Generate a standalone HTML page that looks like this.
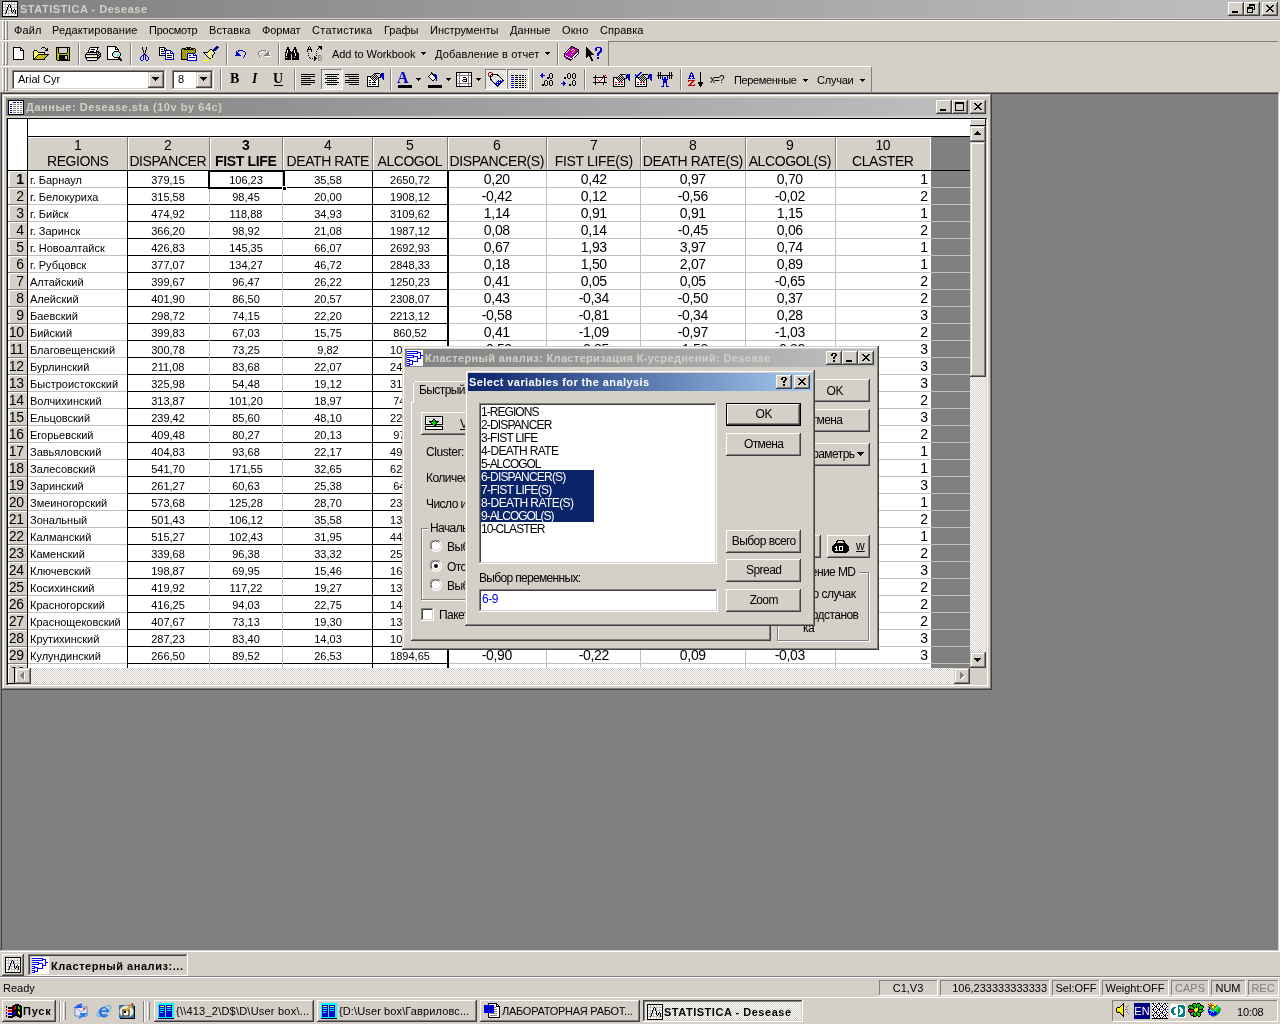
<!DOCTYPE html>
<html><head><meta charset="utf-8"><title>STATISTICA - Desease</title>
<style>
html,body{margin:0;padding:0;}
body{width:1280px;height:1024px;overflow:hidden;position:relative;background:#D4D0C8;font-family:"Liberation Sans",sans-serif;font-size:11px;}
.a{position:absolute;box-sizing:border-box;}
.t{position:absolute;white-space:pre;}
svg{display:block;}
</style></head><body><div id="root" style="position:absolute;left:0;top:0;width:1280px;height:1024px;will-change:transform;">
<div class="a " style="left:0px;top:0px;width:1280px;height:18px;background:linear-gradient(to right,#808080,#C0C0C0);"></div>
<span class="t" style="top:4px;font-size:11px;line-height:11px;color:#D4D0C8;font-weight:bold;letter-spacing:0.52px;left:20px;">STATISTICA - Desease</span>
<div class="a " style="left:1228px;top:2px;width:16px;height:14px;background:#D4D0C8;box-shadow:inset -1px -1px 0 #404040,inset 1px 1px 0 #FFFFFF,inset -2px -2px 0 #808080,inset 2px 2px 0 #D4D0C8;"></div>
<div class="a " style="left:1244px;top:2px;width:16px;height:14px;background:#D4D0C8;box-shadow:inset -1px -1px 0 #404040,inset 1px 1px 0 #FFFFFF,inset -2px -2px 0 #808080,inset 2px 2px 0 #D4D0C8;"></div>
<div class="a " style="left:1262px;top:2px;width:16px;height:14px;background:#D4D0C8;box-shadow:inset -1px -1px 0 #404040,inset 1px 1px 0 #FFFFFF,inset -2px -2px 0 #808080,inset 2px 2px 0 #D4D0C8;"></div>
<div class="a " style="left:0px;top:19px;width:1280px;height:1px;background:#808080;"></div>
<div class="a " style="left:0px;top:20px;width:1280px;height:1px;background:#FFFFFF;"></div>
<span class="t" style="top:25px;font-size:11px;line-height:11px;color:#000;letter-spacing:0.11px;left:14px;">Файл</span>
<span class="t" style="top:25px;font-size:11px;line-height:11px;color:#000;letter-spacing:0.12px;left:52px;">Редактирование</span>
<span class="t" style="top:25px;font-size:11px;line-height:11px;color:#000;letter-spacing:-0.22px;left:149px;">Просмотр</span>
<span class="t" style="top:25px;font-size:11px;line-height:11px;color:#000;letter-spacing:0.09px;left:209px;">Вставка</span>
<span class="t" style="top:25px;font-size:11px;line-height:11px;color:#000;letter-spacing:-0.1px;left:262px;">Формат</span>
<span class="t" style="top:25px;font-size:11px;line-height:11px;color:#000;letter-spacing:0.27px;left:312px;">Статистика</span>
<span class="t" style="top:25px;font-size:11px;line-height:11px;color:#000;letter-spacing:-0.01px;left:384px;">Графы</span>
<span class="t" style="top:25px;font-size:11px;line-height:11px;color:#000;letter-spacing:-0.01px;left:430px;">Инструменты</span>
<span class="t" style="top:25px;font-size:11px;line-height:11px;color:#000;letter-spacing:0.12px;left:510px;">Данные</span>
<span class="t" style="top:25px;font-size:11px;line-height:11px;color:#000;letter-spacing:0.23px;left:562px;">Окно</span>
<span class="t" style="top:25px;font-size:11px;line-height:11px;color:#000;letter-spacing:0.05px;left:600px;">Справка</span>
<div class="a " style="left:2px;top:21px;width:1px;height:19px;background:#FFFFFF;"></div>
<div class="a " style="left:4px;top:21px;width:1px;height:19px;background:#808080;"></div>
<div class="a " style="left:3px;top:39px;width:2px;height:1px;background:#808080;"></div>
<div class="a " style="left:5px;top:21px;width:1px;height:19px;background:#FFFFFF;"></div>
<div class="a " style="left:7px;top:21px;width:1px;height:19px;background:#808080;"></div>
<div class="a " style="left:6px;top:39px;width:2px;height:1px;background:#808080;"></div>
<div class="a " style="left:0px;top:40px;width:608px;height:1px;background:#FFFFFF;"></div>
<div class="a " style="left:608px;top:41px;width:670px;height:1px;background:#808080;"></div>
<div class="a " style="left:608px;top:41px;width:1px;height:25px;background:#808080;"></div>
<div class="a " style="left:2px;top:42px;width:1px;height:23px;background:#FFFFFF;"></div>
<div class="a " style="left:4px;top:42px;width:1px;height:23px;background:#808080;"></div>
<div class="a " style="left:3px;top:64px;width:2px;height:1px;background:#808080;"></div>
<div class="a " style="left:5px;top:42px;width:1px;height:23px;background:#FFFFFF;"></div>
<div class="a " style="left:7px;top:42px;width:1px;height:23px;background:#808080;"></div>
<div class="a " style="left:6px;top:64px;width:2px;height:1px;background:#808080;"></div>
<div class="a " style="left:0px;top:66px;width:871px;height:1px;background:#FFFFFF;"></div>
<div class="a " style="left:871px;top:67px;width:1px;height:25px;background:#808080;"></div>
<div class="a " style="left:2px;top:68px;width:1px;height:23px;background:#FFFFFF;"></div>
<div class="a " style="left:4px;top:68px;width:1px;height:23px;background:#808080;"></div>
<div class="a " style="left:3px;top:90px;width:2px;height:1px;background:#808080;"></div>
<div class="a " style="left:5px;top:68px;width:1px;height:23px;background:#FFFFFF;"></div>
<div class="a " style="left:7px;top:68px;width:1px;height:23px;background:#808080;"></div>
<div class="a " style="left:6px;top:90px;width:2px;height:1px;background:#808080;"></div>
<div class="a " style="left:0px;top:92px;width:1280px;height:1px;background:#808080;"></div>
<div class="a " style="left:1px;top:93px;width:1279px;height:1px;background:#404040;"></div>
<div class="a " style="left:0px;top:92px;width:1px;height:860px;background:#808080;"></div>
<div class="a " style="left:1px;top:93px;width:1px;height:858px;background:#404040;"></div>
<div class="a " style="left:2px;top:94px;width:1276px;height:856px;background:#808080;"></div>
<div class="a " style="left:1278px;top:93px;width:1px;height:858px;background:#D4D0C8;"></div>
<div class="a " style="left:1279px;top:92px;width:1px;height:860px;background:#FFFFFF;"></div>
<div class="a " style="left:1px;top:950px;width:1278px;height:1px;background:#D4D0C8;"></div>
<div class="a " style="left:0px;top:951px;width:1280px;height:1px;background:#FFFFFF;"></div>
<div class="a " style="left:2px;top:94px;width:990px;height:596px;background:#D4D0C8;box-shadow:inset -1px -1px 0 #404040,inset 1px 1px 0 #D4D0C8,inset -2px -2px 0 #808080,inset 2px 2px 0 #FFFFFF;"></div>
<div class="a " style="left:6px;top:98px;width:982px;height:18px;background:linear-gradient(to right,#808080,#C0C0C0);"></div>
<span class="t" style="top:102px;font-size:11px;line-height:11px;color:#D4D0C8;font-weight:bold;letter-spacing:0.54px;left:26px;">Данные: Desease.sta (10v by 64c)</span>
<div class="a " style="left:936px;top:100px;width:16px;height:14px;background:#D4D0C8;box-shadow:inset -1px -1px 0 #404040,inset 1px 1px 0 #FFFFFF,inset -2px -2px 0 #808080,inset 2px 2px 0 #D4D0C8;"></div>
<div class="a " style="left:952px;top:100px;width:16px;height:14px;background:#D4D0C8;box-shadow:inset -1px -1px 0 #404040,inset 1px 1px 0 #FFFFFF,inset -2px -2px 0 #808080,inset 2px 2px 0 #D4D0C8;"></div>
<div class="a " style="left:970px;top:100px;width:16px;height:14px;background:#D4D0C8;box-shadow:inset -1px -1px 0 #404040,inset 1px 1px 0 #FFFFFF,inset -2px -2px 0 #808080,inset 2px 2px 0 #D4D0C8;"></div>
<div class="a " style="left:6px;top:117px;width:982px;height:569px;background:#FFFFFF;box-shadow:inset -1px -1px 0 #FFFFFF,inset 1px 1px 0 #808080,inset -2px -2px 0 #D4D0C8,inset 2px 2px 0 #404040;"></div>
<div class="a " style="left:6px;top:117px;width:982px;height:1px;background:#D4D0C8;"></div>
<div class="a " style="left:7px;top:118px;width:980px;height:1px;background:#000000;"></div>
<div class="a " style="left:7px;top:118px;width:1px;height:567px;background:#000000;"></div>
<div class="a " style="left:27px;top:119px;width:1px;height:549px;background:#000000;"></div>
<div class="a " style="left:28px;top:136px;width:942px;height:1px;background:#000000;"></div>
<div class="a " style="left:28px;top:137px;width:903px;height:33px;background:#D4D0C8;"></div>
<div class="a " style="left:28px;top:137px;width:903px;height:1px;background:#FFFFFF;"></div>
<div class="a " style="left:127px;top:137px;width:1px;height:33px;background:#808080;"></div>
<div class="a " style="left:128px;top:137px;width:1px;height:33px;background:#FFFFFF;"></div>
<span class="t" style="top:138px;font-size:14px;line-height:14px;color:#000;letter-spacing:-0.38px;left:-422px;width:1000px;text-align:center;text-indent:-0.38px;">1</span>
<span class="t" style="top:154px;font-size:14px;line-height:14px;color:#000;letter-spacing:-0.44px;left:-422px;width:1000px;text-align:center;text-indent:-0.44px;">REGIONS</span>
<div class="a " style="left:209px;top:137px;width:1px;height:33px;background:#808080;"></div>
<div class="a " style="left:210px;top:137px;width:1px;height:33px;background:#FFFFFF;"></div>
<span class="t" style="top:138px;font-size:14px;line-height:14px;color:#000;letter-spacing:-0.38px;left:-332px;width:1000px;text-align:center;text-indent:-0.38px;">2</span>
<span class="t" style="top:154px;font-size:14px;line-height:14px;color:#000;letter-spacing:-0.43px;left:-332px;width:1000px;text-align:center;text-indent:-0.43px;">DISPANCER</span>
<div class="a " style="left:282px;top:137px;width:1px;height:33px;background:#808080;"></div>
<div class="a " style="left:283px;top:137px;width:1px;height:33px;background:#FFFFFF;"></div>
<span class="t" style="top:138px;font-size:14px;line-height:14px;color:#000;font-weight:bold;letter-spacing:-0.38px;left:-254px;width:1000px;text-align:center;text-indent:-0.38px;">3</span>
<span class="t" style="top:154px;font-size:14px;line-height:14px;color:#000;font-weight:bold;letter-spacing:-0.34px;left:-254px;width:1000px;text-align:center;text-indent:-0.34px;">FIST LIFE</span>
<div class="a " style="left:372px;top:137px;width:1px;height:33px;background:#808080;"></div>
<div class="a " style="left:373px;top:137px;width:1px;height:33px;background:#FFFFFF;"></div>
<span class="t" style="top:138px;font-size:14px;line-height:14px;color:#000;letter-spacing:-0.38px;left:-172px;width:1000px;text-align:center;text-indent:-0.38px;">4</span>
<span class="t" style="top:154px;font-size:14px;line-height:14px;color:#000;letter-spacing:-0.42px;left:-172px;width:1000px;text-align:center;text-indent:-0.42px;">DEATH RATE</span>
<div class="a " style="left:447px;top:137px;width:1px;height:33px;background:#808080;"></div>
<div class="a " style="left:448px;top:137px;width:1px;height:33px;background:#FFFFFF;"></div>
<span class="t" style="top:138px;font-size:14px;line-height:14px;color:#000;letter-spacing:-0.38px;left:-90px;width:1000px;text-align:center;text-indent:-0.38px;">5</span>
<span class="t" style="top:154px;font-size:14px;line-height:14px;color:#000;letter-spacing:-0.46px;left:-90px;width:1000px;text-align:center;text-indent:-0.46px;">ALCOGOL</span>
<div class="a " style="left:546px;top:137px;width:1px;height:33px;background:#808080;"></div>
<div class="a " style="left:547px;top:137px;width:1px;height:33px;background:#FFFFFF;"></div>
<span class="t" style="top:138px;font-size:14px;line-height:14px;color:#000;letter-spacing:-0.38px;left:-3px;width:1000px;text-align:center;text-indent:-0.38px;">6</span>
<span class="t" style="top:154px;font-size:14px;line-height:14px;color:#000;letter-spacing:-0.4px;left:-3px;width:1000px;text-align:center;text-indent:-0.4px;">DISPANCER(S)</span>
<div class="a " style="left:640px;top:137px;width:1px;height:33px;background:#808080;"></div>
<div class="a " style="left:641px;top:137px;width:1px;height:33px;background:#FFFFFF;"></div>
<span class="t" style="top:138px;font-size:14px;line-height:14px;color:#000;letter-spacing:-0.38px;left:94px;width:1000px;text-align:center;text-indent:-0.38px;">7</span>
<span class="t" style="top:154px;font-size:14px;line-height:14px;color:#000;letter-spacing:-0.33px;left:94px;width:1000px;text-align:center;text-indent:-0.33px;">FIST LIFE(S)</span>
<div class="a " style="left:745px;top:137px;width:1px;height:33px;background:#808080;"></div>
<div class="a " style="left:746px;top:137px;width:1px;height:33px;background:#FFFFFF;"></div>
<span class="t" style="top:138px;font-size:14px;line-height:14px;color:#000;letter-spacing:-0.38px;left:193px;width:1000px;text-align:center;text-indent:-0.38px;">8</span>
<span class="t" style="top:154px;font-size:14px;line-height:14px;color:#000;letter-spacing:-0.39px;left:193px;width:1000px;text-align:center;text-indent:-0.39px;">DEATH RATE(S)</span>
<div class="a " style="left:835px;top:137px;width:1px;height:33px;background:#808080;"></div>
<div class="a " style="left:836px;top:137px;width:1px;height:33px;background:#FFFFFF;"></div>
<span class="t" style="top:138px;font-size:14px;line-height:14px;color:#000;letter-spacing:-0.38px;left:290px;width:1000px;text-align:center;text-indent:-0.38px;">9</span>
<span class="t" style="top:154px;font-size:14px;line-height:14px;color:#000;letter-spacing:-0.41px;left:290px;width:1000px;text-align:center;text-indent:-0.41px;">ALCOGOL(S)</span>
<span class="t" style="top:138px;font-size:14px;line-height:14px;color:#000;letter-spacing:-0.38px;left:383px;width:1000px;text-align:center;text-indent:-0.38px;">10</span>
<span class="t" style="top:154px;font-size:14px;line-height:14px;color:#000;letter-spacing:-0.44px;left:383px;width:1000px;text-align:center;text-indent:-0.44px;">CLASTER</span>
<div class="a " style="left:930px;top:137px;width:1px;height:33px;background:#FFFFFF;"></div>
<div class="a " style="left:931px;top:137px;width:39px;height:531px;background:#808080;"></div>
<div class="a " style="left:8px;top:170px;width:962px;height:1px;background:#000000;"></div>
<div class="a " style="left:8px;top:171px;width:19px;height:16px;background:#D4D0C8;"></div>
<div class="a " style="left:8px;top:171px;width:19px;height:1px;background:#FFFFFF;"></div>
<div class="a " style="left:8px;top:171px;width:1px;height:16px;background:#FFFFFF;"></div>
<div class="a " style="left:9px;top:171px;width:1px;height:16px;background:#FFFFFF;"></div>
<div class="a " style="left:8px;top:187px;width:19px;height:1px;background:#808080;"></div>
<div class="a " style="left:28px;top:187px;width:99px;height:1px;background:#C0C0C0;"></div>
<div class="a " style="left:128px;top:187px;width:319px;height:1px;background:#000000;"></div>
<div class="a " style="left:449px;top:187px;width:482px;height:1px;background:#C0C0C0;"></div>
<div class="a " style="left:931px;top:187px;width:39px;height:1px;background:#C0C0C0;"></div>
<span class="t" style="top:172px;font-size:14px;line-height:14px;color:#000;font-weight:bold;letter-spacing:-0.38px;right:1256.38px;">1</span>
<span class="t" style="top:175px;font-size:11px;line-height:11px;color:#000;left:30px;">г. Барнаул</span>
<span class="t" style="top:175px;font-size:11px;line-height:11px;color:#000;left:-332px;width:1000px;text-align:center;">379,15</span>
<span class="t" style="top:175px;font-size:11px;line-height:11px;color:#000;left:-254px;width:1000px;text-align:center;">106,23</span>
<span class="t" style="top:175px;font-size:11px;line-height:11px;color:#000;left:-172px;width:1000px;text-align:center;">35,58</span>
<span class="t" style="top:175px;font-size:11px;line-height:11px;color:#000;left:-90px;width:1000px;text-align:center;">2650,72</span>
<span class="t" style="top:172px;font-size:14px;line-height:14px;color:#000;letter-spacing:-0.32px;left:-3px;width:1000px;text-align:center;text-indent:-0.32px;">0,20</span>
<span class="t" style="top:172px;font-size:14px;line-height:14px;color:#000;letter-spacing:-0.32px;left:94px;width:1000px;text-align:center;text-indent:-0.32px;">0,42</span>
<span class="t" style="top:172px;font-size:14px;line-height:14px;color:#000;letter-spacing:-0.32px;left:193px;width:1000px;text-align:center;text-indent:-0.32px;">0,97</span>
<span class="t" style="top:172px;font-size:14px;line-height:14px;color:#000;letter-spacing:-0.32px;left:290px;width:1000px;text-align:center;text-indent:-0.32px;">0,70</span>
<span class="t" style="top:172px;font-size:14px;line-height:14px;color:#000;letter-spacing:-0.38px;right:352.38px;">1</span>
<div class="a " style="left:8px;top:188px;width:19px;height:16px;background:#D4D0C8;"></div>
<div class="a " style="left:8px;top:188px;width:19px;height:1px;background:#FFFFFF;"></div>
<div class="a " style="left:8px;top:188px;width:1px;height:16px;background:#FFFFFF;"></div>
<div class="a " style="left:9px;top:188px;width:1px;height:16px;background:#FFFFFF;"></div>
<div class="a " style="left:8px;top:204px;width:19px;height:1px;background:#808080;"></div>
<div class="a " style="left:28px;top:204px;width:99px;height:1px;background:#C0C0C0;"></div>
<div class="a " style="left:128px;top:204px;width:319px;height:1px;background:#000000;"></div>
<div class="a " style="left:449px;top:204px;width:482px;height:1px;background:#C0C0C0;"></div>
<div class="a " style="left:931px;top:204px;width:39px;height:1px;background:#C0C0C0;"></div>
<span class="t" style="top:189px;font-size:14px;line-height:14px;color:#000;letter-spacing:-0.38px;right:1256.38px;">2</span>
<span class="t" style="top:192px;font-size:11px;line-height:11px;color:#000;left:30px;">г. Белокуриха</span>
<span class="t" style="top:192px;font-size:11px;line-height:11px;color:#000;left:-332px;width:1000px;text-align:center;">315,58</span>
<span class="t" style="top:192px;font-size:11px;line-height:11px;color:#000;left:-254px;width:1000px;text-align:center;">98,45</span>
<span class="t" style="top:192px;font-size:11px;line-height:11px;color:#000;left:-172px;width:1000px;text-align:center;">20,00</span>
<span class="t" style="top:192px;font-size:11px;line-height:11px;color:#000;left:-90px;width:1000px;text-align:center;">1908,12</span>
<span class="t" style="top:189px;font-size:14px;line-height:14px;color:#000;letter-spacing:-0.31px;left:-3px;width:1000px;text-align:center;text-indent:-0.31px;">-0,42</span>
<span class="t" style="top:189px;font-size:14px;line-height:14px;color:#000;letter-spacing:-0.32px;left:94px;width:1000px;text-align:center;text-indent:-0.32px;">0,12</span>
<span class="t" style="top:189px;font-size:14px;line-height:14px;color:#000;letter-spacing:-0.31px;left:193px;width:1000px;text-align:center;text-indent:-0.31px;">-0,56</span>
<span class="t" style="top:189px;font-size:14px;line-height:14px;color:#000;letter-spacing:-0.31px;left:290px;width:1000px;text-align:center;text-indent:-0.31px;">-0,02</span>
<span class="t" style="top:189px;font-size:14px;line-height:14px;color:#000;letter-spacing:-0.38px;right:352.38px;">2</span>
<div class="a " style="left:8px;top:205px;width:19px;height:16px;background:#D4D0C8;"></div>
<div class="a " style="left:8px;top:205px;width:19px;height:1px;background:#FFFFFF;"></div>
<div class="a " style="left:8px;top:205px;width:1px;height:16px;background:#FFFFFF;"></div>
<div class="a " style="left:9px;top:205px;width:1px;height:16px;background:#FFFFFF;"></div>
<div class="a " style="left:8px;top:221px;width:19px;height:1px;background:#808080;"></div>
<div class="a " style="left:28px;top:221px;width:99px;height:1px;background:#C0C0C0;"></div>
<div class="a " style="left:128px;top:221px;width:319px;height:1px;background:#000000;"></div>
<div class="a " style="left:449px;top:221px;width:482px;height:1px;background:#C0C0C0;"></div>
<div class="a " style="left:931px;top:221px;width:39px;height:1px;background:#C0C0C0;"></div>
<span class="t" style="top:206px;font-size:14px;line-height:14px;color:#000;letter-spacing:-0.38px;right:1256.38px;">3</span>
<span class="t" style="top:209px;font-size:11px;line-height:11px;color:#000;left:30px;">г. Бийск</span>
<span class="t" style="top:209px;font-size:11px;line-height:11px;color:#000;left:-332px;width:1000px;text-align:center;">474,92</span>
<span class="t" style="top:209px;font-size:11px;line-height:11px;color:#000;left:-254px;width:1000px;text-align:center;">118,88</span>
<span class="t" style="top:209px;font-size:11px;line-height:11px;color:#000;left:-172px;width:1000px;text-align:center;">34,93</span>
<span class="t" style="top:209px;font-size:11px;line-height:11px;color:#000;left:-90px;width:1000px;text-align:center;">3109,62</span>
<span class="t" style="top:206px;font-size:14px;line-height:14px;color:#000;letter-spacing:-0.32px;left:-3px;width:1000px;text-align:center;text-indent:-0.32px;">1,14</span>
<span class="t" style="top:206px;font-size:14px;line-height:14px;color:#000;letter-spacing:-0.32px;left:94px;width:1000px;text-align:center;text-indent:-0.32px;">0,91</span>
<span class="t" style="top:206px;font-size:14px;line-height:14px;color:#000;letter-spacing:-0.32px;left:193px;width:1000px;text-align:center;text-indent:-0.32px;">0,91</span>
<span class="t" style="top:206px;font-size:14px;line-height:14px;color:#000;letter-spacing:-0.32px;left:290px;width:1000px;text-align:center;text-indent:-0.32px;">1,15</span>
<span class="t" style="top:206px;font-size:14px;line-height:14px;color:#000;letter-spacing:-0.38px;right:352.38px;">1</span>
<div class="a " style="left:8px;top:222px;width:19px;height:16px;background:#D4D0C8;"></div>
<div class="a " style="left:8px;top:222px;width:19px;height:1px;background:#FFFFFF;"></div>
<div class="a " style="left:8px;top:222px;width:1px;height:16px;background:#FFFFFF;"></div>
<div class="a " style="left:9px;top:222px;width:1px;height:16px;background:#FFFFFF;"></div>
<div class="a " style="left:8px;top:238px;width:19px;height:1px;background:#808080;"></div>
<div class="a " style="left:28px;top:238px;width:99px;height:1px;background:#C0C0C0;"></div>
<div class="a " style="left:128px;top:238px;width:319px;height:1px;background:#000000;"></div>
<div class="a " style="left:449px;top:238px;width:482px;height:1px;background:#C0C0C0;"></div>
<div class="a " style="left:931px;top:238px;width:39px;height:1px;background:#C0C0C0;"></div>
<span class="t" style="top:223px;font-size:14px;line-height:14px;color:#000;letter-spacing:-0.38px;right:1256.38px;">4</span>
<span class="t" style="top:226px;font-size:11px;line-height:11px;color:#000;left:30px;">г. Заринск</span>
<span class="t" style="top:226px;font-size:11px;line-height:11px;color:#000;left:-332px;width:1000px;text-align:center;">366,20</span>
<span class="t" style="top:226px;font-size:11px;line-height:11px;color:#000;left:-254px;width:1000px;text-align:center;">98,92</span>
<span class="t" style="top:226px;font-size:11px;line-height:11px;color:#000;left:-172px;width:1000px;text-align:center;">21,08</span>
<span class="t" style="top:226px;font-size:11px;line-height:11px;color:#000;left:-90px;width:1000px;text-align:center;">1987,12</span>
<span class="t" style="top:223px;font-size:14px;line-height:14px;color:#000;letter-spacing:-0.32px;left:-3px;width:1000px;text-align:center;text-indent:-0.32px;">0,08</span>
<span class="t" style="top:223px;font-size:14px;line-height:14px;color:#000;letter-spacing:-0.32px;left:94px;width:1000px;text-align:center;text-indent:-0.32px;">0,14</span>
<span class="t" style="top:223px;font-size:14px;line-height:14px;color:#000;letter-spacing:-0.31px;left:193px;width:1000px;text-align:center;text-indent:-0.31px;">-0,45</span>
<span class="t" style="top:223px;font-size:14px;line-height:14px;color:#000;letter-spacing:-0.32px;left:290px;width:1000px;text-align:center;text-indent:-0.32px;">0,06</span>
<span class="t" style="top:223px;font-size:14px;line-height:14px;color:#000;letter-spacing:-0.38px;right:352.38px;">2</span>
<div class="a " style="left:8px;top:239px;width:19px;height:16px;background:#D4D0C8;"></div>
<div class="a " style="left:8px;top:239px;width:19px;height:1px;background:#FFFFFF;"></div>
<div class="a " style="left:8px;top:239px;width:1px;height:16px;background:#FFFFFF;"></div>
<div class="a " style="left:9px;top:239px;width:1px;height:16px;background:#FFFFFF;"></div>
<div class="a " style="left:8px;top:255px;width:19px;height:1px;background:#808080;"></div>
<div class="a " style="left:28px;top:255px;width:99px;height:1px;background:#C0C0C0;"></div>
<div class="a " style="left:128px;top:255px;width:319px;height:1px;background:#000000;"></div>
<div class="a " style="left:449px;top:255px;width:482px;height:1px;background:#C0C0C0;"></div>
<div class="a " style="left:931px;top:255px;width:39px;height:1px;background:#C0C0C0;"></div>
<span class="t" style="top:240px;font-size:14px;line-height:14px;color:#000;letter-spacing:-0.38px;right:1256.38px;">5</span>
<span class="t" style="top:243px;font-size:11px;line-height:11px;color:#000;left:30px;">г. Новоалтайск</span>
<span class="t" style="top:243px;font-size:11px;line-height:11px;color:#000;left:-332px;width:1000px;text-align:center;">426,83</span>
<span class="t" style="top:243px;font-size:11px;line-height:11px;color:#000;left:-254px;width:1000px;text-align:center;">145,35</span>
<span class="t" style="top:243px;font-size:11px;line-height:11px;color:#000;left:-172px;width:1000px;text-align:center;">66,07</span>
<span class="t" style="top:243px;font-size:11px;line-height:11px;color:#000;left:-90px;width:1000px;text-align:center;">2692,93</span>
<span class="t" style="top:240px;font-size:14px;line-height:14px;color:#000;letter-spacing:-0.32px;left:-3px;width:1000px;text-align:center;text-indent:-0.32px;">0,67</span>
<span class="t" style="top:240px;font-size:14px;line-height:14px;color:#000;letter-spacing:-0.32px;left:94px;width:1000px;text-align:center;text-indent:-0.32px;">1,93</span>
<span class="t" style="top:240px;font-size:14px;line-height:14px;color:#000;letter-spacing:-0.32px;left:193px;width:1000px;text-align:center;text-indent:-0.32px;">3,97</span>
<span class="t" style="top:240px;font-size:14px;line-height:14px;color:#000;letter-spacing:-0.32px;left:290px;width:1000px;text-align:center;text-indent:-0.32px;">0,74</span>
<span class="t" style="top:240px;font-size:14px;line-height:14px;color:#000;letter-spacing:-0.38px;right:352.38px;">1</span>
<div class="a " style="left:8px;top:256px;width:19px;height:16px;background:#D4D0C8;"></div>
<div class="a " style="left:8px;top:256px;width:19px;height:1px;background:#FFFFFF;"></div>
<div class="a " style="left:8px;top:256px;width:1px;height:16px;background:#FFFFFF;"></div>
<div class="a " style="left:9px;top:256px;width:1px;height:16px;background:#FFFFFF;"></div>
<div class="a " style="left:8px;top:272px;width:19px;height:1px;background:#808080;"></div>
<div class="a " style="left:28px;top:272px;width:99px;height:1px;background:#C0C0C0;"></div>
<div class="a " style="left:128px;top:272px;width:319px;height:1px;background:#000000;"></div>
<div class="a " style="left:449px;top:272px;width:482px;height:1px;background:#C0C0C0;"></div>
<div class="a " style="left:931px;top:272px;width:39px;height:1px;background:#C0C0C0;"></div>
<span class="t" style="top:257px;font-size:14px;line-height:14px;color:#000;letter-spacing:-0.38px;right:1256.38px;">6</span>
<span class="t" style="top:260px;font-size:11px;line-height:11px;color:#000;left:30px;">г. Рубцовск</span>
<span class="t" style="top:260px;font-size:11px;line-height:11px;color:#000;left:-332px;width:1000px;text-align:center;">377,07</span>
<span class="t" style="top:260px;font-size:11px;line-height:11px;color:#000;left:-254px;width:1000px;text-align:center;">134,27</span>
<span class="t" style="top:260px;font-size:11px;line-height:11px;color:#000;left:-172px;width:1000px;text-align:center;">46,72</span>
<span class="t" style="top:260px;font-size:11px;line-height:11px;color:#000;left:-90px;width:1000px;text-align:center;">2848,33</span>
<span class="t" style="top:257px;font-size:14px;line-height:14px;color:#000;letter-spacing:-0.32px;left:-3px;width:1000px;text-align:center;text-indent:-0.32px;">0,18</span>
<span class="t" style="top:257px;font-size:14px;line-height:14px;color:#000;letter-spacing:-0.32px;left:94px;width:1000px;text-align:center;text-indent:-0.32px;">1,50</span>
<span class="t" style="top:257px;font-size:14px;line-height:14px;color:#000;letter-spacing:-0.32px;left:193px;width:1000px;text-align:center;text-indent:-0.32px;">2,07</span>
<span class="t" style="top:257px;font-size:14px;line-height:14px;color:#000;letter-spacing:-0.32px;left:290px;width:1000px;text-align:center;text-indent:-0.32px;">0,89</span>
<span class="t" style="top:257px;font-size:14px;line-height:14px;color:#000;letter-spacing:-0.38px;right:352.38px;">1</span>
<div class="a " style="left:8px;top:273px;width:19px;height:16px;background:#D4D0C8;"></div>
<div class="a " style="left:8px;top:273px;width:19px;height:1px;background:#FFFFFF;"></div>
<div class="a " style="left:8px;top:273px;width:1px;height:16px;background:#FFFFFF;"></div>
<div class="a " style="left:9px;top:273px;width:1px;height:16px;background:#FFFFFF;"></div>
<div class="a " style="left:8px;top:289px;width:19px;height:1px;background:#808080;"></div>
<div class="a " style="left:28px;top:289px;width:99px;height:1px;background:#C0C0C0;"></div>
<div class="a " style="left:128px;top:289px;width:319px;height:1px;background:#000000;"></div>
<div class="a " style="left:449px;top:289px;width:482px;height:1px;background:#C0C0C0;"></div>
<div class="a " style="left:931px;top:289px;width:39px;height:1px;background:#C0C0C0;"></div>
<span class="t" style="top:274px;font-size:14px;line-height:14px;color:#000;letter-spacing:-0.38px;right:1256.38px;">7</span>
<span class="t" style="top:277px;font-size:11px;line-height:11px;color:#000;left:30px;">Алтайский</span>
<span class="t" style="top:277px;font-size:11px;line-height:11px;color:#000;left:-332px;width:1000px;text-align:center;">399,67</span>
<span class="t" style="top:277px;font-size:11px;line-height:11px;color:#000;left:-254px;width:1000px;text-align:center;">96,47</span>
<span class="t" style="top:277px;font-size:11px;line-height:11px;color:#000;left:-172px;width:1000px;text-align:center;">26,22</span>
<span class="t" style="top:277px;font-size:11px;line-height:11px;color:#000;left:-90px;width:1000px;text-align:center;">1250,23</span>
<span class="t" style="top:274px;font-size:14px;line-height:14px;color:#000;letter-spacing:-0.32px;left:-3px;width:1000px;text-align:center;text-indent:-0.32px;">0,41</span>
<span class="t" style="top:274px;font-size:14px;line-height:14px;color:#000;letter-spacing:-0.32px;left:94px;width:1000px;text-align:center;text-indent:-0.32px;">0,05</span>
<span class="t" style="top:274px;font-size:14px;line-height:14px;color:#000;letter-spacing:-0.32px;left:193px;width:1000px;text-align:center;text-indent:-0.32px;">0,05</span>
<span class="t" style="top:274px;font-size:14px;line-height:14px;color:#000;letter-spacing:-0.31px;left:290px;width:1000px;text-align:center;text-indent:-0.31px;">-0,65</span>
<span class="t" style="top:274px;font-size:14px;line-height:14px;color:#000;letter-spacing:-0.38px;right:352.38px;">2</span>
<div class="a " style="left:8px;top:290px;width:19px;height:16px;background:#D4D0C8;"></div>
<div class="a " style="left:8px;top:290px;width:19px;height:1px;background:#FFFFFF;"></div>
<div class="a " style="left:8px;top:290px;width:1px;height:16px;background:#FFFFFF;"></div>
<div class="a " style="left:9px;top:290px;width:1px;height:16px;background:#FFFFFF;"></div>
<div class="a " style="left:8px;top:306px;width:19px;height:1px;background:#808080;"></div>
<div class="a " style="left:28px;top:306px;width:99px;height:1px;background:#C0C0C0;"></div>
<div class="a " style="left:128px;top:306px;width:319px;height:1px;background:#000000;"></div>
<div class="a " style="left:449px;top:306px;width:482px;height:1px;background:#C0C0C0;"></div>
<div class="a " style="left:931px;top:306px;width:39px;height:1px;background:#C0C0C0;"></div>
<span class="t" style="top:291px;font-size:14px;line-height:14px;color:#000;letter-spacing:-0.38px;right:1256.38px;">8</span>
<span class="t" style="top:294px;font-size:11px;line-height:11px;color:#000;left:30px;">Алейский</span>
<span class="t" style="top:294px;font-size:11px;line-height:11px;color:#000;left:-332px;width:1000px;text-align:center;">401,90</span>
<span class="t" style="top:294px;font-size:11px;line-height:11px;color:#000;left:-254px;width:1000px;text-align:center;">86,50</span>
<span class="t" style="top:294px;font-size:11px;line-height:11px;color:#000;left:-172px;width:1000px;text-align:center;">20,57</span>
<span class="t" style="top:294px;font-size:11px;line-height:11px;color:#000;left:-90px;width:1000px;text-align:center;">2308,07</span>
<span class="t" style="top:291px;font-size:14px;line-height:14px;color:#000;letter-spacing:-0.32px;left:-3px;width:1000px;text-align:center;text-indent:-0.32px;">0,43</span>
<span class="t" style="top:291px;font-size:14px;line-height:14px;color:#000;letter-spacing:-0.31px;left:94px;width:1000px;text-align:center;text-indent:-0.31px;">-0,34</span>
<span class="t" style="top:291px;font-size:14px;line-height:14px;color:#000;letter-spacing:-0.31px;left:193px;width:1000px;text-align:center;text-indent:-0.31px;">-0,50</span>
<span class="t" style="top:291px;font-size:14px;line-height:14px;color:#000;letter-spacing:-0.32px;left:290px;width:1000px;text-align:center;text-indent:-0.32px;">0,37</span>
<span class="t" style="top:291px;font-size:14px;line-height:14px;color:#000;letter-spacing:-0.38px;right:352.38px;">2</span>
<div class="a " style="left:8px;top:307px;width:19px;height:16px;background:#D4D0C8;"></div>
<div class="a " style="left:8px;top:307px;width:19px;height:1px;background:#FFFFFF;"></div>
<div class="a " style="left:8px;top:307px;width:1px;height:16px;background:#FFFFFF;"></div>
<div class="a " style="left:9px;top:307px;width:1px;height:16px;background:#FFFFFF;"></div>
<div class="a " style="left:8px;top:323px;width:19px;height:1px;background:#808080;"></div>
<div class="a " style="left:28px;top:323px;width:99px;height:1px;background:#C0C0C0;"></div>
<div class="a " style="left:128px;top:323px;width:319px;height:1px;background:#000000;"></div>
<div class="a " style="left:449px;top:323px;width:482px;height:1px;background:#C0C0C0;"></div>
<div class="a " style="left:931px;top:323px;width:39px;height:1px;background:#C0C0C0;"></div>
<span class="t" style="top:308px;font-size:14px;line-height:14px;color:#000;letter-spacing:-0.38px;right:1256.38px;">9</span>
<span class="t" style="top:311px;font-size:11px;line-height:11px;color:#000;left:30px;">Баевский</span>
<span class="t" style="top:311px;font-size:11px;line-height:11px;color:#000;left:-332px;width:1000px;text-align:center;">298,72</span>
<span class="t" style="top:311px;font-size:11px;line-height:11px;color:#000;left:-254px;width:1000px;text-align:center;">74,15</span>
<span class="t" style="top:311px;font-size:11px;line-height:11px;color:#000;left:-172px;width:1000px;text-align:center;">22,20</span>
<span class="t" style="top:311px;font-size:11px;line-height:11px;color:#000;left:-90px;width:1000px;text-align:center;">2213,12</span>
<span class="t" style="top:308px;font-size:14px;line-height:14px;color:#000;letter-spacing:-0.31px;left:-3px;width:1000px;text-align:center;text-indent:-0.31px;">-0,58</span>
<span class="t" style="top:308px;font-size:14px;line-height:14px;color:#000;letter-spacing:-0.31px;left:94px;width:1000px;text-align:center;text-indent:-0.31px;">-0,81</span>
<span class="t" style="top:308px;font-size:14px;line-height:14px;color:#000;letter-spacing:-0.31px;left:193px;width:1000px;text-align:center;text-indent:-0.31px;">-0,34</span>
<span class="t" style="top:308px;font-size:14px;line-height:14px;color:#000;letter-spacing:-0.32px;left:290px;width:1000px;text-align:center;text-indent:-0.32px;">0,28</span>
<span class="t" style="top:308px;font-size:14px;line-height:14px;color:#000;letter-spacing:-0.38px;right:352.38px;">3</span>
<div class="a " style="left:8px;top:324px;width:19px;height:16px;background:#D4D0C8;"></div>
<div class="a " style="left:8px;top:324px;width:19px;height:1px;background:#FFFFFF;"></div>
<div class="a " style="left:8px;top:324px;width:1px;height:16px;background:#FFFFFF;"></div>
<div class="a " style="left:9px;top:324px;width:1px;height:16px;background:#FFFFFF;"></div>
<div class="a " style="left:8px;top:340px;width:19px;height:1px;background:#808080;"></div>
<div class="a " style="left:28px;top:340px;width:99px;height:1px;background:#C0C0C0;"></div>
<div class="a " style="left:128px;top:340px;width:319px;height:1px;background:#000000;"></div>
<div class="a " style="left:449px;top:340px;width:482px;height:1px;background:#C0C0C0;"></div>
<div class="a " style="left:931px;top:340px;width:39px;height:1px;background:#C0C0C0;"></div>
<span class="t" style="top:325px;font-size:14px;line-height:14px;color:#000;letter-spacing:-0.38px;right:1256.38px;">10</span>
<span class="t" style="top:328px;font-size:11px;line-height:11px;color:#000;left:30px;">Бийский</span>
<span class="t" style="top:328px;font-size:11px;line-height:11px;color:#000;left:-332px;width:1000px;text-align:center;">399,83</span>
<span class="t" style="top:328px;font-size:11px;line-height:11px;color:#000;left:-254px;width:1000px;text-align:center;">67,03</span>
<span class="t" style="top:328px;font-size:11px;line-height:11px;color:#000;left:-172px;width:1000px;text-align:center;">15,75</span>
<span class="t" style="top:328px;font-size:11px;line-height:11px;color:#000;left:-90px;width:1000px;text-align:center;">860,52</span>
<span class="t" style="top:325px;font-size:14px;line-height:14px;color:#000;letter-spacing:-0.32px;left:-3px;width:1000px;text-align:center;text-indent:-0.32px;">0,41</span>
<span class="t" style="top:325px;font-size:14px;line-height:14px;color:#000;letter-spacing:-0.31px;left:94px;width:1000px;text-align:center;text-indent:-0.31px;">-1,09</span>
<span class="t" style="top:325px;font-size:14px;line-height:14px;color:#000;letter-spacing:-0.31px;left:193px;width:1000px;text-align:center;text-indent:-0.31px;">-0,97</span>
<span class="t" style="top:325px;font-size:14px;line-height:14px;color:#000;letter-spacing:-0.31px;left:290px;width:1000px;text-align:center;text-indent:-0.31px;">-1,03</span>
<span class="t" style="top:325px;font-size:14px;line-height:14px;color:#000;letter-spacing:-0.38px;right:352.38px;">2</span>
<div class="a " style="left:8px;top:341px;width:19px;height:16px;background:#D4D0C8;"></div>
<div class="a " style="left:8px;top:341px;width:19px;height:1px;background:#FFFFFF;"></div>
<div class="a " style="left:8px;top:341px;width:1px;height:16px;background:#FFFFFF;"></div>
<div class="a " style="left:9px;top:341px;width:1px;height:16px;background:#FFFFFF;"></div>
<div class="a " style="left:8px;top:357px;width:19px;height:1px;background:#808080;"></div>
<div class="a " style="left:28px;top:357px;width:99px;height:1px;background:#C0C0C0;"></div>
<div class="a " style="left:128px;top:357px;width:319px;height:1px;background:#000000;"></div>
<div class="a " style="left:449px;top:357px;width:482px;height:1px;background:#C0C0C0;"></div>
<div class="a " style="left:931px;top:357px;width:39px;height:1px;background:#C0C0C0;"></div>
<span class="t" style="top:342px;font-size:14px;line-height:14px;color:#000;letter-spacing:-0.35px;right:1256.35px;">11</span>
<span class="t" style="top:345px;font-size:11px;line-height:11px;color:#000;left:30px;">Благовещенский</span>
<span class="t" style="top:345px;font-size:11px;line-height:11px;color:#000;left:-332px;width:1000px;text-align:center;">300,78</span>
<span class="t" style="top:345px;font-size:11px;line-height:11px;color:#000;left:-254px;width:1000px;text-align:center;">73,25</span>
<span class="t" style="top:345px;font-size:11px;line-height:11px;color:#000;left:-172px;width:1000px;text-align:center;">9,82</span>
<span class="t" style="top:345px;font-size:11px;line-height:11px;color:#000;left:-90px;width:1000px;text-align:center;">1025,43</span>
<span class="t" style="top:342px;font-size:14px;line-height:14px;color:#000;letter-spacing:-0.31px;left:-3px;width:1000px;text-align:center;text-indent:-0.31px;">-0,59</span>
<span class="t" style="top:342px;font-size:14px;line-height:14px;color:#000;letter-spacing:-0.31px;left:94px;width:1000px;text-align:center;text-indent:-0.31px;">-0,85</span>
<span class="t" style="top:342px;font-size:14px;line-height:14px;color:#000;letter-spacing:-0.31px;left:193px;width:1000px;text-align:center;text-indent:-0.31px;">-1,58</span>
<span class="t" style="top:342px;font-size:14px;line-height:14px;color:#000;letter-spacing:-0.31px;left:290px;width:1000px;text-align:center;text-indent:-0.31px;">-0,82</span>
<span class="t" style="top:342px;font-size:14px;line-height:14px;color:#000;letter-spacing:-0.38px;right:352.38px;">3</span>
<div class="a " style="left:8px;top:358px;width:19px;height:16px;background:#D4D0C8;"></div>
<div class="a " style="left:8px;top:358px;width:19px;height:1px;background:#FFFFFF;"></div>
<div class="a " style="left:8px;top:358px;width:1px;height:16px;background:#FFFFFF;"></div>
<div class="a " style="left:9px;top:358px;width:1px;height:16px;background:#FFFFFF;"></div>
<div class="a " style="left:8px;top:374px;width:19px;height:1px;background:#808080;"></div>
<div class="a " style="left:28px;top:374px;width:99px;height:1px;background:#C0C0C0;"></div>
<div class="a " style="left:128px;top:374px;width:319px;height:1px;background:#000000;"></div>
<div class="a " style="left:449px;top:374px;width:482px;height:1px;background:#C0C0C0;"></div>
<div class="a " style="left:931px;top:374px;width:39px;height:1px;background:#C0C0C0;"></div>
<span class="t" style="top:359px;font-size:14px;line-height:14px;color:#000;letter-spacing:-0.38px;right:1256.38px;">12</span>
<span class="t" style="top:362px;font-size:11px;line-height:11px;color:#000;left:30px;">Бурлинский</span>
<span class="t" style="top:362px;font-size:11px;line-height:11px;color:#000;left:-332px;width:1000px;text-align:center;">211,08</span>
<span class="t" style="top:362px;font-size:11px;line-height:11px;color:#000;left:-254px;width:1000px;text-align:center;">83,68</span>
<span class="t" style="top:362px;font-size:11px;line-height:11px;color:#000;left:-172px;width:1000px;text-align:center;">22,07</span>
<span class="t" style="top:362px;font-size:11px;line-height:11px;color:#000;left:-90px;width:1000px;text-align:center;">2413,27</span>
<span class="t" style="top:359px;font-size:14px;line-height:14px;color:#000;letter-spacing:-0.31px;left:-3px;width:1000px;text-align:center;text-indent:-0.31px;">-1,51</span>
<span class="t" style="top:359px;font-size:14px;line-height:14px;color:#000;letter-spacing:-0.31px;left:94px;width:1000px;text-align:center;text-indent:-0.31px;">-0,46</span>
<span class="t" style="top:359px;font-size:14px;line-height:14px;color:#000;letter-spacing:-0.31px;left:193px;width:1000px;text-align:center;text-indent:-0.31px;">-0,34</span>
<span class="t" style="top:359px;font-size:14px;line-height:14px;color:#000;letter-spacing:-0.32px;left:290px;width:1000px;text-align:center;text-indent:-0.32px;">0,46</span>
<span class="t" style="top:359px;font-size:14px;line-height:14px;color:#000;letter-spacing:-0.38px;right:352.38px;">3</span>
<div class="a " style="left:8px;top:375px;width:19px;height:16px;background:#D4D0C8;"></div>
<div class="a " style="left:8px;top:375px;width:19px;height:1px;background:#FFFFFF;"></div>
<div class="a " style="left:8px;top:375px;width:1px;height:16px;background:#FFFFFF;"></div>
<div class="a " style="left:9px;top:375px;width:1px;height:16px;background:#FFFFFF;"></div>
<div class="a " style="left:8px;top:391px;width:19px;height:1px;background:#808080;"></div>
<div class="a " style="left:28px;top:391px;width:99px;height:1px;background:#C0C0C0;"></div>
<div class="a " style="left:128px;top:391px;width:319px;height:1px;background:#000000;"></div>
<div class="a " style="left:449px;top:391px;width:482px;height:1px;background:#C0C0C0;"></div>
<div class="a " style="left:931px;top:391px;width:39px;height:1px;background:#C0C0C0;"></div>
<span class="t" style="top:376px;font-size:14px;line-height:14px;color:#000;letter-spacing:-0.38px;right:1256.38px;">13</span>
<span class="t" style="top:379px;font-size:11px;line-height:11px;color:#000;left:30px;">Быстроистокский</span>
<span class="t" style="top:379px;font-size:11px;line-height:11px;color:#000;left:-332px;width:1000px;text-align:center;">325,98</span>
<span class="t" style="top:379px;font-size:11px;line-height:11px;color:#000;left:-254px;width:1000px;text-align:center;">54,48</span>
<span class="t" style="top:379px;font-size:11px;line-height:11px;color:#000;left:-172px;width:1000px;text-align:center;">19,12</span>
<span class="t" style="top:379px;font-size:11px;line-height:11px;color:#000;left:-90px;width:1000px;text-align:center;">3120,10</span>
<span class="t" style="top:376px;font-size:14px;line-height:14px;color:#000;letter-spacing:-0.31px;left:-3px;width:1000px;text-align:center;text-indent:-0.31px;">-0,32</span>
<span class="t" style="top:376px;font-size:14px;line-height:14px;color:#000;letter-spacing:-0.31px;left:94px;width:1000px;text-align:center;text-indent:-0.31px;">-1,56</span>
<span class="t" style="top:376px;font-size:14px;line-height:14px;color:#000;letter-spacing:-0.31px;left:193px;width:1000px;text-align:center;text-indent:-0.31px;">-0,64</span>
<span class="t" style="top:376px;font-size:14px;line-height:14px;color:#000;letter-spacing:-0.32px;left:290px;width:1000px;text-align:center;text-indent:-0.32px;">1,16</span>
<span class="t" style="top:376px;font-size:14px;line-height:14px;color:#000;letter-spacing:-0.38px;right:352.38px;">3</span>
<div class="a " style="left:8px;top:392px;width:19px;height:16px;background:#D4D0C8;"></div>
<div class="a " style="left:8px;top:392px;width:19px;height:1px;background:#FFFFFF;"></div>
<div class="a " style="left:8px;top:392px;width:1px;height:16px;background:#FFFFFF;"></div>
<div class="a " style="left:9px;top:392px;width:1px;height:16px;background:#FFFFFF;"></div>
<div class="a " style="left:8px;top:408px;width:19px;height:1px;background:#808080;"></div>
<div class="a " style="left:28px;top:408px;width:99px;height:1px;background:#C0C0C0;"></div>
<div class="a " style="left:128px;top:408px;width:319px;height:1px;background:#000000;"></div>
<div class="a " style="left:449px;top:408px;width:482px;height:1px;background:#C0C0C0;"></div>
<div class="a " style="left:931px;top:408px;width:39px;height:1px;background:#C0C0C0;"></div>
<span class="t" style="top:393px;font-size:14px;line-height:14px;color:#000;letter-spacing:-0.38px;right:1256.38px;">14</span>
<span class="t" style="top:396px;font-size:11px;line-height:11px;color:#000;left:30px;">Волчихинский</span>
<span class="t" style="top:396px;font-size:11px;line-height:11px;color:#000;left:-332px;width:1000px;text-align:center;">313,87</span>
<span class="t" style="top:396px;font-size:11px;line-height:11px;color:#000;left:-254px;width:1000px;text-align:center;">101,20</span>
<span class="t" style="top:396px;font-size:11px;line-height:11px;color:#000;left:-172px;width:1000px;text-align:center;">18,97</span>
<span class="t" style="top:396px;font-size:11px;line-height:11px;color:#000;left:-90px;width:1000px;text-align:center;">743,35</span>
<span class="t" style="top:393px;font-size:14px;line-height:14px;color:#000;letter-spacing:-0.31px;left:-3px;width:1000px;text-align:center;text-indent:-0.31px;">-0,44</span>
<span class="t" style="top:393px;font-size:14px;line-height:14px;color:#000;letter-spacing:-0.32px;left:94px;width:1000px;text-align:center;text-indent:-0.32px;">0,22</span>
<span class="t" style="top:393px;font-size:14px;line-height:14px;color:#000;letter-spacing:-0.31px;left:193px;width:1000px;text-align:center;text-indent:-0.31px;">-0,65</span>
<span class="t" style="top:393px;font-size:14px;line-height:14px;color:#000;letter-spacing:-0.31px;left:290px;width:1000px;text-align:center;text-indent:-0.31px;">-1,14</span>
<span class="t" style="top:393px;font-size:14px;line-height:14px;color:#000;letter-spacing:-0.38px;right:352.38px;">2</span>
<div class="a " style="left:8px;top:409px;width:19px;height:16px;background:#D4D0C8;"></div>
<div class="a " style="left:8px;top:409px;width:19px;height:1px;background:#FFFFFF;"></div>
<div class="a " style="left:8px;top:409px;width:1px;height:16px;background:#FFFFFF;"></div>
<div class="a " style="left:9px;top:409px;width:1px;height:16px;background:#FFFFFF;"></div>
<div class="a " style="left:8px;top:425px;width:19px;height:1px;background:#808080;"></div>
<div class="a " style="left:28px;top:425px;width:99px;height:1px;background:#C0C0C0;"></div>
<div class="a " style="left:128px;top:425px;width:319px;height:1px;background:#000000;"></div>
<div class="a " style="left:449px;top:425px;width:482px;height:1px;background:#C0C0C0;"></div>
<div class="a " style="left:931px;top:425px;width:39px;height:1px;background:#C0C0C0;"></div>
<span class="t" style="top:410px;font-size:14px;line-height:14px;color:#000;letter-spacing:-0.38px;right:1256.38px;">15</span>
<span class="t" style="top:413px;font-size:11px;line-height:11px;color:#000;left:30px;">Ельцовский</span>
<span class="t" style="top:413px;font-size:11px;line-height:11px;color:#000;left:-332px;width:1000px;text-align:center;">239,42</span>
<span class="t" style="top:413px;font-size:11px;line-height:11px;color:#000;left:-254px;width:1000px;text-align:center;">85,60</span>
<span class="t" style="top:413px;font-size:11px;line-height:11px;color:#000;left:-172px;width:1000px;text-align:center;">48,10</span>
<span class="t" style="top:413px;font-size:11px;line-height:11px;color:#000;left:-90px;width:1000px;text-align:center;">2230,18</span>
<span class="t" style="top:410px;font-size:14px;line-height:14px;color:#000;letter-spacing:-0.31px;left:-3px;width:1000px;text-align:center;text-indent:-0.31px;">-1,21</span>
<span class="t" style="top:410px;font-size:14px;line-height:14px;color:#000;letter-spacing:-0.31px;left:94px;width:1000px;text-align:center;text-indent:-0.31px;">-0,39</span>
<span class="t" style="top:410px;font-size:14px;line-height:14px;color:#000;letter-spacing:-0.32px;left:193px;width:1000px;text-align:center;text-indent:-0.32px;">2,22</span>
<span class="t" style="top:410px;font-size:14px;line-height:14px;color:#000;letter-spacing:-0.32px;left:290px;width:1000px;text-align:center;text-indent:-0.32px;">0,30</span>
<span class="t" style="top:410px;font-size:14px;line-height:14px;color:#000;letter-spacing:-0.38px;right:352.38px;">3</span>
<div class="a " style="left:8px;top:426px;width:19px;height:16px;background:#D4D0C8;"></div>
<div class="a " style="left:8px;top:426px;width:19px;height:1px;background:#FFFFFF;"></div>
<div class="a " style="left:8px;top:426px;width:1px;height:16px;background:#FFFFFF;"></div>
<div class="a " style="left:9px;top:426px;width:1px;height:16px;background:#FFFFFF;"></div>
<div class="a " style="left:8px;top:442px;width:19px;height:1px;background:#808080;"></div>
<div class="a " style="left:28px;top:442px;width:99px;height:1px;background:#C0C0C0;"></div>
<div class="a " style="left:128px;top:442px;width:319px;height:1px;background:#000000;"></div>
<div class="a " style="left:449px;top:442px;width:482px;height:1px;background:#C0C0C0;"></div>
<div class="a " style="left:931px;top:442px;width:39px;height:1px;background:#C0C0C0;"></div>
<span class="t" style="top:427px;font-size:14px;line-height:14px;color:#000;letter-spacing:-0.38px;right:1256.38px;">16</span>
<span class="t" style="top:430px;font-size:11px;line-height:11px;color:#000;left:30px;">Егорьевский</span>
<span class="t" style="top:430px;font-size:11px;line-height:11px;color:#000;left:-332px;width:1000px;text-align:center;">409,48</span>
<span class="t" style="top:430px;font-size:11px;line-height:11px;color:#000;left:-254px;width:1000px;text-align:center;">80,27</span>
<span class="t" style="top:430px;font-size:11px;line-height:11px;color:#000;left:-172px;width:1000px;text-align:center;">20,13</span>
<span class="t" style="top:430px;font-size:11px;line-height:11px;color:#000;left:-90px;width:1000px;text-align:center;">973,48</span>
<span class="t" style="top:427px;font-size:14px;line-height:14px;color:#000;letter-spacing:-0.32px;left:-3px;width:1000px;text-align:center;text-indent:-0.32px;">0,51</span>
<span class="t" style="top:427px;font-size:14px;line-height:14px;color:#000;letter-spacing:-0.31px;left:94px;width:1000px;text-align:center;text-indent:-0.31px;">-0,59</span>
<span class="t" style="top:427px;font-size:14px;line-height:14px;color:#000;letter-spacing:-0.31px;left:193px;width:1000px;text-align:center;text-indent:-0.31px;">-0,54</span>
<span class="t" style="top:427px;font-size:14px;line-height:14px;color:#000;letter-spacing:-0.31px;left:290px;width:1000px;text-align:center;text-indent:-0.31px;">-0,92</span>
<span class="t" style="top:427px;font-size:14px;line-height:14px;color:#000;letter-spacing:-0.38px;right:352.38px;">2</span>
<div class="a " style="left:8px;top:443px;width:19px;height:16px;background:#D4D0C8;"></div>
<div class="a " style="left:8px;top:443px;width:19px;height:1px;background:#FFFFFF;"></div>
<div class="a " style="left:8px;top:443px;width:1px;height:16px;background:#FFFFFF;"></div>
<div class="a " style="left:9px;top:443px;width:1px;height:16px;background:#FFFFFF;"></div>
<div class="a " style="left:8px;top:459px;width:19px;height:1px;background:#808080;"></div>
<div class="a " style="left:28px;top:459px;width:99px;height:1px;background:#C0C0C0;"></div>
<div class="a " style="left:128px;top:459px;width:319px;height:1px;background:#000000;"></div>
<div class="a " style="left:449px;top:459px;width:482px;height:1px;background:#C0C0C0;"></div>
<div class="a " style="left:931px;top:459px;width:39px;height:1px;background:#C0C0C0;"></div>
<span class="t" style="top:444px;font-size:14px;line-height:14px;color:#000;letter-spacing:-0.38px;right:1256.38px;">17</span>
<span class="t" style="top:447px;font-size:11px;line-height:11px;color:#000;left:30px;">Завьяловский</span>
<span class="t" style="top:447px;font-size:11px;line-height:11px;color:#000;left:-332px;width:1000px;text-align:center;">404,83</span>
<span class="t" style="top:447px;font-size:11px;line-height:11px;color:#000;left:-254px;width:1000px;text-align:center;">93,68</span>
<span class="t" style="top:447px;font-size:11px;line-height:11px;color:#000;left:-172px;width:1000px;text-align:center;">22,17</span>
<span class="t" style="top:447px;font-size:11px;line-height:11px;color:#000;left:-90px;width:1000px;text-align:center;">4932,02</span>
<span class="t" style="top:444px;font-size:14px;line-height:14px;color:#000;letter-spacing:-0.32px;left:-3px;width:1000px;text-align:center;text-indent:-0.32px;">0,46</span>
<span class="t" style="top:444px;font-size:14px;line-height:14px;color:#000;letter-spacing:-0.31px;left:94px;width:1000px;text-align:center;text-indent:-0.31px;">-0,08</span>
<span class="t" style="top:444px;font-size:14px;line-height:14px;color:#000;letter-spacing:-0.31px;left:193px;width:1000px;text-align:center;text-indent:-0.31px;">-0,33</span>
<span class="t" style="top:444px;font-size:14px;line-height:14px;color:#000;letter-spacing:-0.32px;left:290px;width:1000px;text-align:center;text-indent:-0.32px;">2,90</span>
<span class="t" style="top:444px;font-size:14px;line-height:14px;color:#000;letter-spacing:-0.38px;right:352.38px;">1</span>
<div class="a " style="left:8px;top:460px;width:19px;height:16px;background:#D4D0C8;"></div>
<div class="a " style="left:8px;top:460px;width:19px;height:1px;background:#FFFFFF;"></div>
<div class="a " style="left:8px;top:460px;width:1px;height:16px;background:#FFFFFF;"></div>
<div class="a " style="left:9px;top:460px;width:1px;height:16px;background:#FFFFFF;"></div>
<div class="a " style="left:8px;top:476px;width:19px;height:1px;background:#808080;"></div>
<div class="a " style="left:28px;top:476px;width:99px;height:1px;background:#C0C0C0;"></div>
<div class="a " style="left:128px;top:476px;width:319px;height:1px;background:#000000;"></div>
<div class="a " style="left:449px;top:476px;width:482px;height:1px;background:#C0C0C0;"></div>
<div class="a " style="left:931px;top:476px;width:39px;height:1px;background:#C0C0C0;"></div>
<span class="t" style="top:461px;font-size:14px;line-height:14px;color:#000;letter-spacing:-0.38px;right:1256.38px;">18</span>
<span class="t" style="top:464px;font-size:11px;line-height:11px;color:#000;left:30px;">Залесовский</span>
<span class="t" style="top:464px;font-size:11px;line-height:11px;color:#000;left:-332px;width:1000px;text-align:center;">541,70</span>
<span class="t" style="top:464px;font-size:11px;line-height:11px;color:#000;left:-254px;width:1000px;text-align:center;">171,55</span>
<span class="t" style="top:464px;font-size:11px;line-height:11px;color:#000;left:-172px;width:1000px;text-align:center;">32,65</span>
<span class="t" style="top:464px;font-size:11px;line-height:11px;color:#000;left:-90px;width:1000px;text-align:center;">6210,33</span>
<span class="t" style="top:461px;font-size:14px;line-height:14px;color:#000;letter-spacing:-0.32px;left:-3px;width:1000px;text-align:center;text-indent:-0.32px;">1,82</span>
<span class="t" style="top:461px;font-size:14px;line-height:14px;color:#000;letter-spacing:-0.32px;left:94px;width:1000px;text-align:center;text-indent:-0.32px;">2,91</span>
<span class="t" style="top:461px;font-size:14px;line-height:14px;color:#000;letter-spacing:-0.32px;left:193px;width:1000px;text-align:center;text-indent:-0.32px;">0,72</span>
<span class="t" style="top:461px;font-size:14px;line-height:14px;color:#000;letter-spacing:-0.32px;left:290px;width:1000px;text-align:center;text-indent:-0.32px;">4,15</span>
<span class="t" style="top:461px;font-size:14px;line-height:14px;color:#000;letter-spacing:-0.38px;right:352.38px;">1</span>
<div class="a " style="left:8px;top:477px;width:19px;height:16px;background:#D4D0C8;"></div>
<div class="a " style="left:8px;top:477px;width:19px;height:1px;background:#FFFFFF;"></div>
<div class="a " style="left:8px;top:477px;width:1px;height:16px;background:#FFFFFF;"></div>
<div class="a " style="left:9px;top:477px;width:1px;height:16px;background:#FFFFFF;"></div>
<div class="a " style="left:8px;top:493px;width:19px;height:1px;background:#808080;"></div>
<div class="a " style="left:28px;top:493px;width:99px;height:1px;background:#C0C0C0;"></div>
<div class="a " style="left:128px;top:493px;width:319px;height:1px;background:#000000;"></div>
<div class="a " style="left:449px;top:493px;width:482px;height:1px;background:#C0C0C0;"></div>
<div class="a " style="left:931px;top:493px;width:39px;height:1px;background:#C0C0C0;"></div>
<span class="t" style="top:478px;font-size:14px;line-height:14px;color:#000;letter-spacing:-0.38px;right:1256.38px;">19</span>
<span class="t" style="top:481px;font-size:11px;line-height:11px;color:#000;left:30px;">Заринский</span>
<span class="t" style="top:481px;font-size:11px;line-height:11px;color:#000;left:-332px;width:1000px;text-align:center;">261,27</span>
<span class="t" style="top:481px;font-size:11px;line-height:11px;color:#000;left:-254px;width:1000px;text-align:center;">60,63</span>
<span class="t" style="top:481px;font-size:11px;line-height:11px;color:#000;left:-172px;width:1000px;text-align:center;">25,38</span>
<span class="t" style="top:481px;font-size:11px;line-height:11px;color:#000;left:-90px;width:1000px;text-align:center;">645,12</span>
<span class="t" style="top:478px;font-size:14px;line-height:14px;color:#000;letter-spacing:-0.31px;left:-3px;width:1000px;text-align:center;text-indent:-0.31px;">-0,99</span>
<span class="t" style="top:478px;font-size:14px;line-height:14px;color:#000;letter-spacing:-0.31px;left:94px;width:1000px;text-align:center;text-indent:-0.31px;">-1,33</span>
<span class="t" style="top:478px;font-size:14px;line-height:14px;color:#000;letter-spacing:-0.31px;left:193px;width:1000px;text-align:center;text-indent:-0.31px;">-0,01</span>
<span class="t" style="top:478px;font-size:14px;line-height:14px;color:#000;letter-spacing:-0.31px;left:290px;width:1000px;text-align:center;text-indent:-0.31px;">-1,24</span>
<span class="t" style="top:478px;font-size:14px;line-height:14px;color:#000;letter-spacing:-0.38px;right:352.38px;">3</span>
<div class="a " style="left:8px;top:494px;width:19px;height:16px;background:#D4D0C8;"></div>
<div class="a " style="left:8px;top:494px;width:19px;height:1px;background:#FFFFFF;"></div>
<div class="a " style="left:8px;top:494px;width:1px;height:16px;background:#FFFFFF;"></div>
<div class="a " style="left:9px;top:494px;width:1px;height:16px;background:#FFFFFF;"></div>
<div class="a " style="left:8px;top:510px;width:19px;height:1px;background:#808080;"></div>
<div class="a " style="left:28px;top:510px;width:99px;height:1px;background:#C0C0C0;"></div>
<div class="a " style="left:128px;top:510px;width:319px;height:1px;background:#000000;"></div>
<div class="a " style="left:449px;top:510px;width:482px;height:1px;background:#C0C0C0;"></div>
<div class="a " style="left:931px;top:510px;width:39px;height:1px;background:#C0C0C0;"></div>
<span class="t" style="top:495px;font-size:14px;line-height:14px;color:#000;letter-spacing:-0.38px;right:1256.38px;">20</span>
<span class="t" style="top:498px;font-size:11px;line-height:11px;color:#000;left:30px;">Змеиногорский</span>
<span class="t" style="top:498px;font-size:11px;line-height:11px;color:#000;left:-332px;width:1000px;text-align:center;">573,68</span>
<span class="t" style="top:498px;font-size:11px;line-height:11px;color:#000;left:-254px;width:1000px;text-align:center;">125,28</span>
<span class="t" style="top:498px;font-size:11px;line-height:11px;color:#000;left:-172px;width:1000px;text-align:center;">28,70</span>
<span class="t" style="top:498px;font-size:11px;line-height:11px;color:#000;left:-90px;width:1000px;text-align:center;">2340,22</span>
<span class="t" style="top:495px;font-size:14px;line-height:14px;color:#000;letter-spacing:-0.32px;left:-3px;width:1000px;text-align:center;text-indent:-0.32px;">2,14</span>
<span class="t" style="top:495px;font-size:14px;line-height:14px;color:#000;letter-spacing:-0.32px;left:94px;width:1000px;text-align:center;text-indent:-0.32px;">1,15</span>
<span class="t" style="top:495px;font-size:14px;line-height:14px;color:#000;letter-spacing:-0.32px;left:193px;width:1000px;text-align:center;text-indent:-0.32px;">0,32</span>
<span class="t" style="top:495px;font-size:14px;line-height:14px;color:#000;letter-spacing:-0.32px;left:290px;width:1000px;text-align:center;text-indent:-0.32px;">0,40</span>
<span class="t" style="top:495px;font-size:14px;line-height:14px;color:#000;letter-spacing:-0.38px;right:352.38px;">1</span>
<div class="a " style="left:8px;top:511px;width:19px;height:16px;background:#D4D0C8;"></div>
<div class="a " style="left:8px;top:511px;width:19px;height:1px;background:#FFFFFF;"></div>
<div class="a " style="left:8px;top:511px;width:1px;height:16px;background:#FFFFFF;"></div>
<div class="a " style="left:9px;top:511px;width:1px;height:16px;background:#FFFFFF;"></div>
<div class="a " style="left:8px;top:527px;width:19px;height:1px;background:#808080;"></div>
<div class="a " style="left:28px;top:527px;width:99px;height:1px;background:#C0C0C0;"></div>
<div class="a " style="left:128px;top:527px;width:319px;height:1px;background:#000000;"></div>
<div class="a " style="left:449px;top:527px;width:482px;height:1px;background:#C0C0C0;"></div>
<div class="a " style="left:931px;top:527px;width:39px;height:1px;background:#C0C0C0;"></div>
<span class="t" style="top:512px;font-size:14px;line-height:14px;color:#000;letter-spacing:-0.38px;right:1256.38px;">21</span>
<span class="t" style="top:515px;font-size:11px;line-height:11px;color:#000;left:30px;">Зональный</span>
<span class="t" style="top:515px;font-size:11px;line-height:11px;color:#000;left:-332px;width:1000px;text-align:center;">501,43</span>
<span class="t" style="top:515px;font-size:11px;line-height:11px;color:#000;left:-254px;width:1000px;text-align:center;">106,12</span>
<span class="t" style="top:515px;font-size:11px;line-height:11px;color:#000;left:-172px;width:1000px;text-align:center;">35,58</span>
<span class="t" style="top:515px;font-size:11px;line-height:11px;color:#000;left:-90px;width:1000px;text-align:center;">1350,17</span>
<span class="t" style="top:512px;font-size:14px;line-height:14px;color:#000;letter-spacing:-0.32px;left:-3px;width:1000px;text-align:center;text-indent:-0.32px;">1,43</span>
<span class="t" style="top:512px;font-size:14px;line-height:14px;color:#000;letter-spacing:-0.32px;left:94px;width:1000px;text-align:center;text-indent:-0.32px;">0,41</span>
<span class="t" style="top:512px;font-size:14px;line-height:14px;color:#000;letter-spacing:-0.32px;left:193px;width:1000px;text-align:center;text-indent:-0.32px;">1,02</span>
<span class="t" style="top:512px;font-size:14px;line-height:14px;color:#000;letter-spacing:-0.31px;left:290px;width:1000px;text-align:center;text-indent:-0.31px;">-0,55</span>
<span class="t" style="top:512px;font-size:14px;line-height:14px;color:#000;letter-spacing:-0.38px;right:352.38px;">2</span>
<div class="a " style="left:8px;top:528px;width:19px;height:16px;background:#D4D0C8;"></div>
<div class="a " style="left:8px;top:528px;width:19px;height:1px;background:#FFFFFF;"></div>
<div class="a " style="left:8px;top:528px;width:1px;height:16px;background:#FFFFFF;"></div>
<div class="a " style="left:9px;top:528px;width:1px;height:16px;background:#FFFFFF;"></div>
<div class="a " style="left:8px;top:544px;width:19px;height:1px;background:#808080;"></div>
<div class="a " style="left:28px;top:544px;width:99px;height:1px;background:#C0C0C0;"></div>
<div class="a " style="left:128px;top:544px;width:319px;height:1px;background:#000000;"></div>
<div class="a " style="left:449px;top:544px;width:482px;height:1px;background:#C0C0C0;"></div>
<div class="a " style="left:931px;top:544px;width:39px;height:1px;background:#C0C0C0;"></div>
<span class="t" style="top:529px;font-size:14px;line-height:14px;color:#000;letter-spacing:-0.38px;right:1256.38px;">22</span>
<span class="t" style="top:532px;font-size:11px;line-height:11px;color:#000;left:30px;">Калманский</span>
<span class="t" style="top:532px;font-size:11px;line-height:11px;color:#000;left:-332px;width:1000px;text-align:center;">515,27</span>
<span class="t" style="top:532px;font-size:11px;line-height:11px;color:#000;left:-254px;width:1000px;text-align:center;">102,43</span>
<span class="t" style="top:532px;font-size:11px;line-height:11px;color:#000;left:-172px;width:1000px;text-align:center;">31,95</span>
<span class="t" style="top:532px;font-size:11px;line-height:11px;color:#000;left:-90px;width:1000px;text-align:center;">4412,30</span>
<span class="t" style="top:529px;font-size:14px;line-height:14px;color:#000;letter-spacing:-0.32px;left:-3px;width:1000px;text-align:center;text-indent:-0.32px;">1,56</span>
<span class="t" style="top:529px;font-size:14px;line-height:14px;color:#000;letter-spacing:-0.32px;left:94px;width:1000px;text-align:center;text-indent:-0.32px;">0,27</span>
<span class="t" style="top:529px;font-size:14px;line-height:14px;color:#000;letter-spacing:-0.32px;left:193px;width:1000px;text-align:center;text-indent:-0.32px;">0,65</span>
<span class="t" style="top:529px;font-size:14px;line-height:14px;color:#000;letter-spacing:-0.32px;left:290px;width:1000px;text-align:center;text-indent:-0.32px;">2,40</span>
<span class="t" style="top:529px;font-size:14px;line-height:14px;color:#000;letter-spacing:-0.38px;right:352.38px;">1</span>
<div class="a " style="left:8px;top:545px;width:19px;height:16px;background:#D4D0C8;"></div>
<div class="a " style="left:8px;top:545px;width:19px;height:1px;background:#FFFFFF;"></div>
<div class="a " style="left:8px;top:545px;width:1px;height:16px;background:#FFFFFF;"></div>
<div class="a " style="left:9px;top:545px;width:1px;height:16px;background:#FFFFFF;"></div>
<div class="a " style="left:8px;top:561px;width:19px;height:1px;background:#808080;"></div>
<div class="a " style="left:28px;top:561px;width:99px;height:1px;background:#C0C0C0;"></div>
<div class="a " style="left:128px;top:561px;width:319px;height:1px;background:#000000;"></div>
<div class="a " style="left:449px;top:561px;width:482px;height:1px;background:#C0C0C0;"></div>
<div class="a " style="left:931px;top:561px;width:39px;height:1px;background:#C0C0C0;"></div>
<span class="t" style="top:546px;font-size:14px;line-height:14px;color:#000;letter-spacing:-0.38px;right:1256.38px;">23</span>
<span class="t" style="top:549px;font-size:11px;line-height:11px;color:#000;left:30px;">Каменский</span>
<span class="t" style="top:549px;font-size:11px;line-height:11px;color:#000;left:-332px;width:1000px;text-align:center;">339,68</span>
<span class="t" style="top:549px;font-size:11px;line-height:11px;color:#000;left:-254px;width:1000px;text-align:center;">96,38</span>
<span class="t" style="top:549px;font-size:11px;line-height:11px;color:#000;left:-172px;width:1000px;text-align:center;">33,32</span>
<span class="t" style="top:549px;font-size:11px;line-height:11px;color:#000;left:-90px;width:1000px;text-align:center;">2540,55</span>
<span class="t" style="top:546px;font-size:14px;line-height:14px;color:#000;letter-spacing:-0.31px;left:-3px;width:1000px;text-align:center;text-indent:-0.31px;">-0,19</span>
<span class="t" style="top:546px;font-size:14px;line-height:14px;color:#000;letter-spacing:-0.32px;left:94px;width:1000px;text-align:center;text-indent:-0.32px;">0,03</span>
<span class="t" style="top:546px;font-size:14px;line-height:14px;color:#000;letter-spacing:-0.32px;left:193px;width:1000px;text-align:center;text-indent:-0.32px;">0,79</span>
<span class="t" style="top:546px;font-size:14px;line-height:14px;color:#000;letter-spacing:-0.32px;left:290px;width:1000px;text-align:center;text-indent:-0.32px;">0,59</span>
<span class="t" style="top:546px;font-size:14px;line-height:14px;color:#000;letter-spacing:-0.38px;right:352.38px;">2</span>
<div class="a " style="left:8px;top:562px;width:19px;height:16px;background:#D4D0C8;"></div>
<div class="a " style="left:8px;top:562px;width:19px;height:1px;background:#FFFFFF;"></div>
<div class="a " style="left:8px;top:562px;width:1px;height:16px;background:#FFFFFF;"></div>
<div class="a " style="left:9px;top:562px;width:1px;height:16px;background:#FFFFFF;"></div>
<div class="a " style="left:8px;top:578px;width:19px;height:1px;background:#808080;"></div>
<div class="a " style="left:28px;top:578px;width:99px;height:1px;background:#C0C0C0;"></div>
<div class="a " style="left:128px;top:578px;width:319px;height:1px;background:#000000;"></div>
<div class="a " style="left:449px;top:578px;width:482px;height:1px;background:#C0C0C0;"></div>
<div class="a " style="left:931px;top:578px;width:39px;height:1px;background:#C0C0C0;"></div>
<span class="t" style="top:563px;font-size:14px;line-height:14px;color:#000;letter-spacing:-0.38px;right:1256.38px;">24</span>
<span class="t" style="top:566px;font-size:11px;line-height:11px;color:#000;left:30px;">Ключевский</span>
<span class="t" style="top:566px;font-size:11px;line-height:11px;color:#000;left:-332px;width:1000px;text-align:center;">198,87</span>
<span class="t" style="top:566px;font-size:11px;line-height:11px;color:#000;left:-254px;width:1000px;text-align:center;">69,95</span>
<span class="t" style="top:566px;font-size:11px;line-height:11px;color:#000;left:-172px;width:1000px;text-align:center;">15,46</span>
<span class="t" style="top:566px;font-size:11px;line-height:11px;color:#000;left:-90px;width:1000px;text-align:center;">1650,28</span>
<span class="t" style="top:563px;font-size:14px;line-height:14px;color:#000;letter-spacing:-0.31px;left:-3px;width:1000px;text-align:center;text-indent:-0.31px;">-1,59</span>
<span class="t" style="top:563px;font-size:14px;line-height:14px;color:#000;letter-spacing:-0.31px;left:94px;width:1000px;text-align:center;text-indent:-0.31px;">-0,98</span>
<span class="t" style="top:563px;font-size:14px;line-height:14px;color:#000;letter-spacing:-0.31px;left:193px;width:1000px;text-align:center;text-indent:-0.31px;">-1,00</span>
<span class="t" style="top:563px;font-size:14px;line-height:14px;color:#000;letter-spacing:-0.31px;left:290px;width:1000px;text-align:center;text-indent:-0.31px;">-0,26</span>
<span class="t" style="top:563px;font-size:14px;line-height:14px;color:#000;letter-spacing:-0.38px;right:352.38px;">3</span>
<div class="a " style="left:8px;top:579px;width:19px;height:16px;background:#D4D0C8;"></div>
<div class="a " style="left:8px;top:579px;width:19px;height:1px;background:#FFFFFF;"></div>
<div class="a " style="left:8px;top:579px;width:1px;height:16px;background:#FFFFFF;"></div>
<div class="a " style="left:9px;top:579px;width:1px;height:16px;background:#FFFFFF;"></div>
<div class="a " style="left:8px;top:595px;width:19px;height:1px;background:#808080;"></div>
<div class="a " style="left:28px;top:595px;width:99px;height:1px;background:#C0C0C0;"></div>
<div class="a " style="left:128px;top:595px;width:319px;height:1px;background:#000000;"></div>
<div class="a " style="left:449px;top:595px;width:482px;height:1px;background:#C0C0C0;"></div>
<div class="a " style="left:931px;top:595px;width:39px;height:1px;background:#C0C0C0;"></div>
<span class="t" style="top:580px;font-size:14px;line-height:14px;color:#000;letter-spacing:-0.38px;right:1256.38px;">25</span>
<span class="t" style="top:583px;font-size:11px;line-height:11px;color:#000;left:30px;">Косихинский</span>
<span class="t" style="top:583px;font-size:11px;line-height:11px;color:#000;left:-332px;width:1000px;text-align:center;">419,92</span>
<span class="t" style="top:583px;font-size:11px;line-height:11px;color:#000;left:-254px;width:1000px;text-align:center;">117,22</span>
<span class="t" style="top:583px;font-size:11px;line-height:11px;color:#000;left:-172px;width:1000px;text-align:center;">19,27</span>
<span class="t" style="top:583px;font-size:11px;line-height:11px;color:#000;left:-90px;width:1000px;text-align:center;">1380,40</span>
<span class="t" style="top:580px;font-size:14px;line-height:14px;color:#000;letter-spacing:-0.32px;left:-3px;width:1000px;text-align:center;text-indent:-0.32px;">0,61</span>
<span class="t" style="top:580px;font-size:14px;line-height:14px;color:#000;letter-spacing:-0.32px;left:94px;width:1000px;text-align:center;text-indent:-0.32px;">0,83</span>
<span class="t" style="top:580px;font-size:14px;line-height:14px;color:#000;letter-spacing:-0.31px;left:193px;width:1000px;text-align:center;text-indent:-0.31px;">-0,62</span>
<span class="t" style="top:580px;font-size:14px;line-height:14px;color:#000;letter-spacing:-0.31px;left:290px;width:1000px;text-align:center;text-indent:-0.31px;">-0,52</span>
<span class="t" style="top:580px;font-size:14px;line-height:14px;color:#000;letter-spacing:-0.38px;right:352.38px;">2</span>
<div class="a " style="left:8px;top:596px;width:19px;height:16px;background:#D4D0C8;"></div>
<div class="a " style="left:8px;top:596px;width:19px;height:1px;background:#FFFFFF;"></div>
<div class="a " style="left:8px;top:596px;width:1px;height:16px;background:#FFFFFF;"></div>
<div class="a " style="left:9px;top:596px;width:1px;height:16px;background:#FFFFFF;"></div>
<div class="a " style="left:8px;top:612px;width:19px;height:1px;background:#808080;"></div>
<div class="a " style="left:28px;top:612px;width:99px;height:1px;background:#C0C0C0;"></div>
<div class="a " style="left:128px;top:612px;width:319px;height:1px;background:#000000;"></div>
<div class="a " style="left:449px;top:612px;width:482px;height:1px;background:#C0C0C0;"></div>
<div class="a " style="left:931px;top:612px;width:39px;height:1px;background:#C0C0C0;"></div>
<span class="t" style="top:597px;font-size:14px;line-height:14px;color:#000;letter-spacing:-0.38px;right:1256.38px;">26</span>
<span class="t" style="top:600px;font-size:11px;line-height:11px;color:#000;left:30px;">Красногорский</span>
<span class="t" style="top:600px;font-size:11px;line-height:11px;color:#000;left:-332px;width:1000px;text-align:center;">416,25</span>
<span class="t" style="top:600px;font-size:11px;line-height:11px;color:#000;left:-254px;width:1000px;text-align:center;">94,03</span>
<span class="t" style="top:600px;font-size:11px;line-height:11px;color:#000;left:-172px;width:1000px;text-align:center;">22,75</span>
<span class="t" style="top:600px;font-size:11px;line-height:11px;color:#000;left:-90px;width:1000px;text-align:center;">1420,87</span>
<span class="t" style="top:597px;font-size:14px;line-height:14px;color:#000;letter-spacing:-0.32px;left:-3px;width:1000px;text-align:center;text-indent:-0.32px;">0,58</span>
<span class="t" style="top:597px;font-size:14px;line-height:14px;color:#000;letter-spacing:-0.31px;left:94px;width:1000px;text-align:center;text-indent:-0.31px;">-0,06</span>
<span class="t" style="top:597px;font-size:14px;line-height:14px;color:#000;letter-spacing:-0.31px;left:193px;width:1000px;text-align:center;text-indent:-0.31px;">-0,27</span>
<span class="t" style="top:597px;font-size:14px;line-height:14px;color:#000;letter-spacing:-0.31px;left:290px;width:1000px;text-align:center;text-indent:-0.31px;">-0,48</span>
<span class="t" style="top:597px;font-size:14px;line-height:14px;color:#000;letter-spacing:-0.38px;right:352.38px;">2</span>
<div class="a " style="left:8px;top:613px;width:19px;height:16px;background:#D4D0C8;"></div>
<div class="a " style="left:8px;top:613px;width:19px;height:1px;background:#FFFFFF;"></div>
<div class="a " style="left:8px;top:613px;width:1px;height:16px;background:#FFFFFF;"></div>
<div class="a " style="left:9px;top:613px;width:1px;height:16px;background:#FFFFFF;"></div>
<div class="a " style="left:8px;top:629px;width:19px;height:1px;background:#808080;"></div>
<div class="a " style="left:28px;top:629px;width:99px;height:1px;background:#C0C0C0;"></div>
<div class="a " style="left:128px;top:629px;width:319px;height:1px;background:#000000;"></div>
<div class="a " style="left:449px;top:629px;width:482px;height:1px;background:#C0C0C0;"></div>
<div class="a " style="left:931px;top:629px;width:39px;height:1px;background:#C0C0C0;"></div>
<span class="t" style="top:614px;font-size:14px;line-height:14px;color:#000;letter-spacing:-0.38px;right:1256.38px;">27</span>
<span class="t" style="top:617px;font-size:11px;line-height:11px;color:#000;left:30px;">Краснощековский</span>
<span class="t" style="top:617px;font-size:11px;line-height:11px;color:#000;left:-332px;width:1000px;text-align:center;">407,67</span>
<span class="t" style="top:617px;font-size:11px;line-height:11px;color:#000;left:-254px;width:1000px;text-align:center;">73,13</span>
<span class="t" style="top:617px;font-size:11px;line-height:11px;color:#000;left:-172px;width:1000px;text-align:center;">19,30</span>
<span class="t" style="top:617px;font-size:11px;line-height:11px;color:#000;left:-90px;width:1000px;text-align:center;">1310,65</span>
<span class="t" style="top:614px;font-size:14px;line-height:14px;color:#000;letter-spacing:-0.32px;left:-3px;width:1000px;text-align:center;text-indent:-0.32px;">0,49</span>
<span class="t" style="top:614px;font-size:14px;line-height:14px;color:#000;letter-spacing:-0.31px;left:94px;width:1000px;text-align:center;text-indent:-0.31px;">-0,86</span>
<span class="t" style="top:614px;font-size:14px;line-height:14px;color:#000;letter-spacing:-0.31px;left:193px;width:1000px;text-align:center;text-indent:-0.31px;">-0,62</span>
<span class="t" style="top:614px;font-size:14px;line-height:14px;color:#000;letter-spacing:-0.31px;left:290px;width:1000px;text-align:center;text-indent:-0.31px;">-0,59</span>
<span class="t" style="top:614px;font-size:14px;line-height:14px;color:#000;letter-spacing:-0.38px;right:352.38px;">2</span>
<div class="a " style="left:8px;top:630px;width:19px;height:16px;background:#D4D0C8;"></div>
<div class="a " style="left:8px;top:630px;width:19px;height:1px;background:#FFFFFF;"></div>
<div class="a " style="left:8px;top:630px;width:1px;height:16px;background:#FFFFFF;"></div>
<div class="a " style="left:9px;top:630px;width:1px;height:16px;background:#FFFFFF;"></div>
<div class="a " style="left:8px;top:646px;width:19px;height:1px;background:#808080;"></div>
<div class="a " style="left:28px;top:646px;width:99px;height:1px;background:#C0C0C0;"></div>
<div class="a " style="left:128px;top:646px;width:319px;height:1px;background:#000000;"></div>
<div class="a " style="left:449px;top:646px;width:482px;height:1px;background:#C0C0C0;"></div>
<div class="a " style="left:931px;top:646px;width:39px;height:1px;background:#C0C0C0;"></div>
<span class="t" style="top:631px;font-size:14px;line-height:14px;color:#000;letter-spacing:-0.38px;right:1256.38px;">28</span>
<span class="t" style="top:634px;font-size:11px;line-height:11px;color:#000;left:30px;">Крутихинский</span>
<span class="t" style="top:634px;font-size:11px;line-height:11px;color:#000;left:-332px;width:1000px;text-align:center;">287,23</span>
<span class="t" style="top:634px;font-size:11px;line-height:11px;color:#000;left:-254px;width:1000px;text-align:center;">83,40</span>
<span class="t" style="top:634px;font-size:11px;line-height:11px;color:#000;left:-172px;width:1000px;text-align:center;">14,03</span>
<span class="t" style="top:634px;font-size:11px;line-height:11px;color:#000;left:-90px;width:1000px;text-align:center;">1075,92</span>
<span class="t" style="top:631px;font-size:14px;line-height:14px;color:#000;letter-spacing:-0.31px;left:-3px;width:1000px;text-align:center;text-indent:-0.31px;">-0,71</span>
<span class="t" style="top:631px;font-size:14px;line-height:14px;color:#000;letter-spacing:-0.31px;left:94px;width:1000px;text-align:center;text-indent:-0.31px;">-0,47</span>
<span class="t" style="top:631px;font-size:14px;line-height:14px;color:#000;letter-spacing:-0.31px;left:193px;width:1000px;text-align:center;text-indent:-0.31px;">-1,15</span>
<span class="t" style="top:631px;font-size:14px;line-height:14px;color:#000;letter-spacing:-0.31px;left:290px;width:1000px;text-align:center;text-indent:-0.31px;">-0,82</span>
<span class="t" style="top:631px;font-size:14px;line-height:14px;color:#000;letter-spacing:-0.38px;right:352.38px;">3</span>
<div class="a " style="left:8px;top:647px;width:19px;height:16px;background:#D4D0C8;"></div>
<div class="a " style="left:8px;top:647px;width:19px;height:1px;background:#FFFFFF;"></div>
<div class="a " style="left:8px;top:647px;width:1px;height:16px;background:#FFFFFF;"></div>
<div class="a " style="left:9px;top:647px;width:1px;height:16px;background:#FFFFFF;"></div>
<div class="a " style="left:8px;top:663px;width:19px;height:1px;background:#808080;"></div>
<div class="a " style="left:28px;top:663px;width:99px;height:1px;background:#C0C0C0;"></div>
<div class="a " style="left:128px;top:663px;width:319px;height:1px;background:#000000;"></div>
<div class="a " style="left:449px;top:663px;width:482px;height:1px;background:#C0C0C0;"></div>
<div class="a " style="left:931px;top:663px;width:39px;height:1px;background:#C0C0C0;"></div>
<span class="t" style="top:648px;font-size:14px;line-height:14px;color:#000;letter-spacing:-0.38px;right:1256.38px;">29</span>
<span class="t" style="top:651px;font-size:11px;line-height:11px;color:#000;left:30px;">Кулундинский</span>
<span class="t" style="top:651px;font-size:11px;line-height:11px;color:#000;left:-332px;width:1000px;text-align:center;">266,50</span>
<span class="t" style="top:651px;font-size:11px;line-height:11px;color:#000;left:-254px;width:1000px;text-align:center;">89,52</span>
<span class="t" style="top:651px;font-size:11px;line-height:11px;color:#000;left:-172px;width:1000px;text-align:center;">26,53</span>
<span class="t" style="top:651px;font-size:11px;line-height:11px;color:#000;left:-90px;width:1000px;text-align:center;">1894,65</span>
<span class="t" style="top:648px;font-size:14px;line-height:14px;color:#000;letter-spacing:-0.31px;left:-3px;width:1000px;text-align:center;text-indent:-0.31px;">-0,90</span>
<span class="t" style="top:648px;font-size:14px;line-height:14px;color:#000;letter-spacing:-0.31px;left:94px;width:1000px;text-align:center;text-indent:-0.31px;">-0,22</span>
<span class="t" style="top:648px;font-size:14px;line-height:14px;color:#000;letter-spacing:-0.32px;left:193px;width:1000px;text-align:center;text-indent:-0.32px;">0,09</span>
<span class="t" style="top:648px;font-size:14px;line-height:14px;color:#000;letter-spacing:-0.31px;left:290px;width:1000px;text-align:center;text-indent:-0.31px;">-0,03</span>
<span class="t" style="top:648px;font-size:14px;line-height:14px;color:#000;letter-spacing:-0.38px;right:352.38px;">3</span>
<div class="a " style="left:8px;top:664px;width:19px;height:4px;background:#D4D0C8;"></div>
<div class="a " style="left:8px;top:664px;width:19px;height:1px;background:#FFFFFF;"></div>
<div class="a " style="left:8px;top:664px;width:1px;height:4px;background:#FFFFFF;"></div>
<div class="a " style="left:9px;top:664px;width:1px;height:4px;background:#FFFFFF;"></div>
<span class="t" style="top:665px;font-size:14px;line-height:14px;color:#000;letter-spacing:-0.38px;right:1255.38px;clip-path:inset(-5px 0 11px 0);">30</span>
<span class="t" style="top:668px;font-size:11px;line-height:11px;color:#000;left:30px;clip-path:inset(-5px 0 11px 0);">Курьинский</span>
<div class="a " style="left:127px;top:171px;width:1px;height:497px;background:#000000;"></div>
<div class="a " style="left:209px;top:171px;width:1px;height:497px;background:#C0C0C0;"></div>
<div class="a " style="left:282px;top:171px;width:1px;height:497px;background:#C0C0C0;"></div>
<div class="a " style="left:372px;top:171px;width:1px;height:497px;background:#000000;"></div>
<div class="a " style="left:447px;top:171px;width:2px;height:497px;background:#000000;"></div>
<div class="a " style="left:546px;top:171px;width:1px;height:497px;background:#C0C0C0;"></div>
<div class="a " style="left:640px;top:171px;width:1px;height:497px;background:#C0C0C0;"></div>
<div class="a " style="left:745px;top:171px;width:1px;height:497px;background:#C0C0C0;"></div>
<div class="a " style="left:835px;top:171px;width:1px;height:497px;background:#C0C0C0;"></div>
<div class="a " style="left:208px;top:170px;width:77px;height:19px;border:2px solid #000;"></div>
<div class="a " style="left:282px;top:186px;width:5px;height:5px;background:#FFFFFF;"></div>
<div class="a " style="left:283px;top:187px;width:3px;height:3px;background:#000000;"></div>
<div class="a " style="left:970px;top:119px;width:16px;height:549px;background:repeating-conic-gradient(#fff 0% 25%, #D4D0C8 0% 50%) 0 0/2px 2px;"></div>
<div class="a " style="left:970px;top:119px;width:16px;height:7px;background:#D4D0C8;"></div>
<div class="a " style="left:970px;top:119px;width:15px;height:1px;background:#FFFFFF;"></div>
<div class="a " style="left:970px;top:119px;width:1px;height:6px;background:#FFFFFF;"></div>
<div class="a " style="left:970px;top:125px;width:16px;height:1px;background:#000000;"></div>
<div class="a " style="left:985px;top:119px;width:1px;height:7px;background:#000000;"></div>
<div class="a " style="left:970px;top:126px;width:16px;height:16px;background:#D4D0C8;box-shadow:inset -1px -1px 0 #404040,inset 1px 1px 0 #D4D0C8,inset -2px -2px 0 #808080,inset 2px 2px 0 #FFFFFF;"></div>
<div class="a " style="left:970px;top:142px;width:16px;height:235px;background:#D4D0C8;box-shadow:inset -1px -1px 0 #404040,inset 1px 1px 0 #D4D0C8,inset -2px -2px 0 #808080,inset 2px 2px 0 #FFFFFF;"></div>
<div class="a " style="left:970px;top:652px;width:16px;height:16px;background:#D4D0C8;box-shadow:inset -1px -1px 0 #404040,inset 1px 1px 0 #D4D0C8,inset -2px -2px 0 #808080,inset 2px 2px 0 #FFFFFF;"></div>
<div class="a " style="left:8px;top:668px;width:962px;height:16px;background:repeating-conic-gradient(#fff 0% 25%, #D4D0C8 0% 50%) 0 0/2px 2px;"></div>
<div class="a " style="left:8px;top:668px;width:6px;height:15px;background:#D4D0C8;"></div>
<div class="a " style="left:8px;top:668px;width:1px;height:15px;background:#FFFFFF;"></div>
<div class="a " style="left:14px;top:668px;width:1px;height:16px;background:#000000;"></div>
<div class="a " style="left:7px;top:683px;width:8px;height:1px;background:#000000;"></div>
<div class="a " style="left:15px;top:668px;width:16px;height:16px;background:#D4D0C8;box-shadow:inset -1px -1px 0 #404040,inset 1px 1px 0 #D4D0C8,inset -2px -2px 0 #808080,inset 2px 2px 0 #FFFFFF;"></div>
<div class="a " style="left:954px;top:668px;width:16px;height:16px;background:#D4D0C8;box-shadow:inset -1px -1px 0 #404040,inset 1px 1px 0 #D4D0C8,inset -2px -2px 0 #808080,inset 2px 2px 0 #FFFFFF;"></div>
<div class="a " style="left:970px;top:668px;width:17px;height:17px;background:#D4D0C8;"></div>
<div class="a " style="left:402px;top:346px;width:477px;height:304px;background:#D4D0C8;box-shadow:inset -1px -1px 0 #404040,inset 1px 1px 0 #D4D0C8,inset -2px -2px 0 #808080,inset 2px 2px 0 #FFFFFF;"></div>
<div class="a " style="left:405px;top:349px;width:471px;height:18px;background:linear-gradient(to right,#808080,#C0C0C0);"></div>
<div class="a " style="left:407px;top:350px;width:16px;height:16px;background:#FFFFFF;"></div>
<span class="t" style="top:353px;font-size:11px;line-height:11px;color:#D4D0C8;font-weight:bold;letter-spacing:0.35px;left:425px;">Кластерный анализ: Кластеризация К-усреднений: Desease</span>
<div class="a " style="left:826px;top:351px;width:16px;height:14px;background:#D4D0C8;box-shadow:inset -1px -1px 0 #404040,inset 1px 1px 0 #FFFFFF,inset -2px -2px 0 #808080,inset 2px 2px 0 #D4D0C8;"></div>
<div class="a " style="left:842px;top:351px;width:16px;height:14px;background:#D4D0C8;box-shadow:inset -1px -1px 0 #404040,inset 1px 1px 0 #FFFFFF,inset -2px -2px 0 #808080,inset 2px 2px 0 #D4D0C8;"></div>
<div class="a " style="left:858px;top:351px;width:16px;height:14px;background:#D4D0C8;box-shadow:inset -1px -1px 0 #404040,inset 1px 1px 0 #FFFFFF,inset -2px -2px 0 #808080,inset 2px 2px 0 #D4D0C8;"></div>
<div class="a " style="left:411px;top:402px;width:360px;height:239px;background:#D4D0C8;box-shadow:inset -1px -1px 0 #404040,inset 1px 1px 0 #FFFFFF,inset -2px -2px 0 #808080,inset 2px 2px 0 #D4D0C8;"></div>
<div class="a " style="left:413px;top:381px;width:58px;height:23px;background:#D4D0C8;"></div>
<div class="a " style="left:413px;top:383px;width:1px;height:20px;background:#FFFFFF;"></div>
<div class="a " style="left:415px;top:381px;width:56px;height:1px;background:#FFFFFF;"></div>
<div class="a " style="left:414px;top:382px;width:1px;height:1px;background:#FFFFFF;"></div>
<span class="t" style="top:384px;font-size:12px;line-height:12px;color:#000;letter-spacing:-0.59px;left:419px;">Быстрый</span>
<div class="a " style="left:421px;top:412px;width:50px;height:23px;background:#D4D0C8;box-shadow:inset -1px -1px 0 #404040,inset 1px 1px 0 #FFFFFF,inset -2px -2px 0 #808080,inset 2px 2px 0 #D4D0C8;"></div>
<span class="t" style="top:418px;font-size:12px;line-height:12px;color:#000;text-decoration:underline;left:460px;">V</span>
<span class="t" style="top:446px;font-size:12px;line-height:12px;color:#000;letter-spacing:-0.43px;left:426px;">Cluster:</span>
<span class="t" style="top:472px;font-size:12px;line-height:12px;color:#000;letter-spacing:-0.54px;left:426px;">Количество</span>
<span class="t" style="top:498px;font-size:12px;line-height:12px;color:#000;letter-spacing:-0.54px;left:426px;">Число итераций</span>
<div class="a " style="left:422px;top:529px;width:279px;height:72px;border:1px solid #fff;"></div>
<div class="a " style="left:421px;top:528px;width:279px;height:72px;border:1px solid #808080;"></div>
<div class="a " style="left:428px;top:528px;width:43px;height:2px;background:#D4D0C8;"></div>
<span class="t" style="top:522px;font-size:12px;line-height:12px;color:#000;letter-spacing:-0.59px;left:430px;">Начальные</span>
<svg class="a" style="left:430px;top:540px" width="12" height="12" viewBox="0 0 12 12"><circle cx="6" cy="6" r="5.5" fill="#fff"/><path d="M1.2 9.2 A5.5 5.5 0 0 1 9.8 1.5" fill="none" stroke="#808080" stroke-width="1"/><path d="M2.2 8.6 A4.5 4.5 0 0 1 9 2.4" fill="none" stroke="#404040" stroke-width="1"/><path d="M1.8 9.8 A5.5 5.5 0 0 0 10.2 2.2" fill="none" stroke="#fff" stroke-width="1"/><path d="M2.6 9 A4.5 4.5 0 0 0 9.4 3" fill="none" stroke="#D4D0C8" stroke-width="1"/></svg>
<svg class="a" style="left:430px;top:560px" width="12" height="12" viewBox="0 0 12 12"><circle cx="6" cy="6" r="5.5" fill="#fff"/><path d="M1.2 9.2 A5.5 5.5 0 0 1 9.8 1.5" fill="none" stroke="#808080" stroke-width="1"/><path d="M2.2 8.6 A4.5 4.5 0 0 1 9 2.4" fill="none" stroke="#404040" stroke-width="1"/><path d="M1.8 9.8 A5.5 5.5 0 0 0 10.2 2.2" fill="none" stroke="#fff" stroke-width="1"/><path d="M2.6 9 A4.5 4.5 0 0 0 9.4 3" fill="none" stroke="#D4D0C8" stroke-width="1"/><circle cx="6" cy="6" r="2" fill="#000"/></svg>
<svg class="a" style="left:430px;top:579px" width="12" height="12" viewBox="0 0 12 12"><circle cx="6" cy="6" r="5.5" fill="#fff"/><path d="M1.2 9.2 A5.5 5.5 0 0 1 9.8 1.5" fill="none" stroke="#808080" stroke-width="1"/><path d="M2.2 8.6 A4.5 4.5 0 0 1 9 2.4" fill="none" stroke="#404040" stroke-width="1"/><path d="M1.8 9.8 A5.5 5.5 0 0 0 10.2 2.2" fill="none" stroke="#fff" stroke-width="1"/><path d="M2.6 9 A4.5 4.5 0 0 0 9.4 3" fill="none" stroke="#D4D0C8" stroke-width="1"/></svg>
<span class="t" style="top:541px;font-size:12px;line-height:12px;color:#000;letter-spacing:-0.62px;left:447px;">Выбор</span>
<span class="t" style="top:561px;font-size:12px;line-height:12px;color:#000;letter-spacing:-0.54px;left:447px;">Отсортировать</span>
<span class="t" style="top:580px;font-size:12px;line-height:12px;color:#000;letter-spacing:-0.58px;left:447px;">Выбрать</span>
<div class="a " style="left:421px;top:608px;width:13px;height:13px;background:#FFFFFF;box-shadow:inset -1px -1px 0 #FFFFFF,inset 1px 1px 0 #808080,inset -2px -2px 0 #D4D0C8,inset 2px 2px 0 #404040;"></div>
<span class="t" style="top:609px;font-size:12px;line-height:12px;color:#000;letter-spacing:-0.54px;left:439px;">Пакетная</span>
<div class="a " style="left:795px;top:379px;width:75px;height:23px;background:#D4D0C8;box-shadow:inset -1px -1px 0 #404040,inset 1px 1px 0 #FFFFFF,inset -2px -2px 0 #808080,inset 2px 2px 0 #D4D0C8;"></div>
<span class="t" style="top:385px;font-size:12px;line-height:12px;color:#000;letter-spacing:-0.42px;left:335px;width:1000px;text-align:center;text-indent:-0.42px;">OK</span>
<div class="a " style="left:795px;top:409px;width:75px;height:23px;background:#D4D0C8;box-shadow:inset -1px -1px 0 #404040,inset 1px 1px 0 #FFFFFF,inset -2px -2px 0 #808080,inset 2px 2px 0 #D4D0C8;"></div>
<span class="t" style="top:414px;font-size:12px;line-height:12px;color:#000;letter-spacing:-0.6px;right:437.60px;">Отмена</span>
<div class="a " style="left:795px;top:443px;width:75px;height:23px;background:#D4D0C8;box-shadow:inset -1px -1px 0 #404040,inset 1px 1px 0 #FFFFFF,inset -2px -2px 0 #808080,inset 2px 2px 0 #D4D0C8;"></div>
<span class="t" style="top:448px;font-size:12px;line-height:12px;color:#000;letter-spacing:-0.57px;right:425.57px;">Параметрь</span>
<svg class="a" style="left:857px;top:452px" width="7" height="4" viewBox="0 0 7 4" shape-rendering="crispEdges"><path d="M0 0h7v1h-7zM1 1h5v1h-5zM2 2h3v1h-3zM3 3h1v1h-1z" fill="#000"/></svg>
<div class="a " style="left:780px;top:535px;width:41px;height:23px;background:#D4D0C8;box-shadow:inset -1px -1px 0 #404040,inset 1px 1px 0 #FFFFFF,inset -2px -2px 0 #808080,inset 2px 2px 0 #D4D0C8;"></div>
<div class="a " style="left:827px;top:535px;width:43px;height:23px;background:#D4D0C8;box-shadow:inset -1px -1px 0 #404040,inset 1px 1px 0 #FFFFFF,inset -2px -2px 0 #808080,inset 2px 2px 0 #D4D0C8;"></div>
<span class="t" style="top:540px;font-size:12px;line-height:12px;color:#000;text-decoration:underline;left:856px;">w</span>
<div class="a " style="left:778px;top:573px;width:92px;height:69px;border:1px solid #fff;"></div>
<div class="a " style="left:777px;top:572px;width:92px;height:69px;border:1px solid #808080;"></div>
<div class="a " style="left:784px;top:572px;width:75px;height:2px;background:#D4D0C8;"></div>
<span class="t" style="top:566px;font-size:12px;line-height:12px;color:#000;letter-spacing:-0.58px;right:424.58px;">Удаление MD</span>
<span class="t" style="top:588px;font-size:12px;line-height:12px;color:#000;letter-spacing:-0.52px;right:424.52px;">По случак</span>
<span class="t" style="top:609px;font-size:12px;line-height:12px;color:#000;letter-spacing:-0.55px;right:421.55px;">Подстанов</span>
<span class="t" style="top:622px;font-size:12px;line-height:12px;color:#000;letter-spacing:-0.51px;left:803px;">ка</span>
<div class="a " style="left:465px;top:370px;width:350px;height:256px;background:#D4D0C8;box-shadow:inset -1px -1px 0 #404040,inset 1px 1px 0 #D4D0C8,inset -2px -2px 0 #808080,inset 2px 2px 0 #FFFFFF;"></div>
<div class="a " style="left:468px;top:373px;width:344px;height:18px;background:linear-gradient(to right,#0A246A,#A6CAF0);"></div>
<span class="t" style="top:377px;font-size:11px;line-height:11px;color:#FFFFFF;font-weight:bold;letter-spacing:0.41px;left:469px;">Select variables for the analysis</span>
<div class="a " style="left:776px;top:375px;width:16px;height:14px;background:#D4D0C8;box-shadow:inset -1px -1px 0 #404040,inset 1px 1px 0 #FFFFFF,inset -2px -2px 0 #808080,inset 2px 2px 0 #D4D0C8;"></div>
<div class="a " style="left:794px;top:375px;width:16px;height:14px;background:#D4D0C8;box-shadow:inset -1px -1px 0 #404040,inset 1px 1px 0 #FFFFFF,inset -2px -2px 0 #808080,inset 2px 2px 0 #D4D0C8;"></div>
<div class="a " style="left:479px;top:403px;width:238px;height:161px;background:#FFFFFF;box-shadow:inset -1px -1px 0 #FFFFFF,inset 1px 1px 0 #808080,inset -2px -2px 0 #D4D0C8,inset 2px 2px 0 #404040;"></div>
<div class="a " style="left:481px;top:470px;width:113px;height:52px;background:#0A246A;"></div>
<span class="t" style="top:406px;font-size:12px;line-height:12px;color:#000000;letter-spacing:-0.95px;left:481px;">1-REGIONS</span>
<span class="t" style="top:419px;font-size:12px;line-height:12px;color:#000000;letter-spacing:-0.85px;left:481px;">2-DISPANCER</span>
<span class="t" style="top:432px;font-size:12px;line-height:12px;color:#000000;letter-spacing:-0.79px;left:481px;">3-FIST LIFE</span>
<span class="t" style="top:445px;font-size:12px;line-height:12px;color:#000000;letter-spacing:-0.62px;left:481px;">4-DEATH RATE</span>
<span class="t" style="top:458px;font-size:12px;line-height:12px;color:#000000;letter-spacing:-1.02px;left:481px;">5-ALCOGOL</span>
<span class="t" style="top:471px;font-size:12px;line-height:12px;color:#FFFFFF;letter-spacing:-0.81px;left:481px;">6-DISPANCER(S)</span>
<span class="t" style="top:484px;font-size:12px;line-height:12px;color:#FFFFFF;letter-spacing:-0.76px;left:481px;">7-FIST LIFE(S)</span>
<span class="t" style="top:497px;font-size:12px;line-height:12px;color:#FFFFFF;letter-spacing:-0.56px;left:481px;">8-DEATH RATE(S)</span>
<span class="t" style="top:510px;font-size:12px;line-height:12px;color:#FFFFFF;letter-spacing:-1.02px;left:481px;">9-ALCOGOL(S)</span>
<span class="t" style="top:523px;font-size:12px;line-height:12px;color:#000000;letter-spacing:-0.92px;left:481px;">10-CLASTER</span>
<span class="t" style="top:572px;font-size:12px;line-height:12px;color:#000;letter-spacing:-0.67px;left:479px;">Выбор переменных:</span>
<div class="a " style="left:479px;top:589px;width:239px;height:23px;background:#FFFFFF;box-shadow:inset -1px -1px 0 #FFFFFF,inset 1px 1px 0 #808080,inset -2px -2px 0 #D4D0C8,inset 2px 2px 0 #404040;"></div>
<span class="t" style="top:593px;font-size:12px;line-height:12px;color:#0000FF;letter-spacing:-0.48px;left:482px;">6-9</span>
<div class="a " style="left:726px;top:403px;width:75px;height:23px;background:#000000;"></div>
<div class="a " style="left:727px;top:404px;width:73px;height:21px;background:#D4D0C8;box-shadow:inset -1px -1px 0 #404040,inset 1px 1px 0 #FFFFFF,inset -2px -2px 0 #808080,inset 2px 2px 0 #D4D0C8;"></div>
<span class="t" style="top:408px;font-size:12px;line-height:12px;color:#000;letter-spacing:-0.42px;left:264px;width:1000px;text-align:center;text-indent:-0.42px;">OK</span>
<div class="a " style="left:726px;top:433px;width:75px;height:23px;background:#D4D0C8;box-shadow:inset -1px -1px 0 #404040,inset 1px 1px 0 #FFFFFF,inset -2px -2px 0 #808080,inset 2px 2px 0 #D4D0C8;"></div>
<span class="t" style="top:438px;font-size:12px;line-height:12px;color:#000;letter-spacing:-0.6px;left:264px;width:1000px;text-align:center;text-indent:-0.6px;">Отмена</span>
<div class="a " style="left:726px;top:530px;width:75px;height:23px;background:#D4D0C8;box-shadow:inset -1px -1px 0 #404040,inset 1px 1px 0 #FFFFFF,inset -2px -2px 0 #808080,inset 2px 2px 0 #D4D0C8;"></div>
<span class="t" style="top:535px;font-size:12px;line-height:12px;color:#000;letter-spacing:-0.53px;left:264px;width:1000px;text-align:center;text-indent:-0.53px;">Выбор всего</span>
<div class="a " style="left:726px;top:559px;width:75px;height:23px;background:#D4D0C8;box-shadow:inset -1px -1px 0 #404040,inset 1px 1px 0 #FFFFFF,inset -2px -2px 0 #808080,inset 2px 2px 0 #D4D0C8;"></div>
<span class="t" style="top:564px;font-size:12px;line-height:12px;color:#000;letter-spacing:-0.54px;left:264px;width:1000px;text-align:center;text-indent:-0.54px;">Spread</span>
<div class="a " style="left:726px;top:589px;width:75px;height:23px;background:#D4D0C8;box-shadow:inset -1px -1px 0 #404040,inset 1px 1px 0 #FFFFFF,inset -2px -2px 0 #808080,inset 2px 2px 0 #D4D0C8;"></div>
<span class="t" style="top:594px;font-size:12px;line-height:12px;color:#000;letter-spacing:-0.64px;left:264px;width:1000px;text-align:center;text-indent:-0.64px;">Zoom</span>
<div class="a " style="left:2px;top:954px;width:22px;height:22px;background:#D4D0C8;box-shadow:inset -1px -1px 0 #404040,inset 1px 1px 0 #FFFFFF,inset -2px -2px 0 #808080,inset 2px 2px 0 #D4D0C8;"></div>
<div class="a " style="left:28px;top:954px;width:160px;height:22px;background:#D4D0C8;box-shadow:inset -1px -1px 0 #FFFFFF,inset 1px 1px 0 #808080,inset -2px -2px 0 #D4D0C8,inset 2px 2px 0 #404040;"></div>
<div class="a " style="left:32px;top:957px;width:17px;height:17px;background:#FFFFFF;"></div>
<span class="t" style="top:961px;font-size:11px;line-height:11px;color:#000;font-weight:bold;letter-spacing:0.55px;left:51px;">Кластерный анализ:...</span>
<div class="a " style="left:0px;top:976px;width:1280px;height:1px;background:#808080;"></div>
<div class="a " style="left:0px;top:977px;width:1280px;height:1px;background:#FFFFFF;"></div>
<span class="t" style="top:983px;font-size:11px;line-height:11px;color:#000;left:3px;">Ready</span>
<div class="a " style="left:879px;top:980px;width:59px;height:16px;box-shadow:inset -1px -1px 0 #FFFFFF,inset 1px 1px 0 #808080;"></div>
<div class="a " style="left:940px;top:980px;width:110px;height:16px;box-shadow:inset -1px -1px 0 #FFFFFF,inset 1px 1px 0 #808080;"></div>
<div class="a " style="left:1052px;top:980px;width:48px;height:16px;box-shadow:inset -1px -1px 0 #FFFFFF,inset 1px 1px 0 #808080;"></div>
<div class="a " style="left:1102px;top:980px;width:67px;height:16px;box-shadow:inset -1px -1px 0 #FFFFFF,inset 1px 1px 0 #808080;"></div>
<div class="a " style="left:1171px;top:980px;width:38px;height:16px;box-shadow:inset -1px -1px 0 #FFFFFF,inset 1px 1px 0 #808080;"></div>
<div class="a " style="left:1211px;top:980px;width:35px;height:16px;box-shadow:inset -1px -1px 0 #FFFFFF,inset 1px 1px 0 #808080;"></div>
<div class="a " style="left:1248px;top:980px;width:31px;height:16px;box-shadow:inset -1px -1px 0 #FFFFFF,inset 1px 1px 0 #808080;"></div>
<span class="t" style="top:983px;font-size:11px;line-height:11px;color:#000;left:408px;width:1000px;text-align:center;">C1,V3</span>
<span class="t" style="top:983px;font-size:11px;line-height:11px;color:#000;right:233.00px;">106,233333333333</span>
<span class="t" style="top:983px;font-size:11px;line-height:11px;color:#000;left:576px;width:1000px;text-align:center;">Sel:OFF</span>
<span class="t" style="top:983px;font-size:11px;line-height:11px;color:#000;left:635px;width:1000px;text-align:center;">Weight:OFF</span>
<span class="t" style="top:983px;font-size:11px;line-height:11px;color:#808080;left:690px;width:1000px;text-align:center;">CAPS</span>
<span class="t" style="top:983px;font-size:11px;line-height:11px;color:#000;left:728px;width:1000px;text-align:center;">NUM</span>
<span class="t" style="top:983px;font-size:11px;line-height:11px;color:#808080;left:763px;width:1000px;text-align:center;">REC</span>
<div class="a " style="left:0px;top:997px;width:1280px;height:1px;background:#FFFFFF;"></div>
<div class="a " style="left:2px;top:1000px;width:54px;height:22px;background:#D4D0C8;box-shadow:inset -1px -1px 0 #404040,inset 1px 1px 0 #FFFFFF,inset -2px -2px 0 #808080,inset 2px 2px 0 #D4D0C8;"></div>
<span class="t" style="top:1006px;font-size:11px;line-height:11px;color:#000;font-weight:bold;letter-spacing:0.78px;left:23px;">Пуск</span>
<div class="a " style="left:59px;top:1001px;width:1px;height:21px;background:#808080;"></div>
<div class="a " style="left:60px;top:1001px;width:1px;height:21px;background:#FFFFFF;"></div>
<div class="a " style="left:63px;top:1002px;width:1px;height:18px;background:#FFFFFF;"></div>
<div class="a " style="left:64px;top:1002px;width:1px;height:18px;background:#D4D0C8;"></div>
<div class="a " style="left:65px;top:1002px;width:1px;height:18px;background:#808080;"></div>
<div class="a " style="left:143px;top:1001px;width:1px;height:21px;background:#808080;"></div>
<div class="a " style="left:144px;top:1001px;width:1px;height:21px;background:#FFFFFF;"></div>
<div class="a " style="left:147px;top:1002px;width:1px;height:18px;background:#FFFFFF;"></div>
<div class="a " style="left:148px;top:1002px;width:1px;height:18px;background:#D4D0C8;"></div>
<div class="a " style="left:149px;top:1002px;width:1px;height:18px;background:#808080;"></div>
<div class="a " style="left:154px;top:1000px;width:160px;height:22px;background:#D4D0C8;box-shadow:inset -1px -1px 0 #404040,inset 1px 1px 0 #FFFFFF,inset -2px -2px 0 #808080,inset 2px 2px 0 #D4D0C8;"></div>
<span class="t" style="top:1006px;font-size:11px;line-height:11px;color:#000;letter-spacing:0.22px;left:176px;">{\\413_2\D$\D\User box\...</span>
<div class="a " style="left:317px;top:1000px;width:160px;height:22px;background:#D4D0C8;box-shadow:inset -1px -1px 0 #404040,inset 1px 1px 0 #FFFFFF,inset -2px -2px 0 #808080,inset 2px 2px 0 #D4D0C8;"></div>
<span class="t" style="top:1006px;font-size:11px;line-height:11px;color:#000;letter-spacing:0.12px;left:339px;">{D:\User box\Гавриловс...</span>
<div class="a " style="left:480px;top:1000px;width:160px;height:22px;background:#D4D0C8;box-shadow:inset -1px -1px 0 #404040,inset 1px 1px 0 #FFFFFF,inset -2px -2px 0 #808080,inset 2px 2px 0 #D4D0C8;"></div>
<span class="t" style="top:1006px;font-size:11px;line-height:11px;color:#000;letter-spacing:-0.26px;left:502px;">ЛАБОРАТОРНАЯ РАБОТ...</span>
<div class="a " style="left:643px;top:1000px;width:160px;height:22px;background:repeating-conic-gradient(#fff 0% 25%, #D4D0C8 0% 50%) 0 0/2px 2px;"></div>
<div class="a " style="left:643px;top:1000px;width:160px;height:22px;box-shadow:inset -1px -1px 0 #FFFFFF,inset 1px 1px 0 #404040,inset -2px -2px 0 #D4D0C8,inset 2px 2px 0 #808080;"></div>
<span class="t" style="top:1007px;font-size:11px;line-height:11px;color:#000;font-weight:bold;letter-spacing:0.52px;left:664px;">STATISTICA - Desease</span>
<div class="a " style="left:1112px;top:1000px;width:166px;height:22px;box-shadow:inset -1px -1px 0 #FFFFFF,inset 1px 1px 0 #808080;"></div>
<span class="t" style="top:1007px;font-size:11px;line-height:11px;color:#000;letter-spacing:-0.21px;left:1237px;">10:08</span>
<div class="a " style="left:1134px;top:1003px;width:16px;height:16px;background:#000080;"></div>
<span class="t" style="top:1006px;font-size:11px;line-height:11px;color:#FFFFFF;left:642px;width:1000px;text-align:center;">EN</span>
<svg class="a" style="left:2px;top:1px" width="16" height="16" viewBox="0 0 16 16" shape-rendering="crispEdges"><rect x="0" y="0" width="16" height="1" fill="#000000"/><rect x="0" y="1" width="1" height="1" fill="#000000"/><rect x="1" y="1" width="2" height="1" fill="#FFFFFF"/><rect x="3" y="1" width="1" height="1" fill="#C0C0C0"/><rect x="4" y="1" width="2" height="1" fill="#FFFFFF"/><rect x="6" y="1" width="1" height="1" fill="#C0C0C0"/><rect x="7" y="1" width="2" height="1" fill="#FFFFFF"/><rect x="9" y="1" width="1" height="1" fill="#C0C0C0"/><rect x="10" y="1" width="2" height="1" fill="#FFFFFF"/><rect x="12" y="1" width="1" height="1" fill="#C0C0C0"/><rect x="13" y="1" width="2" height="1" fill="#FFFFFF"/><rect x="15" y="1" width="1" height="1" fill="#000000"/><rect x="0" y="2" width="1" height="1" fill="#000000"/><rect x="1" y="2" width="2" height="1" fill="#FFFFFF"/><rect x="3" y="2" width="1" height="1" fill="#C0C0C0"/><rect x="4" y="2" width="2" height="1" fill="#FFFFFF"/><rect x="6" y="2" width="1" height="1" fill="#C0C0C0"/><rect x="7" y="2" width="2" height="1" fill="#FFFFFF"/><rect x="9" y="2" width="1" height="1" fill="#C0C0C0"/><rect x="10" y="2" width="2" height="1" fill="#FFFFFF"/><rect x="12" y="2" width="1" height="1" fill="#C0C0C0"/><rect x="13" y="2" width="2" height="1" fill="#FFFFFF"/><rect x="15" y="2" width="1" height="1" fill="#000000"/><rect x="0" y="3" width="1" height="1" fill="#000000"/><rect x="1" y="3" width="6" height="1" fill="#C0C0C0"/><rect x="7" y="3" width="1" height="1" fill="#000000"/><rect x="8" y="3" width="7" height="1" fill="#C0C0C0"/><rect x="15" y="3" width="1" height="1" fill="#000000"/><rect x="0" y="4" width="1" height="1" fill="#000000"/><rect x="1" y="4" width="2" height="1" fill="#FFFFFF"/><rect x="3" y="4" width="1" height="1" fill="#C0C0C0"/><rect x="4" y="4" width="2" height="1" fill="#FFFFFF"/><rect x="6" y="4" width="1" height="1" fill="#000000"/><rect x="7" y="4" width="1" height="1" fill="#FFFFFF"/><rect x="8" y="4" width="1" height="1" fill="#000000"/><rect x="9" y="4" width="1" height="1" fill="#C0C0C0"/><rect x="10" y="4" width="2" height="1" fill="#FFFFFF"/><rect x="12" y="4" width="1" height="1" fill="#C0C0C0"/><rect x="13" y="4" width="2" height="1" fill="#FFFFFF"/><rect x="15" y="4" width="1" height="1" fill="#000000"/><rect x="0" y="5" width="1" height="1" fill="#000000"/><rect x="1" y="5" width="2" height="1" fill="#FFFFFF"/><rect x="3" y="5" width="1" height="1" fill="#C0C0C0"/><rect x="4" y="5" width="2" height="1" fill="#FFFFFF"/><rect x="6" y="5" width="1" height="1" fill="#000000"/><rect x="7" y="5" width="1" height="1" fill="#FFFFFF"/><rect x="8" y="5" width="1" height="1" fill="#000000"/><rect x="9" y="5" width="1" height="1" fill="#C0C0C0"/><rect x="10" y="5" width="2" height="1" fill="#FFFFFF"/><rect x="12" y="5" width="1" height="1" fill="#C0C0C0"/><rect x="13" y="5" width="2" height="1" fill="#FFFFFF"/><rect x="15" y="5" width="1" height="1" fill="#000000"/><rect x="0" y="6" width="1" height="1" fill="#000000"/><rect x="1" y="6" width="4" height="1" fill="#C0C0C0"/><rect x="5" y="6" width="1" height="1" fill="#000000"/><rect x="6" y="6" width="2" height="1" fill="#C0C0C0"/><rect x="8" y="6" width="1" height="1" fill="#000000"/><rect x="9" y="6" width="6" height="1" fill="#C0C0C0"/><rect x="15" y="6" width="1" height="1" fill="#000000"/><rect x="0" y="7" width="1" height="1" fill="#000000"/><rect x="1" y="7" width="2" height="1" fill="#FFFFFF"/><rect x="3" y="7" width="1" height="1" fill="#C0C0C0"/><rect x="4" y="7" width="1" height="1" fill="#FFFFFF"/><rect x="5" y="7" width="1" height="1" fill="#000000"/><rect x="6" y="7" width="1" height="1" fill="#C0C0C0"/><rect x="7" y="7" width="2" height="1" fill="#FFFFFF"/><rect x="9" y="7" width="1" height="1" fill="#000000"/><rect x="10" y="7" width="2" height="1" fill="#FFFFFF"/><rect x="12" y="7" width="1" height="1" fill="#C0C0C0"/><rect x="13" y="7" width="2" height="1" fill="#FFFFFF"/><rect x="15" y="7" width="1" height="1" fill="#000000"/><rect x="0" y="8" width="1" height="1" fill="#000000"/><rect x="1" y="8" width="2" height="1" fill="#FFFFFF"/><rect x="3" y="8" width="1" height="1" fill="#C0C0C0"/><rect x="4" y="8" width="1" height="1" fill="#FFFFFF"/><rect x="5" y="8" width="1" height="1" fill="#000000"/><rect x="6" y="8" width="1" height="1" fill="#C0C0C0"/><rect x="7" y="8" width="2" height="1" fill="#FFFFFF"/><rect x="9" y="8" width="1" height="1" fill="#000000"/><rect x="10" y="8" width="2" height="1" fill="#FFFFFF"/><rect x="12" y="8" width="1" height="1" fill="#000000"/><rect x="13" y="8" width="2" height="1" fill="#FFFFFF"/><rect x="15" y="8" width="1" height="1" fill="#000000"/><rect x="0" y="9" width="1" height="1" fill="#000000"/><rect x="1" y="9" width="3" height="1" fill="#C0C0C0"/><rect x="4" y="9" width="1" height="1" fill="#000000"/><rect x="5" y="9" width="4" height="1" fill="#C0C0C0"/><rect x="9" y="9" width="1" height="1" fill="#000000"/><rect x="10" y="9" width="1" height="1" fill="#C0C0C0"/><rect x="11" y="9" width="1" height="1" fill="#000000"/><rect x="12" y="9" width="1" height="1" fill="#C0C0C0"/><rect x="13" y="9" width="1" height="1" fill="#000000"/><rect x="14" y="9" width="1" height="1" fill="#C0C0C0"/><rect x="15" y="9" width="1" height="1" fill="#000000"/><rect x="0" y="10" width="1" height="1" fill="#000000"/><rect x="1" y="10" width="2" height="1" fill="#FFFFFF"/><rect x="3" y="10" width="1" height="1" fill="#C0C0C0"/><rect x="4" y="10" width="1" height="1" fill="#000000"/><rect x="5" y="10" width="1" height="1" fill="#FFFFFF"/><rect x="6" y="10" width="1" height="1" fill="#C0C0C0"/><rect x="7" y="10" width="2" height="1" fill="#FFFFFF"/><rect x="9" y="10" width="1" height="1" fill="#000000"/><rect x="10" y="10" width="1" height="1" fill="#C0C0C0"/><rect x="11" y="10" width="1" height="1" fill="#000000"/><rect x="12" y="10" width="1" height="1" fill="#C0C0C0"/><rect x="13" y="10" width="1" height="1" fill="#000000"/><rect x="14" y="10" width="1" height="1" fill="#FFFFFF"/><rect x="15" y="10" width="1" height="1" fill="#000000"/><rect x="0" y="11" width="1" height="1" fill="#000000"/><rect x="1" y="11" width="2" height="1" fill="#FFFFFF"/><rect x="3" y="11" width="1" height="1" fill="#C0C0C0"/><rect x="4" y="11" width="1" height="1" fill="#000000"/><rect x="5" y="11" width="1" height="1" fill="#FFFFFF"/><rect x="6" y="11" width="1" height="1" fill="#C0C0C0"/><rect x="7" y="11" width="2" height="1" fill="#FFFFFF"/><rect x="9" y="11" width="1" height="1" fill="#C0C0C0"/><rect x="10" y="11" width="1" height="1" fill="#000000"/><rect x="11" y="11" width="1" height="1" fill="#FFFFFF"/><rect x="12" y="11" width="1" height="1" fill="#C0C0C0"/><rect x="13" y="11" width="1" height="1" fill="#000000"/><rect x="14" y="11" width="1" height="1" fill="#FFFFFF"/><rect x="15" y="11" width="1" height="1" fill="#000000"/><rect x="0" y="12" width="1" height="1" fill="#000000"/><rect x="1" y="12" width="2" height="1" fill="#C0C0C0"/><rect x="3" y="12" width="1" height="1" fill="#000000"/><rect x="4" y="12" width="9" height="1" fill="#C0C0C0"/><rect x="13" y="12" width="1" height="1" fill="#000000"/><rect x="14" y="12" width="1" height="1" fill="#C0C0C0"/><rect x="15" y="12" width="1" height="1" fill="#000000"/><rect x="0" y="13" width="1" height="1" fill="#000000"/><rect x="1" y="13" width="2" height="1" fill="#FFFFFF"/><rect x="3" y="13" width="1" height="1" fill="#C0C0C0"/><rect x="4" y="13" width="2" height="1" fill="#FFFFFF"/><rect x="6" y="13" width="1" height="1" fill="#C0C0C0"/><rect x="7" y="13" width="2" height="1" fill="#FFFFFF"/><rect x="9" y="13" width="1" height="1" fill="#C0C0C0"/><rect x="10" y="13" width="2" height="1" fill="#FFFFFF"/><rect x="12" y="13" width="1" height="1" fill="#C0C0C0"/><rect x="13" y="13" width="2" height="1" fill="#FFFFFF"/><rect x="15" y="13" width="1" height="1" fill="#000000"/><rect x="0" y="14" width="1" height="1" fill="#000000"/><rect x="1" y="14" width="2" height="1" fill="#FFFFFF"/><rect x="3" y="14" width="1" height="1" fill="#C0C0C0"/><rect x="4" y="14" width="2" height="1" fill="#FFFFFF"/><rect x="6" y="14" width="1" height="1" fill="#C0C0C0"/><rect x="7" y="14" width="2" height="1" fill="#FFFFFF"/><rect x="9" y="14" width="1" height="1" fill="#C0C0C0"/><rect x="10" y="14" width="2" height="1" fill="#FFFFFF"/><rect x="12" y="14" width="1" height="1" fill="#C0C0C0"/><rect x="13" y="14" width="2" height="1" fill="#FFFFFF"/><rect x="15" y="14" width="1" height="1" fill="#000000"/><rect x="0" y="15" width="16" height="1" fill="#000000"/></svg>
<svg class="a" style="left:1232px;top:11px" width="6" height="2" viewBox="0 0 6 2" shape-rendering="crispEdges"><rect x="0" y="0" width="6" height="1" fill="#000000"/><rect x="0" y="1" width="6" height="1" fill="#000000"/></svg>
<svg class="a" style="left:1247px;top:4px" width="8" height="9" viewBox="0 0 8 9" shape-rendering="crispEdges"><rect x="2" y="0" width="6" height="1" fill="#000000"/><rect x="2" y="1" width="6" height="1" fill="#000000"/><rect x="2" y="2" width="1" height="1" fill="#000000"/><rect x="7" y="2" width="1" height="1" fill="#000000"/><rect x="0" y="3" width="6" height="1" fill="#000000"/><rect x="7" y="3" width="1" height="1" fill="#000000"/><rect x="0" y="4" width="6" height="1" fill="#000000"/><rect x="7" y="4" width="1" height="1" fill="#000000"/><rect x="0" y="5" width="1" height="1" fill="#000000"/><rect x="5" y="5" width="3" height="1" fill="#000000"/><rect x="0" y="6" width="1" height="1" fill="#000000"/><rect x="5" y="6" width="1" height="1" fill="#000000"/><rect x="0" y="7" width="1" height="1" fill="#000000"/><rect x="5" y="7" width="1" height="1" fill="#000000"/><rect x="0" y="8" width="6" height="1" fill="#000000"/></svg>
<svg class="a" style="left:1266px;top:5px" width="8" height="7" viewBox="0 0 8 7" shape-rendering="crispEdges"><rect x="0" y="0" width="2" height="1" fill="#000000"/><rect x="6" y="0" width="2" height="1" fill="#000000"/><rect x="1" y="1" width="2" height="1" fill="#000000"/><rect x="5" y="1" width="2" height="1" fill="#000000"/><rect x="2" y="2" width="4" height="1" fill="#000000"/><rect x="3" y="3" width="2" height="1" fill="#000000"/><rect x="2" y="4" width="4" height="1" fill="#000000"/><rect x="1" y="5" width="2" height="1" fill="#000000"/><rect x="5" y="5" width="2" height="1" fill="#000000"/><rect x="0" y="6" width="2" height="1" fill="#000000"/><rect x="6" y="6" width="2" height="1" fill="#000000"/></svg>
<svg class="a" style="left:13px;top:47px" width="11" height="13" viewBox="0 0 11 13" shape-rendering="crispEdges"><rect x="0" y="0" width="8" height="1" fill="#000000"/><rect x="0" y="1" width="1" height="1" fill="#000000"/><rect x="1" y="1" width="6" height="1" fill="#FFFFFF"/><rect x="7" y="1" width="2" height="1" fill="#000000"/><rect x="0" y="2" width="1" height="1" fill="#000000"/><rect x="1" y="2" width="6" height="1" fill="#FFFFFF"/><rect x="7" y="2" width="1" height="1" fill="#000000"/><rect x="8" y="2" width="1" height="1" fill="#FFFFFF"/><rect x="9" y="2" width="1" height="1" fill="#000000"/><rect x="0" y="3" width="1" height="1" fill="#000000"/><rect x="1" y="3" width="6" height="1" fill="#FFFFFF"/><rect x="7" y="3" width="4" height="1" fill="#000000"/><rect x="0" y="4" width="1" height="1" fill="#000000"/><rect x="1" y="4" width="9" height="1" fill="#FFFFFF"/><rect x="10" y="4" width="1" height="1" fill="#000000"/><rect x="0" y="5" width="1" height="1" fill="#000000"/><rect x="1" y="5" width="9" height="1" fill="#FFFFFF"/><rect x="10" y="5" width="1" height="1" fill="#000000"/><rect x="0" y="6" width="1" height="1" fill="#000000"/><rect x="1" y="6" width="9" height="1" fill="#FFFFFF"/><rect x="10" y="6" width="1" height="1" fill="#000000"/><rect x="0" y="7" width="1" height="1" fill="#000000"/><rect x="1" y="7" width="9" height="1" fill="#FFFFFF"/><rect x="10" y="7" width="1" height="1" fill="#000000"/><rect x="0" y="8" width="1" height="1" fill="#000000"/><rect x="1" y="8" width="9" height="1" fill="#FFFFFF"/><rect x="10" y="8" width="1" height="1" fill="#000000"/><rect x="0" y="9" width="1" height="1" fill="#000000"/><rect x="1" y="9" width="9" height="1" fill="#FFFFFF"/><rect x="10" y="9" width="1" height="1" fill="#000000"/><rect x="0" y="10" width="1" height="1" fill="#000000"/><rect x="1" y="10" width="9" height="1" fill="#FFFFFF"/><rect x="10" y="10" width="1" height="1" fill="#000000"/><rect x="0" y="11" width="1" height="1" fill="#000000"/><rect x="1" y="11" width="9" height="1" fill="#FFFFFF"/><rect x="10" y="11" width="1" height="1" fill="#000000"/><rect x="0" y="12" width="11" height="1" fill="#000000"/></svg>
<svg class="a" style="left:33px;top:47px" width="16" height="13" viewBox="0 0 16 13" shape-rendering="crispEdges"><rect x="9" y="0" width="3" height="1" fill="#000000"/><rect x="8" y="1" width="1" height="1" fill="#000000"/><rect x="12" y="1" width="1" height="1" fill="#000000"/><rect x="14" y="1" width="1" height="1" fill="#000000"/><rect x="13" y="2" width="2" height="1" fill="#000000"/><rect x="1" y="3" width="3" height="1" fill="#000000"/><rect x="12" y="3" width="3" height="1" fill="#000000"/><rect x="0" y="4" width="1" height="1" fill="#000000"/><rect x="1" y="4" width="1" height="1" fill="#FFFF00"/><rect x="2" y="4" width="1" height="1" fill="#FFFFFF"/><rect x="3" y="4" width="1" height="1" fill="#FFFF00"/><rect x="4" y="4" width="1" height="1" fill="#000000"/><rect x="0" y="5" width="1" height="1" fill="#000000"/><rect x="1" y="5" width="1" height="1" fill="#FFFFFF"/><rect x="2" y="5" width="1" height="1" fill="#FFFF00"/><rect x="3" y="5" width="1" height="1" fill="#FFFFFF"/><rect x="4" y="5" width="1" height="1" fill="#FFFF00"/><rect x="5" y="5" width="7" height="1" fill="#000000"/><rect x="0" y="6" width="1" height="1" fill="#000000"/><rect x="1" y="6" width="1" height="1" fill="#FFFF00"/><rect x="2" y="6" width="1" height="1" fill="#FFFFFF"/><rect x="3" y="6" width="1" height="1" fill="#FFFF00"/><rect x="4" y="6" width="1" height="1" fill="#FFFFFF"/><rect x="5" y="6" width="1" height="1" fill="#FFFF00"/><rect x="6" y="6" width="1" height="1" fill="#FFFFFF"/><rect x="7" y="6" width="1" height="1" fill="#FFFF00"/><rect x="8" y="6" width="1" height="1" fill="#FFFFFF"/><rect x="9" y="6" width="1" height="1" fill="#FFFF00"/><rect x="10" y="6" width="1" height="1" fill="#FFFFFF"/><rect x="11" y="6" width="1" height="1" fill="#000000"/><rect x="0" y="7" width="1" height="1" fill="#000000"/><rect x="1" y="7" width="1" height="1" fill="#FFFFFF"/><rect x="2" y="7" width="1" height="1" fill="#FFFF00"/><rect x="3" y="7" width="1" height="1" fill="#FFFFFF"/><rect x="4" y="7" width="1" height="1" fill="#FFFF00"/><rect x="5" y="7" width="11" height="1" fill="#000000"/><rect x="0" y="8" width="1" height="1" fill="#000000"/><rect x="1" y="8" width="1" height="1" fill="#FFFF00"/><rect x="2" y="8" width="1" height="1" fill="#FFFFFF"/><rect x="3" y="8" width="1" height="1" fill="#FFFF00"/><rect x="4" y="8" width="1" height="1" fill="#000000"/><rect x="5" y="8" width="9" height="1" fill="#BFBF00"/><rect x="14" y="8" width="1" height="1" fill="#000000"/><rect x="0" y="9" width="1" height="1" fill="#000000"/><rect x="1" y="9" width="1" height="1" fill="#FFFFFF"/><rect x="2" y="9" width="1" height="1" fill="#FFFF00"/><rect x="3" y="9" width="1" height="1" fill="#000000"/><rect x="4" y="9" width="9" height="1" fill="#BFBF00"/><rect x="13" y="9" width="1" height="1" fill="#000000"/><rect x="0" y="10" width="1" height="1" fill="#000000"/><rect x="1" y="10" width="1" height="1" fill="#FFFF00"/><rect x="2" y="10" width="1" height="1" fill="#000000"/><rect x="3" y="10" width="9" height="1" fill="#BFBF00"/><rect x="12" y="10" width="1" height="1" fill="#000000"/><rect x="0" y="11" width="2" height="1" fill="#000000"/><rect x="2" y="11" width="9" height="1" fill="#BFBF00"/><rect x="11" y="11" width="1" height="1" fill="#000000"/><rect x="0" y="12" width="12" height="1" fill="#000000"/></svg>
<svg class="a" style="left:56px;top:47px" width="14" height="14" viewBox="0 0 14 14" shape-rendering="crispEdges"><rect x="0" y="0" width="14" height="1" fill="#000000"/><rect x="0" y="1" width="1" height="1" fill="#000000"/><rect x="1" y="1" width="1" height="1" fill="#BFBF00"/><rect x="2" y="1" width="1" height="1" fill="#000000"/><rect x="3" y="1" width="8" height="1" fill="#D4D0C8"/><rect x="11" y="1" width="1" height="1" fill="#000000"/><rect x="12" y="1" width="1" height="1" fill="#D4D0C8"/><rect x="13" y="1" width="1" height="1" fill="#000000"/><rect x="0" y="2" width="1" height="1" fill="#000000"/><rect x="1" y="2" width="1" height="1" fill="#BFBF00"/><rect x="2" y="2" width="1" height="1" fill="#000000"/><rect x="3" y="2" width="8" height="1" fill="#D4D0C8"/><rect x="11" y="2" width="1" height="1" fill="#000000"/><rect x="12" y="2" width="1" height="1" fill="#BFBF00"/><rect x="13" y="2" width="1" height="1" fill="#000000"/><rect x="0" y="3" width="1" height="1" fill="#000000"/><rect x="1" y="3" width="1" height="1" fill="#BFBF00"/><rect x="2" y="3" width="1" height="1" fill="#000000"/><rect x="3" y="3" width="8" height="1" fill="#D4D0C8"/><rect x="11" y="3" width="1" height="1" fill="#000000"/><rect x="12" y="3" width="1" height="1" fill="#BFBF00"/><rect x="13" y="3" width="1" height="1" fill="#000000"/><rect x="0" y="4" width="1" height="1" fill="#000000"/><rect x="1" y="4" width="1" height="1" fill="#BFBF00"/><rect x="2" y="4" width="1" height="1" fill="#000000"/><rect x="3" y="4" width="8" height="1" fill="#D4D0C8"/><rect x="11" y="4" width="1" height="1" fill="#000000"/><rect x="12" y="4" width="1" height="1" fill="#BFBF00"/><rect x="13" y="4" width="1" height="1" fill="#000000"/><rect x="0" y="5" width="1" height="1" fill="#000000"/><rect x="1" y="5" width="1" height="1" fill="#BFBF00"/><rect x="2" y="5" width="1" height="1" fill="#000000"/><rect x="3" y="5" width="8" height="1" fill="#D4D0C8"/><rect x="11" y="5" width="1" height="1" fill="#000000"/><rect x="12" y="5" width="1" height="1" fill="#BFBF00"/><rect x="13" y="5" width="1" height="1" fill="#000000"/><rect x="0" y="6" width="1" height="1" fill="#000000"/><rect x="1" y="6" width="2" height="1" fill="#BFBF00"/><rect x="3" y="6" width="8" height="1" fill="#000000"/><rect x="11" y="6" width="2" height="1" fill="#BFBF00"/><rect x="13" y="6" width="1" height="1" fill="#000000"/><rect x="0" y="7" width="1" height="1" fill="#000000"/><rect x="1" y="7" width="12" height="1" fill="#BFBF00"/><rect x="13" y="7" width="1" height="1" fill="#000000"/><rect x="0" y="8" width="1" height="1" fill="#000000"/><rect x="1" y="8" width="2" height="1" fill="#BFBF00"/><rect x="3" y="8" width="9" height="1" fill="#000000"/><rect x="12" y="8" width="1" height="1" fill="#BFBF00"/><rect x="13" y="8" width="1" height="1" fill="#000000"/><rect x="0" y="9" width="1" height="1" fill="#000000"/><rect x="1" y="9" width="2" height="1" fill="#BFBF00"/><rect x="3" y="9" width="6" height="1" fill="#000000"/><rect x="9" y="9" width="2" height="1" fill="#D4D0C8"/><rect x="11" y="9" width="1" height="1" fill="#000000"/><rect x="12" y="9" width="1" height="1" fill="#BFBF00"/><rect x="13" y="9" width="1" height="1" fill="#000000"/><rect x="0" y="10" width="1" height="1" fill="#000000"/><rect x="1" y="10" width="2" height="1" fill="#BFBF00"/><rect x="3" y="10" width="6" height="1" fill="#000000"/><rect x="9" y="10" width="2" height="1" fill="#D4D0C8"/><rect x="11" y="10" width="1" height="1" fill="#000000"/><rect x="12" y="10" width="1" height="1" fill="#BFBF00"/><rect x="13" y="10" width="1" height="1" fill="#000000"/><rect x="0" y="11" width="1" height="1" fill="#000000"/><rect x="1" y="11" width="2" height="1" fill="#BFBF00"/><rect x="3" y="11" width="6" height="1" fill="#000000"/><rect x="9" y="11" width="2" height="1" fill="#D4D0C8"/><rect x="11" y="11" width="1" height="1" fill="#000000"/><rect x="12" y="11" width="1" height="1" fill="#BFBF00"/><rect x="13" y="11" width="1" height="1" fill="#000000"/><rect x="0" y="12" width="1" height="1" fill="#000000"/><rect x="1" y="12" width="2" height="1" fill="#BFBF00"/><rect x="3" y="12" width="9" height="1" fill="#000000"/><rect x="12" y="12" width="1" height="1" fill="#BFBF00"/><rect x="13" y="12" width="1" height="1" fill="#000000"/><rect x="1" y="13" width="13" height="1" fill="#000000"/></svg>
<div class="a " style="left:78px;top:43px;width:1px;height:22px;background:#808080;"></div>
<div class="a " style="left:79px;top:43px;width:1px;height:22px;background:#FFFFFF;"></div>
<svg class="a" style="left:85px;top:47px" width="16" height="14" viewBox="0 0 16 14" shape-rendering="crispEdges"><rect x="5" y="0" width="9" height="1" fill="#000000"/><rect x="4" y="1" width="1" height="1" fill="#000000"/><rect x="5" y="1" width="7" height="1" fill="#FFFFFF"/><rect x="12" y="1" width="1" height="1" fill="#000000"/><rect x="4" y="2" width="1" height="1" fill="#000000"/><rect x="5" y="2" width="1" height="1" fill="#FFFFFF"/><rect x="6" y="2" width="4" height="1" fill="#000000"/><rect x="10" y="2" width="2" height="1" fill="#FFFFFF"/><rect x="12" y="2" width="1" height="1" fill="#000000"/><rect x="3" y="3" width="1" height="1" fill="#000000"/><rect x="4" y="3" width="7" height="1" fill="#FFFFFF"/><rect x="11" y="3" width="1" height="1" fill="#000000"/><rect x="3" y="4" width="1" height="1" fill="#000000"/><rect x="4" y="4" width="1" height="1" fill="#FFFFFF"/><rect x="5" y="4" width="4" height="1" fill="#000000"/><rect x="9" y="4" width="2" height="1" fill="#FFFFFF"/><rect x="11" y="4" width="3" height="1" fill="#000000"/><rect x="2" y="5" width="10" height="1" fill="#000000"/><rect x="12" y="5" width="1" height="1" fill="#D4D0C8"/><rect x="13" y="5" width="2" height="1" fill="#000000"/><rect x="1" y="6" width="1" height="1" fill="#000000"/><rect x="2" y="6" width="9" height="1" fill="#D4D0C8"/><rect x="11" y="6" width="1" height="1" fill="#000000"/><rect x="12" y="6" width="1" height="1" fill="#D4D0C8"/><rect x="13" y="6" width="1" height="1" fill="#000000"/><rect x="14" y="6" width="1" height="1" fill="#D4D0C8"/><rect x="15" y="6" width="1" height="1" fill="#000000"/><rect x="0" y="7" width="13" height="1" fill="#000000"/><rect x="13" y="7" width="1" height="1" fill="#D4D0C8"/><rect x="14" y="7" width="2" height="1" fill="#000000"/><rect x="0" y="8" width="1" height="1" fill="#000000"/><rect x="1" y="8" width="11" height="1" fill="#D4D0C8"/><rect x="12" y="8" width="2" height="1" fill="#000000"/><rect x="14" y="8" width="1" height="1" fill="#D4D0C8"/><rect x="15" y="8" width="1" height="1" fill="#000000"/><rect x="0" y="9" width="1" height="1" fill="#000000"/><rect x="1" y="9" width="6" height="1" fill="#FFFFFF"/><rect x="7" y="9" width="3" height="1" fill="#FFFF00"/><rect x="10" y="9" width="2" height="1" fill="#FFFFFF"/><rect x="12" y="9" width="1" height="1" fill="#000000"/><rect x="13" y="9" width="1" height="1" fill="#D4D0C8"/><rect x="14" y="9" width="2" height="1" fill="#000000"/><rect x="0" y="10" width="15" height="1" fill="#000000"/><rect x="1" y="11" width="1" height="1" fill="#000000"/><rect x="2" y="11" width="10" height="1" fill="#D4D0C8"/><rect x="12" y="11" width="2" height="1" fill="#000000"/><rect x="1" y="12" width="1" height="1" fill="#000000"/><rect x="2" y="12" width="10" height="1" fill="#FFFFFF"/><rect x="12" y="12" width="1" height="1" fill="#000000"/><rect x="2" y="13" width="10" height="1" fill="#000000"/></svg>
<svg class="a" style="left:107px;top:46px" width="16" height="15" viewBox="0 0 16 15" shape-rendering="crispEdges"><rect x="0" y="0" width="9" height="1" fill="#000000"/><rect x="0" y="1" width="1" height="1" fill="#000000"/><rect x="1" y="1" width="7" height="1" fill="#FFFFFF"/><rect x="8" y="1" width="2" height="1" fill="#000000"/><rect x="0" y="2" width="1" height="1" fill="#000000"/><rect x="1" y="2" width="7" height="1" fill="#FFFFFF"/><rect x="8" y="2" width="1" height="1" fill="#000000"/><rect x="9" y="2" width="1" height="1" fill="#FFFFFF"/><rect x="10" y="2" width="1" height="1" fill="#000000"/><rect x="0" y="3" width="1" height="1" fill="#000000"/><rect x="1" y="3" width="7" height="1" fill="#FFFFFF"/><rect x="8" y="3" width="4" height="1" fill="#000000"/><rect x="0" y="4" width="1" height="1" fill="#000000"/><rect x="1" y="4" width="10" height="1" fill="#FFFFFF"/><rect x="11" y="4" width="1" height="1" fill="#000000"/><rect x="0" y="5" width="1" height="1" fill="#000000"/><rect x="1" y="5" width="6" height="1" fill="#FFFFFF"/><rect x="7" y="5" width="5" height="1" fill="#000000"/><rect x="0" y="6" width="1" height="1" fill="#000000"/><rect x="1" y="6" width="5" height="1" fill="#FFFFFF"/><rect x="6" y="6" width="1" height="1" fill="#000000"/><rect x="7" y="6" width="1" height="1" fill="#00FFFF"/><rect x="8" y="6" width="4" height="1" fill="#E4E0D8"/><rect x="12" y="6" width="1" height="1" fill="#000000"/><rect x="0" y="7" width="1" height="1" fill="#000000"/><rect x="1" y="7" width="4" height="1" fill="#FFFFFF"/><rect x="5" y="7" width="1" height="1" fill="#000000"/><rect x="6" y="7" width="2" height="1" fill="#00FFFF"/><rect x="8" y="7" width="5" height="1" fill="#E4E0D8"/><rect x="13" y="7" width="1" height="1" fill="#000000"/><rect x="0" y="8" width="1" height="1" fill="#000000"/><rect x="1" y="8" width="4" height="1" fill="#FFFFFF"/><rect x="5" y="8" width="1" height="1" fill="#000000"/><rect x="6" y="8" width="5" height="1" fill="#E4E0D8"/><rect x="11" y="8" width="1" height="1" fill="#00FFFF"/><rect x="12" y="8" width="1" height="1" fill="#E4E0D8"/><rect x="13" y="8" width="1" height="1" fill="#000000"/><rect x="0" y="9" width="1" height="1" fill="#000000"/><rect x="1" y="9" width="4" height="1" fill="#FFFFFF"/><rect x="5" y="9" width="1" height="1" fill="#000000"/><rect x="6" y="9" width="4" height="1" fill="#E4E0D8"/><rect x="10" y="9" width="2" height="1" fill="#00FFFF"/><rect x="12" y="9" width="1" height="1" fill="#E4E0D8"/><rect x="13" y="9" width="1" height="1" fill="#000000"/><rect x="0" y="10" width="1" height="1" fill="#000000"/><rect x="1" y="10" width="5" height="1" fill="#FFFFFF"/><rect x="6" y="10" width="1" height="1" fill="#000000"/><rect x="7" y="10" width="5" height="1" fill="#E4E0D8"/><rect x="12" y="10" width="1" height="1" fill="#000000"/><rect x="0" y="11" width="1" height="1" fill="#000000"/><rect x="1" y="11" width="6" height="1" fill="#FFFFFF"/><rect x="7" y="11" width="6" height="1" fill="#000000"/><rect x="0" y="12" width="1" height="1" fill="#000000"/><rect x="1" y="12" width="10" height="1" fill="#FFFFFF"/><rect x="11" y="12" width="3" height="1" fill="#000000"/><rect x="0" y="13" width="15" height="1" fill="#000000"/><rect x="13" y="14" width="2" height="1" fill="#000000"/></svg>
<div class="a " style="left:130px;top:43px;width:1px;height:22px;background:#808080;"></div>
<div class="a " style="left:131px;top:43px;width:1px;height:22px;background:#FFFFFF;"></div>
<svg class="a" style="left:140px;top:47px" width="9" height="14" viewBox="0 0 9 14" shape-rendering="crispEdges"><rect x="2" y="0" width="1" height="1" fill="#000000"/><rect x="6" y="0" width="1" height="1" fill="#000000"/><rect x="2" y="1" width="1" height="1" fill="#000000"/><rect x="6" y="1" width="1" height="1" fill="#000000"/><rect x="2" y="2" width="1" height="1" fill="#000000"/><rect x="6" y="2" width="1" height="1" fill="#000000"/><rect x="3" y="3" width="1" height="1" fill="#000000"/><rect x="5" y="3" width="1" height="1" fill="#000000"/><rect x="3" y="4" width="1" height="1" fill="#000000"/><rect x="5" y="4" width="1" height="1" fill="#000000"/><rect x="3" y="5" width="1" height="1" fill="#000000"/><rect x="5" y="5" width="1" height="1" fill="#000000"/><rect x="4" y="6" width="1" height="1" fill="#000000"/><rect x="3" y="7" width="1" height="1" fill="#0000D0"/><rect x="4" y="7" width="1" height="1" fill="#000000"/><rect x="5" y="7" width="1" height="1" fill="#0000D0"/><rect x="2" y="8" width="2" height="1" fill="#0000D0"/><rect x="5" y="8" width="2" height="1" fill="#0000D0"/><rect x="1" y="9" width="1" height="1" fill="#0000D0"/><rect x="3" y="9" width="1" height="1" fill="#0000D0"/><rect x="5" y="9" width="1" height="1" fill="#0000D0"/><rect x="7" y="9" width="1" height="1" fill="#0000D0"/><rect x="0" y="10" width="1" height="1" fill="#0000D0"/><rect x="3" y="10" width="1" height="1" fill="#0000D0"/><rect x="5" y="10" width="1" height="1" fill="#0000D0"/><rect x="8" y="10" width="1" height="1" fill="#0000D0"/><rect x="0" y="11" width="1" height="1" fill="#0000D0"/><rect x="3" y="11" width="1" height="1" fill="#0000D0"/><rect x="5" y="11" width="1" height="1" fill="#0000D0"/><rect x="8" y="11" width="1" height="1" fill="#0000D0"/><rect x="0" y="12" width="1" height="1" fill="#0000D0"/><rect x="3" y="12" width="1" height="1" fill="#0000D0"/><rect x="5" y="12" width="1" height="1" fill="#0000D0"/><rect x="8" y="12" width="1" height="1" fill="#0000D0"/><rect x="1" y="13" width="2" height="1" fill="#0000D0"/><rect x="6" y="13" width="2" height="1" fill="#0000D0"/></svg>
<svg class="a" style="left:159px;top:47px" width="15" height="13" viewBox="0 0 15 13" shape-rendering="crispEdges"><rect x="0" y="0" width="6" height="1" fill="#000000"/><rect x="0" y="1" width="1" height="1" fill="#000000"/><rect x="1" y="1" width="4" height="1" fill="#FFFFFF"/><rect x="5" y="1" width="2" height="1" fill="#000000"/><rect x="0" y="2" width="1" height="1" fill="#000000"/><rect x="1" y="2" width="1" height="1" fill="#FFFFFF"/><rect x="2" y="2" width="2" height="1" fill="#000000"/><rect x="4" y="2" width="1" height="1" fill="#FFFFFF"/><rect x="5" y="2" width="1" height="1" fill="#000000"/><rect x="6" y="2" width="1" height="1" fill="#FFFFFF"/><rect x="7" y="2" width="1" height="1" fill="#000000"/><rect x="0" y="3" width="1" height="1" fill="#000000"/><rect x="1" y="3" width="4" height="1" fill="#FFFFFF"/><rect x="5" y="3" width="1" height="1" fill="#000000"/><rect x="6" y="3" width="6" height="1" fill="#0000D0"/><rect x="0" y="4" width="1" height="1" fill="#000000"/><rect x="1" y="4" width="1" height="1" fill="#FFFFFF"/><rect x="2" y="4" width="3" height="1" fill="#000000"/><rect x="5" y="4" width="1" height="1" fill="#FFFFFF"/><rect x="6" y="4" width="1" height="1" fill="#0000D0"/><rect x="7" y="4" width="4" height="1" fill="#FFFFFF"/><rect x="11" y="4" width="2" height="1" fill="#0000D0"/><rect x="0" y="5" width="1" height="1" fill="#000000"/><rect x="1" y="5" width="5" height="1" fill="#FFFFFF"/><rect x="6" y="5" width="1" height="1" fill="#0000D0"/><rect x="7" y="5" width="4" height="1" fill="#FFFFFF"/><rect x="11" y="5" width="1" height="1" fill="#0000D0"/><rect x="12" y="5" width="1" height="1" fill="#FFFFFF"/><rect x="13" y="5" width="1" height="1" fill="#0000D0"/><rect x="0" y="6" width="1" height="1" fill="#000000"/><rect x="1" y="6" width="1" height="1" fill="#FFFFFF"/><rect x="2" y="6" width="4" height="1" fill="#000000"/><rect x="6" y="6" width="1" height="1" fill="#0000D0"/><rect x="7" y="6" width="1" height="1" fill="#FFFFFF"/><rect x="8" y="6" width="2" height="1" fill="#000000"/><rect x="10" y="6" width="1" height="1" fill="#FFFFFF"/><rect x="11" y="6" width="4" height="1" fill="#0000D0"/><rect x="0" y="7" width="1" height="1" fill="#000000"/><rect x="1" y="7" width="5" height="1" fill="#FFFFFF"/><rect x="6" y="7" width="1" height="1" fill="#0000D0"/><rect x="7" y="7" width="7" height="1" fill="#FFFFFF"/><rect x="14" y="7" width="1" height="1" fill="#0000D0"/><rect x="0" y="8" width="6" height="1" fill="#000000"/><rect x="6" y="8" width="1" height="1" fill="#0000D0"/><rect x="7" y="8" width="1" height="1" fill="#FFFFFF"/><rect x="8" y="8" width="5" height="1" fill="#000000"/><rect x="13" y="8" width="1" height="1" fill="#FFFFFF"/><rect x="14" y="8" width="1" height="1" fill="#0000D0"/><rect x="6" y="9" width="1" height="1" fill="#0000D0"/><rect x="7" y="9" width="7" height="1" fill="#FFFFFF"/><rect x="14" y="9" width="1" height="1" fill="#0000D0"/><rect x="6" y="10" width="1" height="1" fill="#0000D0"/><rect x="7" y="10" width="1" height="1" fill="#FFFFFF"/><rect x="8" y="10" width="5" height="1" fill="#000000"/><rect x="13" y="10" width="1" height="1" fill="#FFFFFF"/><rect x="14" y="10" width="1" height="1" fill="#0000D0"/><rect x="6" y="11" width="1" height="1" fill="#0000D0"/><rect x="7" y="11" width="7" height="1" fill="#FFFFFF"/><rect x="14" y="11" width="1" height="1" fill="#0000D0"/><rect x="6" y="12" width="9" height="1" fill="#0000D0"/></svg>
<svg class="a" style="left:181px;top:47px" width="16" height="14" viewBox="0 0 16 14" shape-rendering="crispEdges"><rect x="5" y="0" width="5" height="1" fill="#000000"/><rect x="1" y="1" width="4" height="1" fill="#000000"/><rect x="5" y="1" width="1" height="1" fill="#FFFF00"/><rect x="6" y="1" width="3" height="1" fill="#000000"/><rect x="9" y="1" width="1" height="1" fill="#FFFF00"/><rect x="10" y="1" width="4" height="1" fill="#000000"/><rect x="0" y="2" width="1" height="1" fill="#000000"/><rect x="1" y="2" width="1" height="1" fill="#BFBF00"/><rect x="2" y="2" width="1" height="1" fill="#808000"/><rect x="3" y="2" width="9" height="1" fill="#000000"/><rect x="12" y="2" width="1" height="1" fill="#808000"/><rect x="13" y="2" width="1" height="1" fill="#BFBF00"/><rect x="14" y="2" width="1" height="1" fill="#000000"/><rect x="0" y="3" width="1" height="1" fill="#000000"/><rect x="1" y="3" width="1" height="1" fill="#808000"/><rect x="2" y="3" width="1" height="1" fill="#BFBF00"/><rect x="3" y="3" width="1" height="1" fill="#808000"/><rect x="4" y="3" width="1" height="1" fill="#BFBF00"/><rect x="5" y="3" width="1" height="1" fill="#808000"/><rect x="6" y="3" width="1" height="1" fill="#BFBF00"/><rect x="7" y="3" width="1" height="1" fill="#808000"/><rect x="8" y="3" width="1" height="1" fill="#BFBF00"/><rect x="9" y="3" width="1" height="1" fill="#808000"/><rect x="10" y="3" width="1" height="1" fill="#BFBF00"/><rect x="11" y="3" width="1" height="1" fill="#808000"/><rect x="12" y="3" width="1" height="1" fill="#BFBF00"/><rect x="13" y="3" width="1" height="1" fill="#808000"/><rect x="14" y="3" width="1" height="1" fill="#000000"/><rect x="0" y="4" width="1" height="1" fill="#000000"/><rect x="1" y="4" width="1" height="1" fill="#BFBF00"/><rect x="2" y="4" width="1" height="1" fill="#808000"/><rect x="3" y="4" width="1" height="1" fill="#BFBF00"/><rect x="4" y="4" width="1" height="1" fill="#808000"/><rect x="5" y="4" width="1" height="1" fill="#BFBF00"/><rect x="6" y="4" width="1" height="1" fill="#808000"/><rect x="7" y="4" width="1" height="1" fill="#BFBF00"/><rect x="8" y="4" width="1" height="1" fill="#808000"/><rect x="9" y="4" width="1" height="1" fill="#BFBF00"/><rect x="10" y="4" width="1" height="1" fill="#808000"/><rect x="11" y="4" width="1" height="1" fill="#BFBF00"/><rect x="12" y="4" width="1" height="1" fill="#808000"/><rect x="13" y="4" width="1" height="1" fill="#BFBF00"/><rect x="14" y="4" width="1" height="1" fill="#000000"/><rect x="0" y="5" width="1" height="1" fill="#000000"/><rect x="1" y="5" width="1" height="1" fill="#808000"/><rect x="2" y="5" width="1" height="1" fill="#BFBF00"/><rect x="3" y="5" width="1" height="1" fill="#808000"/><rect x="4" y="5" width="1" height="1" fill="#BFBF00"/><rect x="5" y="5" width="1" height="1" fill="#808000"/><rect x="6" y="5" width="1" height="1" fill="#BFBF00"/><rect x="7" y="5" width="1" height="1" fill="#808000"/><rect x="8" y="5" width="1" height="1" fill="#BFBF00"/><rect x="9" y="5" width="1" height="1" fill="#808000"/><rect x="10" y="5" width="1" height="1" fill="#BFBF00"/><rect x="11" y="5" width="1" height="1" fill="#808000"/><rect x="12" y="5" width="1" height="1" fill="#BFBF00"/><rect x="13" y="5" width="1" height="1" fill="#808000"/><rect x="14" y="5" width="1" height="1" fill="#000000"/><rect x="0" y="6" width="1" height="1" fill="#000000"/><rect x="1" y="6" width="1" height="1" fill="#BFBF00"/><rect x="2" y="6" width="1" height="1" fill="#808000"/><rect x="3" y="6" width="1" height="1" fill="#BFBF00"/><rect x="4" y="6" width="1" height="1" fill="#808000"/><rect x="5" y="6" width="1" height="1" fill="#BFBF00"/><rect x="6" y="6" width="8" height="1" fill="#0000D0"/><rect x="0" y="7" width="1" height="1" fill="#000000"/><rect x="1" y="7" width="1" height="1" fill="#808000"/><rect x="2" y="7" width="1" height="1" fill="#BFBF00"/><rect x="3" y="7" width="1" height="1" fill="#808000"/><rect x="4" y="7" width="1" height="1" fill="#BFBF00"/><rect x="5" y="7" width="1" height="1" fill="#808000"/><rect x="6" y="7" width="1" height="1" fill="#0000D0"/><rect x="7" y="7" width="5" height="1" fill="#FFFFFF"/><rect x="12" y="7" width="1" height="1" fill="#0000D0"/><rect x="13" y="7" width="1" height="1" fill="#FFFFFF"/><rect x="14" y="7" width="1" height="1" fill="#0000D0"/><rect x="0" y="8" width="1" height="1" fill="#000000"/><rect x="1" y="8" width="1" height="1" fill="#BFBF00"/><rect x="2" y="8" width="1" height="1" fill="#808000"/><rect x="3" y="8" width="1" height="1" fill="#BFBF00"/><rect x="4" y="8" width="1" height="1" fill="#808000"/><rect x="5" y="8" width="1" height="1" fill="#BFBF00"/><rect x="6" y="8" width="1" height="1" fill="#0000D0"/><rect x="7" y="8" width="1" height="1" fill="#FFFFFF"/><rect x="8" y="8" width="2" height="1" fill="#0000D0"/><rect x="10" y="8" width="2" height="1" fill="#FFFFFF"/><rect x="12" y="8" width="4" height="1" fill="#0000D0"/><rect x="0" y="9" width="1" height="1" fill="#000000"/><rect x="1" y="9" width="1" height="1" fill="#808000"/><rect x="2" y="9" width="1" height="1" fill="#BFBF00"/><rect x="3" y="9" width="1" height="1" fill="#808000"/><rect x="4" y="9" width="1" height="1" fill="#BFBF00"/><rect x="5" y="9" width="1" height="1" fill="#808000"/><rect x="6" y="9" width="1" height="1" fill="#0000D0"/><rect x="7" y="9" width="8" height="1" fill="#FFFFFF"/><rect x="15" y="9" width="1" height="1" fill="#0000D0"/><rect x="0" y="10" width="1" height="1" fill="#000000"/><rect x="1" y="10" width="1" height="1" fill="#BFBF00"/><rect x="2" y="10" width="1" height="1" fill="#808000"/><rect x="3" y="10" width="1" height="1" fill="#BFBF00"/><rect x="4" y="10" width="1" height="1" fill="#808000"/><rect x="5" y="10" width="1" height="1" fill="#BFBF00"/><rect x="6" y="10" width="1" height="1" fill="#0000D0"/><rect x="7" y="10" width="1" height="1" fill="#FFFFFF"/><rect x="8" y="10" width="6" height="1" fill="#0000D0"/><rect x="14" y="10" width="1" height="1" fill="#FFFFFF"/><rect x="15" y="10" width="1" height="1" fill="#0000D0"/><rect x="0" y="11" width="1" height="1" fill="#000000"/><rect x="1" y="11" width="1" height="1" fill="#808000"/><rect x="2" y="11" width="1" height="1" fill="#BFBF00"/><rect x="3" y="11" width="1" height="1" fill="#808000"/><rect x="4" y="11" width="1" height="1" fill="#BFBF00"/><rect x="5" y="11" width="1" height="1" fill="#808000"/><rect x="6" y="11" width="1" height="1" fill="#0000D0"/><rect x="7" y="11" width="8" height="1" fill="#FFFFFF"/><rect x="15" y="11" width="1" height="1" fill="#0000D0"/><rect x="0" y="12" width="6" height="1" fill="#000000"/><rect x="6" y="12" width="1" height="1" fill="#0000D0"/><rect x="7" y="12" width="8" height="1" fill="#FFFFFF"/><rect x="15" y="12" width="1" height="1" fill="#0000D0"/><rect x="6" y="13" width="10" height="1" fill="#0000D0"/></svg>
<svg class="a" style="left:203px;top:46px" width="16" height="15" viewBox="0 0 16 15" shape-rendering="crispEdges"><rect x="13" y="0" width="2" height="1" fill="#000080"/><rect x="12" y="1" width="4" height="1" fill="#000080"/><rect x="11" y="2" width="4" height="1" fill="#000080"/><rect x="7" y="3" width="2" height="1" fill="#000000"/><rect x="10" y="3" width="4" height="1" fill="#000080"/><rect x="6" y="4" width="1" height="1" fill="#000000"/><rect x="7" y="4" width="2" height="1" fill="#FFFFFF"/><rect x="9" y="4" width="1" height="1" fill="#000000"/><rect x="10" y="4" width="3" height="1" fill="#000080"/><rect x="5" y="5" width="1" height="1" fill="#000000"/><rect x="6" y="5" width="1" height="1" fill="#FFFFFF"/><rect x="7" y="5" width="2" height="1" fill="#FFFF00"/><rect x="9" y="5" width="1" height="1" fill="#FFFFFF"/><rect x="10" y="5" width="1" height="1" fill="#000000"/><rect x="0" y="6" width="5" height="1" fill="#000000"/><rect x="5" y="6" width="1" height="1" fill="#FFFFFF"/><rect x="6" y="6" width="2" height="1" fill="#FFFF00"/><rect x="8" y="6" width="1" height="1" fill="#FFFFFF"/><rect x="9" y="6" width="1" height="1" fill="#C0C0C0"/><rect x="10" y="6" width="1" height="1" fill="#FFFFFF"/><rect x="11" y="6" width="1" height="1" fill="#000000"/><rect x="1" y="7" width="1" height="1" fill="#000000"/><rect x="2" y="7" width="1" height="1" fill="#FFFFFF"/><rect x="3" y="7" width="1" height="1" fill="#C0C0C0"/><rect x="4" y="7" width="1" height="1" fill="#FFFFFF"/><rect x="5" y="7" width="2" height="1" fill="#FFFF00"/><rect x="7" y="7" width="1" height="1" fill="#FFFFFF"/><rect x="8" y="7" width="1" height="1" fill="#C0C0C0"/><rect x="9" y="7" width="1" height="1" fill="#FFFFFF"/><rect x="10" y="7" width="1" height="1" fill="#C0C0C0"/><rect x="11" y="7" width="1" height="1" fill="#000000"/><rect x="2" y="8" width="1" height="1" fill="#000000"/><rect x="3" y="8" width="1" height="1" fill="#FFFFFF"/><rect x="4" y="8" width="1" height="1" fill="#C0C0C0"/><rect x="5" y="8" width="1" height="1" fill="#FFFFFF"/><rect x="6" y="8" width="1" height="1" fill="#FFFF00"/><rect x="7" y="8" width="1" height="1" fill="#FFFFFF"/><rect x="8" y="8" width="1" height="1" fill="#C0C0C0"/><rect x="9" y="8" width="1" height="1" fill="#FFFFFF"/><rect x="10" y="8" width="1" height="1" fill="#000000"/><rect x="3" y="9" width="1" height="1" fill="#000000"/><rect x="4" y="9" width="1" height="1" fill="#FFFFFF"/><rect x="5" y="9" width="1" height="1" fill="#C0C0C0"/><rect x="6" y="9" width="1" height="1" fill="#FFFFFF"/><rect x="7" y="9" width="1" height="1" fill="#FFFF00"/><rect x="8" y="9" width="1" height="1" fill="#C0C0C0"/><rect x="9" y="9" width="1" height="1" fill="#000000"/><rect x="4" y="10" width="1" height="1" fill="#000000"/><rect x="5" y="10" width="1" height="1" fill="#FFFFFF"/><rect x="6" y="10" width="1" height="1" fill="#C0C0C0"/><rect x="7" y="10" width="1" height="1" fill="#FFFFFF"/><rect x="8" y="10" width="1" height="1" fill="#FFFF00"/><rect x="9" y="10" width="1" height="1" fill="#000000"/><rect x="5" y="11" width="1" height="1" fill="#000000"/><rect x="6" y="11" width="1" height="1" fill="#FFFFFF"/><rect x="7" y="11" width="1" height="1" fill="#C0C0C0"/><rect x="8" y="11" width="1" height="1" fill="#FFFF00"/><rect x="9" y="11" width="1" height="1" fill="#000000"/><rect x="6" y="12" width="2" height="1" fill="#000000"/><rect x="8" y="12" width="1" height="1" fill="#FFFF00"/><rect x="5" y="13" width="1" height="1" fill="#FFFF00"/><rect x="7" y="13" width="1" height="1" fill="#FFFF00"/><rect x="0" y="14" width="5" height="1" fill="#FFFF00"/></svg>
<div class="a " style="left:226px;top:43px;width:1px;height:22px;background:#808080;"></div>
<div class="a " style="left:227px;top:43px;width:1px;height:22px;background:#FFFFFF;"></div>
<svg class="a" style="left:235px;top:50px" width="13" height="8" viewBox="0 0 13 8" shape-rendering="crispEdges"><rect x="3" y="0" width="5" height="1" fill="#0000D0"/><rect x="1" y="1" width="1" height="1" fill="#0000D0"/><rect x="3" y="1" width="1" height="1" fill="#0000D0"/><rect x="8" y="1" width="2" height="1" fill="#0000D0"/><rect x="1" y="2" width="2" height="1" fill="#0000D0"/><rect x="10" y="2" width="1" height="1" fill="#0000D0"/><rect x="1" y="3" width="3" height="1" fill="#0000D0"/><rect x="10" y="3" width="1" height="1" fill="#0000D0"/><rect x="1" y="4" width="4" height="1" fill="#0000D0"/><rect x="10" y="4" width="1" height="1" fill="#0000D0"/><rect x="0" y="5" width="6" height="1" fill="#0000D0"/><rect x="9" y="5" width="1" height="1" fill="#0000D0"/><rect x="9" y="6" width="1" height="1" fill="#0000D0"/><rect x="8" y="7" width="1" height="1" fill="#0000D0"/></svg>
<svg class="a" style="left:258px;top:51px" width="14" height="8" viewBox="0 0 14 8" shape-rendering="crispEdges"><rect x="4" y="0" width="5" height="1" fill="#FFFFFF"/><rect x="2" y="1" width="2" height="1" fill="#FFFFFF"/><rect x="8" y="1" width="1" height="1" fill="#FFFFFF"/><rect x="11" y="1" width="1" height="1" fill="#FFFFFF"/><rect x="1" y="2" width="1" height="1" fill="#FFFFFF"/><rect x="10" y="2" width="2" height="1" fill="#FFFFFF"/><rect x="1" y="3" width="1" height="1" fill="#FFFFFF"/><rect x="9" y="3" width="3" height="1" fill="#FFFFFF"/><rect x="1" y="4" width="1" height="1" fill="#FFFFFF"/><rect x="8" y="4" width="4" height="1" fill="#FFFFFF"/><rect x="2" y="5" width="1" height="1" fill="#FFFFFF"/><rect x="7" y="5" width="6" height="1" fill="#FFFFFF"/><rect x="2" y="6" width="1" height="1" fill="#FFFFFF"/><rect x="3" y="7" width="1" height="1" fill="#FFFFFF"/></svg>
<svg class="a" style="left:257px;top:50px" width="14" height="8" viewBox="0 0 14 8" shape-rendering="crispEdges"><rect x="4" y="0" width="5" height="1" fill="#808080"/><rect x="2" y="1" width="2" height="1" fill="#808080"/><rect x="8" y="1" width="1" height="1" fill="#808080"/><rect x="11" y="1" width="1" height="1" fill="#808080"/><rect x="1" y="2" width="1" height="1" fill="#808080"/><rect x="10" y="2" width="2" height="1" fill="#808080"/><rect x="1" y="3" width="1" height="1" fill="#808080"/><rect x="9" y="3" width="3" height="1" fill="#808080"/><rect x="1" y="4" width="1" height="1" fill="#808080"/><rect x="8" y="4" width="4" height="1" fill="#808080"/><rect x="2" y="5" width="1" height="1" fill="#808080"/><rect x="7" y="5" width="6" height="1" fill="#808080"/><rect x="2" y="6" width="1" height="1" fill="#808080"/><rect x="3" y="7" width="1" height="1" fill="#808080"/></svg>
<div class="a " style="left:278px;top:43px;width:1px;height:22px;background:#808080;"></div>
<div class="a " style="left:279px;top:43px;width:1px;height:22px;background:#FFFFFF;"></div>
<svg class="a" style="left:285px;top:47px" width="15" height="13" viewBox="0 0 15 13" shape-rendering="crispEdges"><rect x="2" y="0" width="2" height="1" fill="#000000"/><rect x="9" y="0" width="2" height="1" fill="#000000"/><rect x="2" y="1" width="2" height="1" fill="#000000"/><rect x="9" y="1" width="2" height="1" fill="#000000"/><rect x="1" y="2" width="4" height="1" fill="#000000"/><rect x="8" y="2" width="4" height="1" fill="#000000"/><rect x="1" y="3" width="1" height="1" fill="#000000"/><rect x="2" y="3" width="1" height="1" fill="#FFFFFF"/><rect x="3" y="3" width="2" height="1" fill="#000000"/><rect x="8" y="3" width="1" height="1" fill="#000000"/><rect x="9" y="3" width="1" height="1" fill="#FFFFFF"/><rect x="10" y="3" width="2" height="1" fill="#000000"/><rect x="1" y="4" width="1" height="1" fill="#000000"/><rect x="2" y="4" width="1" height="1" fill="#FFFFFF"/><rect x="3" y="4" width="3" height="1" fill="#000000"/><rect x="7" y="4" width="2" height="1" fill="#000000"/><rect x="9" y="4" width="1" height="1" fill="#FFFFFF"/><rect x="10" y="4" width="2" height="1" fill="#000000"/><rect x="0" y="5" width="2" height="1" fill="#000000"/><rect x="2" y="5" width="1" height="1" fill="#FFFFFF"/><rect x="3" y="5" width="6" height="1" fill="#000000"/><rect x="9" y="5" width="1" height="1" fill="#FFFFFF"/><rect x="10" y="5" width="3" height="1" fill="#000000"/><rect x="0" y="6" width="1" height="1" fill="#000000"/><rect x="1" y="6" width="1" height="1" fill="#FFFFFF"/><rect x="2" y="6" width="8" height="1" fill="#000000"/><rect x="10" y="6" width="1" height="1" fill="#FFFFFF"/><rect x="11" y="6" width="3" height="1" fill="#000000"/><rect x="0" y="7" width="1" height="1" fill="#000000"/><rect x="1" y="7" width="1" height="1" fill="#FFFFFF"/><rect x="2" y="7" width="4" height="1" fill="#000000"/><rect x="7" y="7" width="3" height="1" fill="#000000"/><rect x="10" y="7" width="1" height="1" fill="#FFFFFF"/><rect x="11" y="7" width="3" height="1" fill="#000000"/><rect x="0" y="8" width="1" height="1" fill="#000000"/><rect x="1" y="8" width="1" height="1" fill="#FFFFFF"/><rect x="2" y="8" width="4" height="1" fill="#000000"/><rect x="7" y="8" width="3" height="1" fill="#000000"/><rect x="10" y="8" width="1" height="1" fill="#FFFFFF"/><rect x="11" y="8" width="3" height="1" fill="#000000"/><rect x="0" y="9" width="6" height="1" fill="#000000"/><rect x="7" y="9" width="7" height="1" fill="#000000"/><rect x="0" y="10" width="1" height="1" fill="#000000"/><rect x="1" y="10" width="1" height="1" fill="#FFFFFF"/><rect x="2" y="10" width="4" height="1" fill="#000000"/><rect x="7" y="10" width="2" height="1" fill="#000000"/><rect x="9" y="10" width="1" height="1" fill="#FFFFFF"/><rect x="10" y="10" width="4" height="1" fill="#000000"/><rect x="0" y="11" width="6" height="1" fill="#000000"/><rect x="7" y="11" width="7" height="1" fill="#000000"/><rect x="0" y="12" width="6" height="1" fill="#000000"/><rect x="7" y="12" width="7" height="1" fill="#000000"/></svg>
<svg class="a" style="left:307px;top:46px" width="16" height="15" viewBox="0 0 16 15" shape-rendering="crispEdges"><rect x="2" y="0" width="1" height="1" fill="#000000"/><rect x="11" y="0" width="4" height="1" fill="#000000"/><rect x="1" y="1" width="1" height="1" fill="#000000"/><rect x="3" y="1" width="1" height="1" fill="#000000"/><rect x="12" y="1" width="3" height="1" fill="#000000"/><rect x="1" y="2" width="1" height="1" fill="#000000"/><rect x="3" y="2" width="1" height="1" fill="#000000"/><rect x="11" y="2" width="1" height="1" fill="#000000"/><rect x="13" y="2" width="2" height="1" fill="#000000"/><rect x="0" y="3" width="5" height="1" fill="#000000"/><rect x="10" y="3" width="1" height="1" fill="#000000"/><rect x="14" y="3" width="1" height="1" fill="#000000"/><rect x="0" y="4" width="1" height="1" fill="#000000"/><rect x="4" y="4" width="1" height="1" fill="#000000"/><rect x="0" y="5" width="1" height="1" fill="#000000"/><rect x="4" y="5" width="1" height="1" fill="#000000"/><rect x="9" y="5" width="1" height="1" fill="#000000"/><rect x="1" y="7" width="1" height="1" fill="#000000"/><rect x="9" y="7" width="1" height="1" fill="#000000"/><rect x="1" y="9" width="1" height="1" fill="#000000"/><rect x="9" y="9" width="1" height="1" fill="#000000"/><rect x="11" y="9" width="3" height="1" fill="#808080"/><rect x="7" y="10" width="1" height="1" fill="#000000"/><rect x="11" y="10" width="1" height="1" fill="#808080"/><rect x="14" y="10" width="1" height="1" fill="#808080"/><rect x="2" y="11" width="1" height="1" fill="#000000"/><rect x="7" y="11" width="2" height="1" fill="#000000"/><rect x="11" y="11" width="3" height="1" fill="#808080"/><rect x="3" y="12" width="1" height="1" fill="#000000"/><rect x="5" y="12" width="1" height="1" fill="#000000"/><rect x="7" y="12" width="3" height="1" fill="#000000"/><rect x="11" y="12" width="1" height="1" fill="#808080"/><rect x="14" y="12" width="1" height="1" fill="#808080"/><rect x="7" y="13" width="2" height="1" fill="#000000"/><rect x="11" y="13" width="1" height="1" fill="#808080"/><rect x="14" y="13" width="1" height="1" fill="#808080"/><rect x="7" y="14" width="1" height="1" fill="#000000"/><rect x="11" y="14" width="3" height="1" fill="#808080"/></svg>
<span class="t" style="top:49px;font-size:11px;line-height:11px;color:#000;letter-spacing:-0.05px;left:332px;">Add to Workbook</span>
<svg class="a" style="left:421px;top:52px" width="5" height="3" viewBox="0 0 5 3" shape-rendering="crispEdges"><rect x="0" y="0" width="5" height="1" fill="#000000"/><rect x="1" y="1" width="3" height="1" fill="#000000"/><rect x="2" y="2" width="1" height="1" fill="#000000"/></svg>
<span class="t" style="top:49px;font-size:11px;line-height:11px;color:#000;letter-spacing:0.15px;left:435px;">Добавление в отчет</span>
<svg class="a" style="left:545px;top:52px" width="5" height="3" viewBox="0 0 5 3" shape-rendering="crispEdges"><rect x="0" y="0" width="5" height="1" fill="#000000"/><rect x="1" y="1" width="3" height="1" fill="#000000"/><rect x="2" y="2" width="1" height="1" fill="#000000"/></svg>
<div class="a " style="left:557px;top:43px;width:1px;height:22px;background:#808080;"></div>
<div class="a " style="left:558px;top:43px;width:1px;height:22px;background:#FFFFFF;"></div>
<svg class="a" style="left:564px;top:46px" width="16" height="15" viewBox="0 0 16 15" shape-rendering="crispEdges"><rect x="7" y="0" width="2" height="1" fill="#000000"/><rect x="6" y="1" width="1" height="1" fill="#000000"/><rect x="7" y="1" width="2" height="1" fill="#C000C0"/><rect x="9" y="1" width="2" height="1" fill="#000000"/><rect x="5" y="2" width="1" height="1" fill="#000000"/><rect x="6" y="2" width="5" height="1" fill="#C000C0"/><rect x="11" y="2" width="2" height="1" fill="#000000"/><rect x="4" y="3" width="1" height="1" fill="#000000"/><rect x="5" y="3" width="1" height="1" fill="#FFFFFF"/><rect x="6" y="3" width="2" height="1" fill="#C000C0"/><rect x="8" y="3" width="2" height="1" fill="#FFFF00"/><rect x="10" y="3" width="3" height="1" fill="#C000C0"/><rect x="13" y="3" width="2" height="1" fill="#000000"/><rect x="3" y="4" width="1" height="1" fill="#000000"/><rect x="4" y="4" width="1" height="1" fill="#FFFFFF"/><rect x="5" y="4" width="2" height="1" fill="#C000C0"/><rect x="7" y="4" width="1" height="1" fill="#FFFF00"/><rect x="8" y="4" width="2" height="1" fill="#C000C0"/><rect x="10" y="4" width="1" height="1" fill="#FFFF00"/><rect x="11" y="4" width="3" height="1" fill="#C000C0"/><rect x="14" y="4" width="1" height="1" fill="#000000"/><rect x="2" y="5" width="1" height="1" fill="#000000"/><rect x="3" y="5" width="1" height="1" fill="#FFFFFF"/><rect x="4" y="5" width="5" height="1" fill="#C000C0"/><rect x="9" y="5" width="1" height="1" fill="#FFFF00"/><rect x="10" y="5" width="3" height="1" fill="#C000C0"/><rect x="13" y="5" width="2" height="1" fill="#000000"/><rect x="1" y="6" width="1" height="1" fill="#000000"/><rect x="2" y="6" width="1" height="1" fill="#FFFFFF"/><rect x="3" y="6" width="5" height="1" fill="#C000C0"/><rect x="8" y="6" width="1" height="1" fill="#FFFF00"/><rect x="9" y="6" width="3" height="1" fill="#C000C0"/><rect x="12" y="6" width="1" height="1" fill="#000000"/><rect x="13" y="6" width="1" height="1" fill="#FFFFFF"/><rect x="14" y="6" width="1" height="1" fill="#000000"/><rect x="0" y="7" width="1" height="1" fill="#000000"/><rect x="1" y="7" width="10" height="1" fill="#C000C0"/><rect x="11" y="7" width="1" height="1" fill="#000000"/><rect x="12" y="7" width="2" height="1" fill="#FFFFFF"/><rect x="14" y="7" width="1" height="1" fill="#000000"/><rect x="0" y="8" width="1" height="1" fill="#000000"/><rect x="1" y="8" width="6" height="1" fill="#C000C0"/><rect x="7" y="8" width="1" height="1" fill="#FFFF00"/><rect x="8" y="8" width="2" height="1" fill="#C000C0"/><rect x="10" y="8" width="1" height="1" fill="#000000"/><rect x="11" y="8" width="2" height="1" fill="#FFFFFF"/><rect x="13" y="8" width="1" height="1" fill="#000000"/><rect x="0" y="9" width="1" height="1" fill="#000000"/><rect x="1" y="9" width="1" height="1" fill="#FFFFFF"/><rect x="2" y="9" width="7" height="1" fill="#C000C0"/><rect x="9" y="9" width="1" height="1" fill="#000000"/><rect x="10" y="9" width="2" height="1" fill="#FFFFFF"/><rect x="12" y="9" width="1" height="1" fill="#000000"/><rect x="0" y="10" width="1" height="1" fill="#000000"/><rect x="1" y="10" width="1" height="1" fill="#C000C0"/><rect x="2" y="10" width="2" height="1" fill="#FFFFFF"/><rect x="4" y="10" width="4" height="1" fill="#C000C0"/><rect x="8" y="10" width="1" height="1" fill="#000000"/><rect x="9" y="10" width="2" height="1" fill="#FFFFFF"/><rect x="11" y="10" width="1" height="1" fill="#000000"/><rect x="1" y="11" width="1" height="1" fill="#000000"/><rect x="2" y="11" width="2" height="1" fill="#C000C0"/><rect x="4" y="11" width="2" height="1" fill="#FFFFFF"/><rect x="6" y="11" width="1" height="1" fill="#C000C0"/><rect x="7" y="11" width="1" height="1" fill="#000000"/><rect x="8" y="11" width="2" height="1" fill="#FFFFFF"/><rect x="10" y="11" width="1" height="1" fill="#000000"/><rect x="2" y="12" width="2" height="1" fill="#000000"/><rect x="4" y="12" width="2" height="1" fill="#C000C0"/><rect x="6" y="12" width="2" height="1" fill="#FFFFFF"/><rect x="8" y="12" width="1" height="1" fill="#000000"/><rect x="4" y="13" width="2" height="1" fill="#000000"/><rect x="6" y="13" width="1" height="1" fill="#C000C0"/><rect x="7" y="13" width="1" height="1" fill="#000000"/><rect x="6" y="14" width="1" height="1" fill="#000000"/></svg>
<svg class="a" style="left:586px;top:47px" width="17" height="14" viewBox="0 0 17 14" shape-rendering="crispEdges"><rect x="0" y="0" width="1" height="1" fill="#000000"/><rect x="10" y="0" width="5" height="1" fill="#0000D0"/><rect x="0" y="1" width="2" height="1" fill="#000000"/><rect x="9" y="1" width="2" height="1" fill="#0000D0"/><rect x="14" y="1" width="2" height="1" fill="#0000D0"/><rect x="0" y="2" width="3" height="1" fill="#000000"/><rect x="9" y="2" width="2" height="1" fill="#0000D0"/><rect x="14" y="2" width="2" height="1" fill="#0000D0"/><rect x="0" y="3" width="4" height="1" fill="#000000"/><rect x="9" y="3" width="2" height="1" fill="#0000D0"/><rect x="14" y="3" width="2" height="1" fill="#0000D0"/><rect x="0" y="4" width="5" height="1" fill="#000000"/><rect x="13" y="4" width="3" height="1" fill="#0000D0"/><rect x="0" y="5" width="6" height="1" fill="#000000"/><rect x="12" y="5" width="3" height="1" fill="#0000D0"/><rect x="0" y="6" width="7" height="1" fill="#000000"/><rect x="11" y="6" width="3" height="1" fill="#0000D0"/><rect x="0" y="7" width="8" height="1" fill="#000000"/><rect x="11" y="7" width="2" height="1" fill="#0000D0"/><rect x="0" y="8" width="5" height="1" fill="#000000"/><rect x="11" y="8" width="2" height="1" fill="#0000D0"/><rect x="0" y="9" width="2" height="1" fill="#000000"/><rect x="3" y="9" width="2" height="1" fill="#000000"/><rect x="0" y="10" width="1" height="1" fill="#000000"/><rect x="4" y="10" width="2" height="1" fill="#000000"/><rect x="11" y="10" width="2" height="1" fill="#0000D0"/><rect x="4" y="11" width="2" height="1" fill="#000000"/><rect x="11" y="11" width="2" height="1" fill="#0000D0"/><rect x="5" y="12" width="2" height="1" fill="#000000"/><rect x="5" y="13" width="2" height="1" fill="#000000"/></svg>
<div class="a " style="left:12px;top:70px;width:154px;height:20px;background:#FFFFFF;box-shadow:inset -1px -1px 0 #FFFFFF,inset 1px 1px 0 #808080,inset -2px -2px 0 #D4D0C8,inset 2px 2px 0 #404040;"></div>
<div class="a " style="left:148px;top:72px;width:16px;height:16px;background:#D4D0C8;box-shadow:inset -1px -1px 0 #404040,inset 1px 1px 0 #D4D0C8,inset -2px -2px 0 #808080,inset 2px 2px 0 #FFFFFF;"></div>
<svg class="a" style="left:152px;top:77px" width="7" height="4" viewBox="0 0 7 4" shape-rendering="crispEdges"><rect x="0" y="0" width="7" height="1" fill="#000000"/><rect x="1" y="1" width="5" height="1" fill="#000000"/><rect x="2" y="2" width="3" height="1" fill="#000000"/><rect x="3" y="3" width="1" height="1" fill="#000000"/></svg>
<span class="t" style="top:74px;font-size:11px;line-height:11px;color:#000;left:18px;">Arial Cyr</span>
<div class="a " style="left:172px;top:70px;width:42px;height:20px;background:#FFFFFF;box-shadow:inset -1px -1px 0 #FFFFFF,inset 1px 1px 0 #808080,inset -2px -2px 0 #D4D0C8,inset 2px 2px 0 #404040;"></div>
<div class="a " style="left:196px;top:72px;width:16px;height:16px;background:#D4D0C8;box-shadow:inset -1px -1px 0 #404040,inset 1px 1px 0 #D4D0C8,inset -2px -2px 0 #808080,inset 2px 2px 0 #FFFFFF;"></div>
<svg class="a" style="left:200px;top:77px" width="7" height="4" viewBox="0 0 7 4" shape-rendering="crispEdges"><rect x="0" y="0" width="7" height="1" fill="#000000"/><rect x="1" y="1" width="5" height="1" fill="#000000"/><rect x="2" y="2" width="3" height="1" fill="#000000"/><rect x="3" y="3" width="1" height="1" fill="#000000"/></svg>
<span class="t" style="top:74px;font-size:11px;line-height:11px;color:#000;left:178px;">8</span>
<div class="a " style="left:220px;top:69px;width:1px;height:21px;background:#808080;"></div>
<div class="a " style="left:221px;top:69px;width:1px;height:21px;background:#FFFFFF;"></div>
<span class="t" style="top:72px;font-size:14px;line-height:14px;color:#000;font-weight:bold;font-family:'Liberation Serif',serif;left:230px;">B</span>
<span class="t" style="top:72px;font-size:14px;line-height:14px;color:#000;font-weight:bold;font-style:italic;font-family:'Liberation Serif',serif;left:252px;">I</span>
<span class="t" style="top:72px;font-size:14px;line-height:14px;color:#000;font-weight:bold;font-family:'Liberation Serif',serif;left:273px;">U</span>
<div class="a " style="left:274px;top:85px;width:9px;height:1px;background:#000000;"></div>
<div class="a " style="left:294px;top:69px;width:1px;height:21px;background:#808080;"></div>
<div class="a " style="left:295px;top:69px;width:1px;height:21px;background:#FFFFFF;"></div>
<div class="a " style="left:301px;top:74px;width:14px;height:1px;background:#000000;"></div>
<div class="a " style="left:301px;top:76px;width:14px;height:1px;background:#000000;"></div>
<div class="a " style="left:301px;top:78px;width:10px;height:1px;background:#000000;"></div>
<div class="a " style="left:301px;top:80px;width:14px;height:1px;background:#000000;"></div>
<div class="a " style="left:301px;top:82px;width:14px;height:1px;background:#000000;"></div>
<div class="a " style="left:301px;top:84px;width:10px;height:1px;background:#000000;"></div>
<div class="a " style="left:321px;top:69px;width:22px;height:21px;background:repeating-conic-gradient(#fff 0% 25%, #D4D0C8 0% 50%) 0 0/2px 2px;"></div>
<div class="a " style="left:321px;top:69px;width:22px;height:21px;box-shadow:inset -1px -1px 0 #FFFFFF,inset 1px 1px 0 #808080;"></div>
<div class="a " style="left:325px;top:74px;width:14px;height:1px;background:#000000;"></div>
<div class="a " style="left:327px;top:76px;width:10px;height:1px;background:#000000;"></div>
<div class="a " style="left:325px;top:78px;width:14px;height:1px;background:#000000;"></div>
<div class="a " style="left:327px;top:80px;width:10px;height:1px;background:#000000;"></div>
<div class="a " style="left:325px;top:82px;width:14px;height:1px;background:#000000;"></div>
<div class="a " style="left:327px;top:84px;width:10px;height:1px;background:#000000;"></div>
<div class="a " style="left:345px;top:74px;width:14px;height:1px;background:#000000;"></div>
<div class="a " style="left:345px;top:76px;width:14px;height:1px;background:#000000;"></div>
<div class="a " style="left:349px;top:78px;width:10px;height:1px;background:#000000;"></div>
<div class="a " style="left:345px;top:80px;width:14px;height:1px;background:#000000;"></div>
<div class="a " style="left:345px;top:82px;width:14px;height:1px;background:#000000;"></div>
<div class="a " style="left:349px;top:84px;width:10px;height:1px;background:#000000;"></div>
<div class="a " style="left:390px;top:69px;width:1px;height:21px;background:#808080;"></div>
<div class="a " style="left:391px;top:69px;width:1px;height:21px;background:#FFFFFF;"></div>
<div class="a " style="left:532px;top:69px;width:1px;height:21px;background:#808080;"></div>
<div class="a " style="left:533px;top:69px;width:1px;height:21px;background:#FFFFFF;"></div>
<div class="a " style="left:485px;top:69px;width:22px;height:21px;background:repeating-conic-gradient(#fff 0% 25%, #D4D0C8 0% 50%) 0 0/2px 2px;"></div>
<div class="a " style="left:485px;top:69px;width:22px;height:21px;box-shadow:inset -1px -1px 0 #FFFFFF,inset 1px 1px 0 #808080;"></div>
<div class="a " style="left:507px;top:69px;width:22px;height:21px;background:repeating-conic-gradient(#fff 0% 25%, #D4D0C8 0% 50%) 0 0/2px 2px;"></div>
<div class="a " style="left:507px;top:69px;width:22px;height:21px;box-shadow:inset -1px -1px 0 #FFFFFF,inset 1px 1px 0 #808080;"></div>
<div class="a " style="left:584px;top:69px;width:1px;height:21px;background:#808080;"></div>
<div class="a " style="left:585px;top:69px;width:1px;height:21px;background:#FFFFFF;"></div>
<div class="a " style="left:680px;top:69px;width:1px;height:21px;background:#808080;"></div>
<div class="a " style="left:681px;top:69px;width:1px;height:21px;background:#FFFFFF;"></div>
<span class="t" style="top:75px;font-size:11px;line-height:11px;color:#000;letter-spacing:-0.36px;left:734px;">Переменные</span>
<svg class="a" style="left:803px;top:79px" width="5" height="3" viewBox="0 0 5 3" shape-rendering="crispEdges"><rect x="0" y="0" width="5" height="1" fill="#000000"/><rect x="1" y="1" width="3" height="1" fill="#000000"/><rect x="2" y="2" width="1" height="1" fill="#000000"/></svg>
<span class="t" style="top:75px;font-size:11px;line-height:11px;color:#000;letter-spacing:-0.23px;left:817px;">Случаи</span>
<svg class="a" style="left:860px;top:79px" width="5" height="3" viewBox="0 0 5 3" shape-rendering="crispEdges"><rect x="0" y="0" width="5" height="1" fill="#000000"/><rect x="1" y="1" width="3" height="1" fill="#000000"/><rect x="2" y="2" width="1" height="1" fill="#000000"/></svg>
<span class="t" style="top:75px;font-size:10px;line-height:10px;color:#000;letter-spacing:-0.97px;left:710px;">x=?</span>
<svg class="a" style="left:416px;top:78px" width="5" height="3" viewBox="0 0 5 3" shape-rendering="crispEdges"><rect x="0" y="0" width="5" height="1" fill="#000000"/><rect x="1" y="1" width="3" height="1" fill="#000000"/><rect x="2" y="2" width="1" height="1" fill="#000000"/></svg>
<svg class="a" style="left:446px;top:78px" width="5" height="3" viewBox="0 0 5 3" shape-rendering="crispEdges"><rect x="0" y="0" width="5" height="1" fill="#000000"/><rect x="1" y="1" width="3" height="1" fill="#000000"/><rect x="2" y="2" width="1" height="1" fill="#000000"/></svg>
<svg class="a" style="left:476px;top:78px" width="5" height="3" viewBox="0 0 5 3" shape-rendering="crispEdges"><rect x="0" y="0" width="5" height="1" fill="#000000"/><rect x="1" y="1" width="3" height="1" fill="#000000"/><rect x="2" y="2" width="1" height="1" fill="#000000"/></svg>
<span class="t" style="top:70px;font-size:16px;line-height:16px;color:#0000D0;font-weight:bold;font-family:'Liberation Serif',serif;left:397px;">A</span>
<div class="a " style="left:398px;top:85px;width:14px;height:3px;background:#000000;"></div>
<div class="a " style="left:428px;top:85px;width:14px;height:3px;background:#000000;"></div>
<svg class="a" style="left:8px;top:100px" width="16" height="15" viewBox="0 0 16 15" shape-rendering="crispEdges"><rect x="0" y="0" width="16" height="1" fill="#000000"/><rect x="0" y="1" width="1" height="1" fill="#000000"/><rect x="1" y="1" width="14" height="1" fill="#FFFFFF"/><rect x="15" y="1" width="1" height="1" fill="#000000"/><rect x="0" y="2" width="1" height="1" fill="#000000"/><rect x="1" y="2" width="4" height="1" fill="#FFFFFF"/><rect x="5" y="2" width="3" height="1" fill="#000080"/><rect x="8" y="2" width="1" height="1" fill="#FFFFFF"/><rect x="9" y="2" width="2" height="1" fill="#000080"/><rect x="11" y="2" width="1" height="1" fill="#FFFFFF"/><rect x="12" y="2" width="2" height="1" fill="#000080"/><rect x="14" y="2" width="1" height="1" fill="#FFFFFF"/><rect x="15" y="2" width="1" height="1" fill="#000000"/><rect x="0" y="3" width="1" height="1" fill="#000000"/><rect x="1" y="3" width="14" height="1" fill="#FFFFFF"/><rect x="15" y="3" width="1" height="1" fill="#000000"/><rect x="0" y="4" width="1" height="1" fill="#000000"/><rect x="1" y="4" width="1" height="1" fill="#FFFFFF"/><rect x="2" y="4" width="2" height="1" fill="#000080"/><rect x="4" y="4" width="1" height="1" fill="#FFFFFF"/><rect x="5" y="4" width="3" height="1" fill="#808080"/><rect x="8" y="4" width="1" height="1" fill="#FFFFFF"/><rect x="9" y="4" width="2" height="1" fill="#808080"/><rect x="11" y="4" width="1" height="1" fill="#FFFFFF"/><rect x="12" y="4" width="2" height="1" fill="#808080"/><rect x="14" y="4" width="1" height="1" fill="#FFFFFF"/><rect x="15" y="4" width="1" height="1" fill="#000000"/><rect x="0" y="5" width="1" height="1" fill="#000000"/><rect x="1" y="5" width="14" height="1" fill="#FFFFFF"/><rect x="15" y="5" width="1" height="1" fill="#000000"/><rect x="0" y="6" width="1" height="1" fill="#000000"/><rect x="1" y="6" width="1" height="1" fill="#FFFFFF"/><rect x="2" y="6" width="2" height="1" fill="#000080"/><rect x="4" y="6" width="1" height="1" fill="#FFFFFF"/><rect x="5" y="6" width="3" height="1" fill="#808080"/><rect x="8" y="6" width="1" height="1" fill="#FFFFFF"/><rect x="9" y="6" width="2" height="1" fill="#808080"/><rect x="11" y="6" width="1" height="1" fill="#FFFFFF"/><rect x="12" y="6" width="2" height="1" fill="#808080"/><rect x="14" y="6" width="1" height="1" fill="#FFFFFF"/><rect x="15" y="6" width="1" height="1" fill="#000000"/><rect x="0" y="7" width="1" height="1" fill="#000000"/><rect x="1" y="7" width="14" height="1" fill="#FFFFFF"/><rect x="15" y="7" width="1" height="1" fill="#000000"/><rect x="0" y="8" width="1" height="1" fill="#000000"/><rect x="1" y="8" width="1" height="1" fill="#FFFFFF"/><rect x="2" y="8" width="2" height="1" fill="#000080"/><rect x="4" y="8" width="1" height="1" fill="#FFFFFF"/><rect x="5" y="8" width="3" height="1" fill="#808080"/><rect x="8" y="8" width="1" height="1" fill="#FFFFFF"/><rect x="9" y="8" width="2" height="1" fill="#808080"/><rect x="11" y="8" width="1" height="1" fill="#FFFFFF"/><rect x="12" y="8" width="2" height="1" fill="#808080"/><rect x="14" y="8" width="1" height="1" fill="#FFFFFF"/><rect x="15" y="8" width="1" height="1" fill="#000000"/><rect x="0" y="9" width="1" height="1" fill="#000000"/><rect x="1" y="9" width="14" height="1" fill="#FFFFFF"/><rect x="15" y="9" width="1" height="1" fill="#000000"/><rect x="0" y="10" width="1" height="1" fill="#000000"/><rect x="1" y="10" width="1" height="1" fill="#FFFFFF"/><rect x="2" y="10" width="2" height="1" fill="#000080"/><rect x="4" y="10" width="1" height="1" fill="#FFFFFF"/><rect x="5" y="10" width="3" height="1" fill="#808080"/><rect x="8" y="10" width="1" height="1" fill="#FFFFFF"/><rect x="9" y="10" width="2" height="1" fill="#808080"/><rect x="11" y="10" width="1" height="1" fill="#FFFFFF"/><rect x="12" y="10" width="2" height="1" fill="#808080"/><rect x="14" y="10" width="1" height="1" fill="#FFFFFF"/><rect x="15" y="10" width="1" height="1" fill="#000000"/><rect x="0" y="11" width="1" height="1" fill="#000000"/><rect x="1" y="11" width="14" height="1" fill="#FFFFFF"/><rect x="15" y="11" width="1" height="1" fill="#000000"/><rect x="0" y="12" width="1" height="1" fill="#000000"/><rect x="1" y="12" width="1" height="1" fill="#FFFFFF"/><rect x="2" y="12" width="2" height="1" fill="#000080"/><rect x="4" y="12" width="1" height="1" fill="#FFFFFF"/><rect x="5" y="12" width="3" height="1" fill="#808080"/><rect x="8" y="12" width="1" height="1" fill="#FFFFFF"/><rect x="9" y="12" width="2" height="1" fill="#808080"/><rect x="11" y="12" width="1" height="1" fill="#FFFFFF"/><rect x="12" y="12" width="2" height="1" fill="#808080"/><rect x="14" y="12" width="1" height="1" fill="#FFFFFF"/><rect x="15" y="12" width="1" height="1" fill="#000000"/><rect x="0" y="13" width="1" height="1" fill="#000000"/><rect x="1" y="13" width="14" height="1" fill="#FFFFFF"/><rect x="15" y="13" width="1" height="1" fill="#000000"/><rect x="0" y="14" width="16" height="1" fill="#000000"/></svg>
<svg class="a" style="left:940px;top:109px" width="6" height="2" viewBox="0 0 6 2" shape-rendering="crispEdges"><rect x="0" y="0" width="6" height="1" fill="#000000"/><rect x="0" y="1" width="6" height="1" fill="#000000"/></svg>
<svg class="a" style="left:955px;top:102px" width="9" height="9" viewBox="0 0 9 9" shape-rendering="crispEdges"><rect x="0" y="0" width="9" height="1" fill="#000000"/><rect x="0" y="1" width="9" height="1" fill="#000000"/><rect x="0" y="2" width="1" height="1" fill="#000000"/><rect x="8" y="2" width="1" height="1" fill="#000000"/><rect x="0" y="3" width="1" height="1" fill="#000000"/><rect x="8" y="3" width="1" height="1" fill="#000000"/><rect x="0" y="4" width="1" height="1" fill="#000000"/><rect x="8" y="4" width="1" height="1" fill="#000000"/><rect x="0" y="5" width="1" height="1" fill="#000000"/><rect x="8" y="5" width="1" height="1" fill="#000000"/><rect x="0" y="6" width="1" height="1" fill="#000000"/><rect x="8" y="6" width="1" height="1" fill="#000000"/><rect x="0" y="7" width="1" height="1" fill="#000000"/><rect x="8" y="7" width="1" height="1" fill="#000000"/><rect x="0" y="8" width="9" height="1" fill="#000000"/></svg>
<svg class="a" style="left:974px;top:103px" width="8" height="7" viewBox="0 0 8 7" shape-rendering="crispEdges"><rect x="0" y="0" width="2" height="1" fill="#000000"/><rect x="6" y="0" width="2" height="1" fill="#000000"/><rect x="1" y="1" width="2" height="1" fill="#000000"/><rect x="5" y="1" width="2" height="1" fill="#000000"/><rect x="2" y="2" width="4" height="1" fill="#000000"/><rect x="3" y="3" width="2" height="1" fill="#000000"/><rect x="2" y="4" width="4" height="1" fill="#000000"/><rect x="1" y="5" width="2" height="1" fill="#000000"/><rect x="5" y="5" width="2" height="1" fill="#000000"/><rect x="0" y="6" width="2" height="1" fill="#000000"/><rect x="6" y="6" width="2" height="1" fill="#000000"/></svg>
<svg class="a" style="left:407px;top:350px" width="16" height="16" viewBox="0 0 16 16" shape-rendering="crispEdges"><rect x="0" y="0" width="16" height="1" fill="#FFFFFF"/><rect x="0" y="1" width="11" height="1" fill="#0000FF"/><rect x="11" y="1" width="5" height="1" fill="#FFFFFF"/><rect x="0" y="2" width="10" height="1" fill="#FFFFFF"/><rect x="10" y="2" width="4" height="1" fill="#0000FF"/><rect x="14" y="2" width="2" height="1" fill="#FFFFFF"/><rect x="0" y="3" width="11" height="1" fill="#0000FF"/><rect x="11" y="3" width="2" height="1" fill="#FFFFFF"/><rect x="13" y="3" width="1" height="1" fill="#0000FF"/><rect x="14" y="3" width="2" height="1" fill="#FFFFFF"/><rect x="0" y="4" width="13" height="1" fill="#FFFFFF"/><rect x="13" y="4" width="1" height="1" fill="#0000FF"/><rect x="14" y="4" width="2" height="1" fill="#FFFFFF"/><rect x="0" y="5" width="7" height="1" fill="#0000FF"/><rect x="7" y="5" width="6" height="1" fill="#FFFFFF"/><rect x="13" y="5" width="3" height="1" fill="#0000FF"/><rect x="0" y="6" width="6" height="1" fill="#FFFFFF"/><rect x="6" y="6" width="5" height="1" fill="#0000FF"/><rect x="11" y="6" width="2" height="1" fill="#FFFFFF"/><rect x="13" y="6" width="1" height="1" fill="#0000FF"/><rect x="14" y="6" width="2" height="1" fill="#FFFFFF"/><rect x="0" y="7" width="7" height="1" fill="#0000FF"/><rect x="7" y="7" width="3" height="1" fill="#FFFFFF"/><rect x="10" y="7" width="1" height="1" fill="#0000FF"/><rect x="11" y="7" width="2" height="1" fill="#FFFFFF"/><rect x="13" y="7" width="1" height="1" fill="#0000FF"/><rect x="14" y="7" width="2" height="1" fill="#FFFFFF"/><rect x="0" y="8" width="10" height="1" fill="#FFFFFF"/><rect x="10" y="8" width="4" height="1" fill="#0000FF"/><rect x="14" y="8" width="2" height="1" fill="#FFFFFF"/><rect x="0" y="9" width="3" height="1" fill="#0000FF"/><rect x="3" y="9" width="7" height="1" fill="#FFFFFF"/><rect x="10" y="9" width="1" height="1" fill="#0000FF"/><rect x="11" y="9" width="5" height="1" fill="#FFFFFF"/><rect x="0" y="10" width="2" height="1" fill="#FFFFFF"/><rect x="2" y="10" width="4" height="1" fill="#0000FF"/><rect x="6" y="10" width="4" height="1" fill="#FFFFFF"/><rect x="10" y="10" width="1" height="1" fill="#0000FF"/><rect x="11" y="10" width="5" height="1" fill="#FFFFFF"/><rect x="0" y="11" width="3" height="1" fill="#0000FF"/><rect x="3" y="11" width="2" height="1" fill="#FFFFFF"/><rect x="5" y="11" width="6" height="1" fill="#0000FF"/><rect x="11" y="11" width="5" height="1" fill="#FFFFFF"/><rect x="0" y="12" width="5" height="1" fill="#FFFFFF"/><rect x="5" y="12" width="1" height="1" fill="#0000FF"/><rect x="6" y="12" width="10" height="1" fill="#FFFFFF"/><rect x="0" y="13" width="3" height="1" fill="#0000FF"/><rect x="3" y="13" width="2" height="1" fill="#FFFFFF"/><rect x="5" y="13" width="1" height="1" fill="#0000FF"/><rect x="6" y="13" width="10" height="1" fill="#FFFFFF"/><rect x="0" y="14" width="2" height="1" fill="#FFFFFF"/><rect x="2" y="14" width="4" height="1" fill="#0000FF"/><rect x="6" y="14" width="10" height="1" fill="#FFFFFF"/><rect x="0" y="15" width="3" height="1" fill="#0000FF"/><rect x="3" y="15" width="13" height="1" fill="#FFFFFF"/></svg>
<svg class="a" style="left:831px;top:353px" width="6" height="9" viewBox="0 0 6 9" shape-rendering="crispEdges"><rect x="1" y="0" width="4" height="1" fill="#000000"/><rect x="0" y="1" width="2" height="1" fill="#000000"/><rect x="4" y="1" width="2" height="1" fill="#000000"/><rect x="0" y="2" width="2" height="1" fill="#000000"/><rect x="4" y="2" width="2" height="1" fill="#000000"/><rect x="3" y="3" width="2" height="1" fill="#000000"/><rect x="2" y="4" width="2" height="1" fill="#000000"/><rect x="2" y="5" width="2" height="1" fill="#000000"/><rect x="2" y="7" width="2" height="1" fill="#000000"/><rect x="2" y="8" width="2" height="1" fill="#000000"/></svg>
<svg class="a" style="left:846px;top:360px" width="6" height="2" viewBox="0 0 6 2" shape-rendering="crispEdges"><rect x="0" y="0" width="6" height="1" fill="#000000"/><rect x="0" y="1" width="6" height="1" fill="#000000"/></svg>
<svg class="a" style="left:862px;top:354px" width="8" height="7" viewBox="0 0 8 7" shape-rendering="crispEdges"><rect x="0" y="0" width="2" height="1" fill="#000000"/><rect x="6" y="0" width="2" height="1" fill="#000000"/><rect x="1" y="1" width="2" height="1" fill="#000000"/><rect x="5" y="1" width="2" height="1" fill="#000000"/><rect x="2" y="2" width="4" height="1" fill="#000000"/><rect x="3" y="3" width="2" height="1" fill="#000000"/><rect x="2" y="4" width="4" height="1" fill="#000000"/><rect x="1" y="5" width="2" height="1" fill="#000000"/><rect x="5" y="5" width="2" height="1" fill="#000000"/><rect x="0" y="6" width="2" height="1" fill="#000000"/><rect x="6" y="6" width="2" height="1" fill="#000000"/></svg>
<svg class="a" style="left:781px;top:377px" width="6" height="9" viewBox="0 0 6 9" shape-rendering="crispEdges"><rect x="1" y="0" width="4" height="1" fill="#000000"/><rect x="0" y="1" width="2" height="1" fill="#000000"/><rect x="4" y="1" width="2" height="1" fill="#000000"/><rect x="0" y="2" width="2" height="1" fill="#000000"/><rect x="4" y="2" width="2" height="1" fill="#000000"/><rect x="3" y="3" width="2" height="1" fill="#000000"/><rect x="2" y="4" width="2" height="1" fill="#000000"/><rect x="2" y="5" width="2" height="1" fill="#000000"/><rect x="2" y="7" width="2" height="1" fill="#000000"/><rect x="2" y="8" width="2" height="1" fill="#000000"/></svg>
<svg class="a" style="left:798px;top:378px" width="8" height="7" viewBox="0 0 8 7" shape-rendering="crispEdges"><rect x="0" y="0" width="2" height="1" fill="#000000"/><rect x="6" y="0" width="2" height="1" fill="#000000"/><rect x="1" y="1" width="2" height="1" fill="#000000"/><rect x="5" y="1" width="2" height="1" fill="#000000"/><rect x="2" y="2" width="4" height="1" fill="#000000"/><rect x="3" y="3" width="2" height="1" fill="#000000"/><rect x="2" y="4" width="4" height="1" fill="#000000"/><rect x="1" y="5" width="2" height="1" fill="#000000"/><rect x="5" y="5" width="2" height="1" fill="#000000"/><rect x="0" y="6" width="2" height="1" fill="#000000"/><rect x="6" y="6" width="2" height="1" fill="#000000"/></svg>
<svg class="a" style="left:5px;top:957px" width="16" height="16" viewBox="0 0 16 16" shape-rendering="crispEdges"><rect x="0" y="0" width="16" height="1" fill="#000000"/><rect x="0" y="1" width="1" height="1" fill="#000000"/><rect x="1" y="1" width="2" height="1" fill="#FFFFFF"/><rect x="3" y="1" width="1" height="1" fill="#C0C0C0"/><rect x="4" y="1" width="2" height="1" fill="#FFFFFF"/><rect x="6" y="1" width="1" height="1" fill="#C0C0C0"/><rect x="7" y="1" width="2" height="1" fill="#FFFFFF"/><rect x="9" y="1" width="1" height="1" fill="#C0C0C0"/><rect x="10" y="1" width="2" height="1" fill="#FFFFFF"/><rect x="12" y="1" width="1" height="1" fill="#C0C0C0"/><rect x="13" y="1" width="2" height="1" fill="#FFFFFF"/><rect x="15" y="1" width="1" height="1" fill="#000000"/><rect x="0" y="2" width="1" height="1" fill="#000000"/><rect x="1" y="2" width="2" height="1" fill="#FFFFFF"/><rect x="3" y="2" width="1" height="1" fill="#C0C0C0"/><rect x="4" y="2" width="2" height="1" fill="#FFFFFF"/><rect x="6" y="2" width="1" height="1" fill="#C0C0C0"/><rect x="7" y="2" width="2" height="1" fill="#FFFFFF"/><rect x="9" y="2" width="1" height="1" fill="#C0C0C0"/><rect x="10" y="2" width="2" height="1" fill="#FFFFFF"/><rect x="12" y="2" width="1" height="1" fill="#C0C0C0"/><rect x="13" y="2" width="2" height="1" fill="#FFFFFF"/><rect x="15" y="2" width="1" height="1" fill="#000000"/><rect x="0" y="3" width="1" height="1" fill="#000000"/><rect x="1" y="3" width="6" height="1" fill="#C0C0C0"/><rect x="7" y="3" width="1" height="1" fill="#000000"/><rect x="8" y="3" width="7" height="1" fill="#C0C0C0"/><rect x="15" y="3" width="1" height="1" fill="#000000"/><rect x="0" y="4" width="1" height="1" fill="#000000"/><rect x="1" y="4" width="2" height="1" fill="#FFFFFF"/><rect x="3" y="4" width="1" height="1" fill="#C0C0C0"/><rect x="4" y="4" width="2" height="1" fill="#FFFFFF"/><rect x="6" y="4" width="1" height="1" fill="#000000"/><rect x="7" y="4" width="1" height="1" fill="#FFFFFF"/><rect x="8" y="4" width="1" height="1" fill="#000000"/><rect x="9" y="4" width="1" height="1" fill="#C0C0C0"/><rect x="10" y="4" width="2" height="1" fill="#FFFFFF"/><rect x="12" y="4" width="1" height="1" fill="#C0C0C0"/><rect x="13" y="4" width="2" height="1" fill="#FFFFFF"/><rect x="15" y="4" width="1" height="1" fill="#000000"/><rect x="0" y="5" width="1" height="1" fill="#000000"/><rect x="1" y="5" width="2" height="1" fill="#FFFFFF"/><rect x="3" y="5" width="1" height="1" fill="#C0C0C0"/><rect x="4" y="5" width="2" height="1" fill="#FFFFFF"/><rect x="6" y="5" width="1" height="1" fill="#000000"/><rect x="7" y="5" width="1" height="1" fill="#FFFFFF"/><rect x="8" y="5" width="1" height="1" fill="#000000"/><rect x="9" y="5" width="1" height="1" fill="#C0C0C0"/><rect x="10" y="5" width="2" height="1" fill="#FFFFFF"/><rect x="12" y="5" width="1" height="1" fill="#C0C0C0"/><rect x="13" y="5" width="2" height="1" fill="#FFFFFF"/><rect x="15" y="5" width="1" height="1" fill="#000000"/><rect x="0" y="6" width="1" height="1" fill="#000000"/><rect x="1" y="6" width="4" height="1" fill="#C0C0C0"/><rect x="5" y="6" width="1" height="1" fill="#000000"/><rect x="6" y="6" width="2" height="1" fill="#C0C0C0"/><rect x="8" y="6" width="1" height="1" fill="#000000"/><rect x="9" y="6" width="6" height="1" fill="#C0C0C0"/><rect x="15" y="6" width="1" height="1" fill="#000000"/><rect x="0" y="7" width="1" height="1" fill="#000000"/><rect x="1" y="7" width="2" height="1" fill="#FFFFFF"/><rect x="3" y="7" width="1" height="1" fill="#C0C0C0"/><rect x="4" y="7" width="1" height="1" fill="#FFFFFF"/><rect x="5" y="7" width="1" height="1" fill="#000000"/><rect x="6" y="7" width="1" height="1" fill="#C0C0C0"/><rect x="7" y="7" width="2" height="1" fill="#FFFFFF"/><rect x="9" y="7" width="1" height="1" fill="#000000"/><rect x="10" y="7" width="2" height="1" fill="#FFFFFF"/><rect x="12" y="7" width="1" height="1" fill="#C0C0C0"/><rect x="13" y="7" width="2" height="1" fill="#FFFFFF"/><rect x="15" y="7" width="1" height="1" fill="#000000"/><rect x="0" y="8" width="1" height="1" fill="#000000"/><rect x="1" y="8" width="2" height="1" fill="#FFFFFF"/><rect x="3" y="8" width="1" height="1" fill="#C0C0C0"/><rect x="4" y="8" width="1" height="1" fill="#FFFFFF"/><rect x="5" y="8" width="1" height="1" fill="#000000"/><rect x="6" y="8" width="1" height="1" fill="#C0C0C0"/><rect x="7" y="8" width="2" height="1" fill="#FFFFFF"/><rect x="9" y="8" width="1" height="1" fill="#000000"/><rect x="10" y="8" width="2" height="1" fill="#FFFFFF"/><rect x="12" y="8" width="1" height="1" fill="#000000"/><rect x="13" y="8" width="2" height="1" fill="#FFFFFF"/><rect x="15" y="8" width="1" height="1" fill="#000000"/><rect x="0" y="9" width="1" height="1" fill="#000000"/><rect x="1" y="9" width="3" height="1" fill="#C0C0C0"/><rect x="4" y="9" width="1" height="1" fill="#000000"/><rect x="5" y="9" width="4" height="1" fill="#C0C0C0"/><rect x="9" y="9" width="1" height="1" fill="#000000"/><rect x="10" y="9" width="1" height="1" fill="#C0C0C0"/><rect x="11" y="9" width="1" height="1" fill="#000000"/><rect x="12" y="9" width="1" height="1" fill="#C0C0C0"/><rect x="13" y="9" width="1" height="1" fill="#000000"/><rect x="14" y="9" width="1" height="1" fill="#C0C0C0"/><rect x="15" y="9" width="1" height="1" fill="#000000"/><rect x="0" y="10" width="1" height="1" fill="#000000"/><rect x="1" y="10" width="2" height="1" fill="#FFFFFF"/><rect x="3" y="10" width="1" height="1" fill="#C0C0C0"/><rect x="4" y="10" width="1" height="1" fill="#000000"/><rect x="5" y="10" width="1" height="1" fill="#FFFFFF"/><rect x="6" y="10" width="1" height="1" fill="#C0C0C0"/><rect x="7" y="10" width="2" height="1" fill="#FFFFFF"/><rect x="9" y="10" width="1" height="1" fill="#000000"/><rect x="10" y="10" width="1" height="1" fill="#C0C0C0"/><rect x="11" y="10" width="1" height="1" fill="#000000"/><rect x="12" y="10" width="1" height="1" fill="#C0C0C0"/><rect x="13" y="10" width="1" height="1" fill="#000000"/><rect x="14" y="10" width="1" height="1" fill="#FFFFFF"/><rect x="15" y="10" width="1" height="1" fill="#000000"/><rect x="0" y="11" width="1" height="1" fill="#000000"/><rect x="1" y="11" width="2" height="1" fill="#FFFFFF"/><rect x="3" y="11" width="1" height="1" fill="#C0C0C0"/><rect x="4" y="11" width="1" height="1" fill="#000000"/><rect x="5" y="11" width="1" height="1" fill="#FFFFFF"/><rect x="6" y="11" width="1" height="1" fill="#C0C0C0"/><rect x="7" y="11" width="2" height="1" fill="#FFFFFF"/><rect x="9" y="11" width="1" height="1" fill="#C0C0C0"/><rect x="10" y="11" width="1" height="1" fill="#000000"/><rect x="11" y="11" width="1" height="1" fill="#FFFFFF"/><rect x="12" y="11" width="1" height="1" fill="#C0C0C0"/><rect x="13" y="11" width="1" height="1" fill="#000000"/><rect x="14" y="11" width="1" height="1" fill="#FFFFFF"/><rect x="15" y="11" width="1" height="1" fill="#000000"/><rect x="0" y="12" width="1" height="1" fill="#000000"/><rect x="1" y="12" width="2" height="1" fill="#C0C0C0"/><rect x="3" y="12" width="1" height="1" fill="#000000"/><rect x="4" y="12" width="9" height="1" fill="#C0C0C0"/><rect x="13" y="12" width="1" height="1" fill="#000000"/><rect x="14" y="12" width="1" height="1" fill="#C0C0C0"/><rect x="15" y="12" width="1" height="1" fill="#000000"/><rect x="0" y="13" width="1" height="1" fill="#000000"/><rect x="1" y="13" width="2" height="1" fill="#FFFFFF"/><rect x="3" y="13" width="1" height="1" fill="#C0C0C0"/><rect x="4" y="13" width="2" height="1" fill="#FFFFFF"/><rect x="6" y="13" width="1" height="1" fill="#C0C0C0"/><rect x="7" y="13" width="2" height="1" fill="#FFFFFF"/><rect x="9" y="13" width="1" height="1" fill="#C0C0C0"/><rect x="10" y="13" width="2" height="1" fill="#FFFFFF"/><rect x="12" y="13" width="1" height="1" fill="#C0C0C0"/><rect x="13" y="13" width="2" height="1" fill="#FFFFFF"/><rect x="15" y="13" width="1" height="1" fill="#000000"/><rect x="0" y="14" width="1" height="1" fill="#000000"/><rect x="1" y="14" width="2" height="1" fill="#FFFFFF"/><rect x="3" y="14" width="1" height="1" fill="#C0C0C0"/><rect x="4" y="14" width="2" height="1" fill="#FFFFFF"/><rect x="6" y="14" width="1" height="1" fill="#C0C0C0"/><rect x="7" y="14" width="2" height="1" fill="#FFFFFF"/><rect x="9" y="14" width="1" height="1" fill="#C0C0C0"/><rect x="10" y="14" width="2" height="1" fill="#FFFFFF"/><rect x="12" y="14" width="1" height="1" fill="#C0C0C0"/><rect x="13" y="14" width="2" height="1" fill="#FFFFFF"/><rect x="15" y="14" width="1" height="1" fill="#000000"/><rect x="0" y="15" width="16" height="1" fill="#000000"/></svg>
<svg class="a" style="left:32px;top:957px" width="16" height="16" viewBox="0 0 16 16" shape-rendering="crispEdges"><rect x="0" y="0" width="16" height="1" fill="#FFFFFF"/><rect x="0" y="1" width="11" height="1" fill="#0000FF"/><rect x="11" y="1" width="5" height="1" fill="#FFFFFF"/><rect x="0" y="2" width="10" height="1" fill="#FFFFFF"/><rect x="10" y="2" width="4" height="1" fill="#0000FF"/><rect x="14" y="2" width="2" height="1" fill="#FFFFFF"/><rect x="0" y="3" width="11" height="1" fill="#0000FF"/><rect x="11" y="3" width="2" height="1" fill="#FFFFFF"/><rect x="13" y="3" width="1" height="1" fill="#0000FF"/><rect x="14" y="3" width="2" height="1" fill="#FFFFFF"/><rect x="0" y="4" width="13" height="1" fill="#FFFFFF"/><rect x="13" y="4" width="1" height="1" fill="#0000FF"/><rect x="14" y="4" width="2" height="1" fill="#FFFFFF"/><rect x="0" y="5" width="7" height="1" fill="#0000FF"/><rect x="7" y="5" width="6" height="1" fill="#FFFFFF"/><rect x="13" y="5" width="3" height="1" fill="#0000FF"/><rect x="0" y="6" width="6" height="1" fill="#FFFFFF"/><rect x="6" y="6" width="5" height="1" fill="#0000FF"/><rect x="11" y="6" width="2" height="1" fill="#FFFFFF"/><rect x="13" y="6" width="1" height="1" fill="#0000FF"/><rect x="14" y="6" width="2" height="1" fill="#FFFFFF"/><rect x="0" y="7" width="7" height="1" fill="#0000FF"/><rect x="7" y="7" width="3" height="1" fill="#FFFFFF"/><rect x="10" y="7" width="1" height="1" fill="#0000FF"/><rect x="11" y="7" width="2" height="1" fill="#FFFFFF"/><rect x="13" y="7" width="1" height="1" fill="#0000FF"/><rect x="14" y="7" width="2" height="1" fill="#FFFFFF"/><rect x="0" y="8" width="10" height="1" fill="#FFFFFF"/><rect x="10" y="8" width="4" height="1" fill="#0000FF"/><rect x="14" y="8" width="2" height="1" fill="#FFFFFF"/><rect x="0" y="9" width="3" height="1" fill="#0000FF"/><rect x="3" y="9" width="7" height="1" fill="#FFFFFF"/><rect x="10" y="9" width="1" height="1" fill="#0000FF"/><rect x="11" y="9" width="5" height="1" fill="#FFFFFF"/><rect x="0" y="10" width="2" height="1" fill="#FFFFFF"/><rect x="2" y="10" width="4" height="1" fill="#0000FF"/><rect x="6" y="10" width="4" height="1" fill="#FFFFFF"/><rect x="10" y="10" width="1" height="1" fill="#0000FF"/><rect x="11" y="10" width="5" height="1" fill="#FFFFFF"/><rect x="0" y="11" width="3" height="1" fill="#0000FF"/><rect x="3" y="11" width="2" height="1" fill="#FFFFFF"/><rect x="5" y="11" width="6" height="1" fill="#0000FF"/><rect x="11" y="11" width="5" height="1" fill="#FFFFFF"/><rect x="0" y="12" width="5" height="1" fill="#FFFFFF"/><rect x="5" y="12" width="1" height="1" fill="#0000FF"/><rect x="6" y="12" width="10" height="1" fill="#FFFFFF"/><rect x="0" y="13" width="3" height="1" fill="#0000FF"/><rect x="3" y="13" width="2" height="1" fill="#FFFFFF"/><rect x="5" y="13" width="1" height="1" fill="#0000FF"/><rect x="6" y="13" width="10" height="1" fill="#FFFFFF"/><rect x="0" y="14" width="2" height="1" fill="#FFFFFF"/><rect x="2" y="14" width="4" height="1" fill="#0000FF"/><rect x="6" y="14" width="10" height="1" fill="#FFFFFF"/><rect x="0" y="15" width="3" height="1" fill="#0000FF"/><rect x="3" y="15" width="13" height="1" fill="#FFFFFF"/></svg>
<svg class="a" style="left:647px;top:1004px" width="16" height="16" viewBox="0 0 16 16" shape-rendering="crispEdges"><rect x="0" y="0" width="16" height="1" fill="#000000"/><rect x="0" y="1" width="1" height="1" fill="#000000"/><rect x="1" y="1" width="2" height="1" fill="#FFFFFF"/><rect x="3" y="1" width="1" height="1" fill="#C0C0C0"/><rect x="4" y="1" width="2" height="1" fill="#FFFFFF"/><rect x="6" y="1" width="1" height="1" fill="#C0C0C0"/><rect x="7" y="1" width="2" height="1" fill="#FFFFFF"/><rect x="9" y="1" width="1" height="1" fill="#C0C0C0"/><rect x="10" y="1" width="2" height="1" fill="#FFFFFF"/><rect x="12" y="1" width="1" height="1" fill="#C0C0C0"/><rect x="13" y="1" width="2" height="1" fill="#FFFFFF"/><rect x="15" y="1" width="1" height="1" fill="#000000"/><rect x="0" y="2" width="1" height="1" fill="#000000"/><rect x="1" y="2" width="2" height="1" fill="#FFFFFF"/><rect x="3" y="2" width="1" height="1" fill="#C0C0C0"/><rect x="4" y="2" width="2" height="1" fill="#FFFFFF"/><rect x="6" y="2" width="1" height="1" fill="#C0C0C0"/><rect x="7" y="2" width="2" height="1" fill="#FFFFFF"/><rect x="9" y="2" width="1" height="1" fill="#C0C0C0"/><rect x="10" y="2" width="2" height="1" fill="#FFFFFF"/><rect x="12" y="2" width="1" height="1" fill="#C0C0C0"/><rect x="13" y="2" width="2" height="1" fill="#FFFFFF"/><rect x="15" y="2" width="1" height="1" fill="#000000"/><rect x="0" y="3" width="1" height="1" fill="#000000"/><rect x="1" y="3" width="6" height="1" fill="#C0C0C0"/><rect x="7" y="3" width="1" height="1" fill="#000000"/><rect x="8" y="3" width="7" height="1" fill="#C0C0C0"/><rect x="15" y="3" width="1" height="1" fill="#000000"/><rect x="0" y="4" width="1" height="1" fill="#000000"/><rect x="1" y="4" width="2" height="1" fill="#FFFFFF"/><rect x="3" y="4" width="1" height="1" fill="#C0C0C0"/><rect x="4" y="4" width="2" height="1" fill="#FFFFFF"/><rect x="6" y="4" width="1" height="1" fill="#000000"/><rect x="7" y="4" width="1" height="1" fill="#FFFFFF"/><rect x="8" y="4" width="1" height="1" fill="#000000"/><rect x="9" y="4" width="1" height="1" fill="#C0C0C0"/><rect x="10" y="4" width="2" height="1" fill="#FFFFFF"/><rect x="12" y="4" width="1" height="1" fill="#C0C0C0"/><rect x="13" y="4" width="2" height="1" fill="#FFFFFF"/><rect x="15" y="4" width="1" height="1" fill="#000000"/><rect x="0" y="5" width="1" height="1" fill="#000000"/><rect x="1" y="5" width="2" height="1" fill="#FFFFFF"/><rect x="3" y="5" width="1" height="1" fill="#C0C0C0"/><rect x="4" y="5" width="2" height="1" fill="#FFFFFF"/><rect x="6" y="5" width="1" height="1" fill="#000000"/><rect x="7" y="5" width="1" height="1" fill="#FFFFFF"/><rect x="8" y="5" width="1" height="1" fill="#000000"/><rect x="9" y="5" width="1" height="1" fill="#C0C0C0"/><rect x="10" y="5" width="2" height="1" fill="#FFFFFF"/><rect x="12" y="5" width="1" height="1" fill="#C0C0C0"/><rect x="13" y="5" width="2" height="1" fill="#FFFFFF"/><rect x="15" y="5" width="1" height="1" fill="#000000"/><rect x="0" y="6" width="1" height="1" fill="#000000"/><rect x="1" y="6" width="4" height="1" fill="#C0C0C0"/><rect x="5" y="6" width="1" height="1" fill="#000000"/><rect x="6" y="6" width="2" height="1" fill="#C0C0C0"/><rect x="8" y="6" width="1" height="1" fill="#000000"/><rect x="9" y="6" width="6" height="1" fill="#C0C0C0"/><rect x="15" y="6" width="1" height="1" fill="#000000"/><rect x="0" y="7" width="1" height="1" fill="#000000"/><rect x="1" y="7" width="2" height="1" fill="#FFFFFF"/><rect x="3" y="7" width="1" height="1" fill="#C0C0C0"/><rect x="4" y="7" width="1" height="1" fill="#FFFFFF"/><rect x="5" y="7" width="1" height="1" fill="#000000"/><rect x="6" y="7" width="1" height="1" fill="#C0C0C0"/><rect x="7" y="7" width="2" height="1" fill="#FFFFFF"/><rect x="9" y="7" width="1" height="1" fill="#000000"/><rect x="10" y="7" width="2" height="1" fill="#FFFFFF"/><rect x="12" y="7" width="1" height="1" fill="#C0C0C0"/><rect x="13" y="7" width="2" height="1" fill="#FFFFFF"/><rect x="15" y="7" width="1" height="1" fill="#000000"/><rect x="0" y="8" width="1" height="1" fill="#000000"/><rect x="1" y="8" width="2" height="1" fill="#FFFFFF"/><rect x="3" y="8" width="1" height="1" fill="#C0C0C0"/><rect x="4" y="8" width="1" height="1" fill="#FFFFFF"/><rect x="5" y="8" width="1" height="1" fill="#000000"/><rect x="6" y="8" width="1" height="1" fill="#C0C0C0"/><rect x="7" y="8" width="2" height="1" fill="#FFFFFF"/><rect x="9" y="8" width="1" height="1" fill="#000000"/><rect x="10" y="8" width="2" height="1" fill="#FFFFFF"/><rect x="12" y="8" width="1" height="1" fill="#000000"/><rect x="13" y="8" width="2" height="1" fill="#FFFFFF"/><rect x="15" y="8" width="1" height="1" fill="#000000"/><rect x="0" y="9" width="1" height="1" fill="#000000"/><rect x="1" y="9" width="3" height="1" fill="#C0C0C0"/><rect x="4" y="9" width="1" height="1" fill="#000000"/><rect x="5" y="9" width="4" height="1" fill="#C0C0C0"/><rect x="9" y="9" width="1" height="1" fill="#000000"/><rect x="10" y="9" width="1" height="1" fill="#C0C0C0"/><rect x="11" y="9" width="1" height="1" fill="#000000"/><rect x="12" y="9" width="1" height="1" fill="#C0C0C0"/><rect x="13" y="9" width="1" height="1" fill="#000000"/><rect x="14" y="9" width="1" height="1" fill="#C0C0C0"/><rect x="15" y="9" width="1" height="1" fill="#000000"/><rect x="0" y="10" width="1" height="1" fill="#000000"/><rect x="1" y="10" width="2" height="1" fill="#FFFFFF"/><rect x="3" y="10" width="1" height="1" fill="#C0C0C0"/><rect x="4" y="10" width="1" height="1" fill="#000000"/><rect x="5" y="10" width="1" height="1" fill="#FFFFFF"/><rect x="6" y="10" width="1" height="1" fill="#C0C0C0"/><rect x="7" y="10" width="2" height="1" fill="#FFFFFF"/><rect x="9" y="10" width="1" height="1" fill="#000000"/><rect x="10" y="10" width="1" height="1" fill="#C0C0C0"/><rect x="11" y="10" width="1" height="1" fill="#000000"/><rect x="12" y="10" width="1" height="1" fill="#C0C0C0"/><rect x="13" y="10" width="1" height="1" fill="#000000"/><rect x="14" y="10" width="1" height="1" fill="#FFFFFF"/><rect x="15" y="10" width="1" height="1" fill="#000000"/><rect x="0" y="11" width="1" height="1" fill="#000000"/><rect x="1" y="11" width="2" height="1" fill="#FFFFFF"/><rect x="3" y="11" width="1" height="1" fill="#C0C0C0"/><rect x="4" y="11" width="1" height="1" fill="#000000"/><rect x="5" y="11" width="1" height="1" fill="#FFFFFF"/><rect x="6" y="11" width="1" height="1" fill="#C0C0C0"/><rect x="7" y="11" width="2" height="1" fill="#FFFFFF"/><rect x="9" y="11" width="1" height="1" fill="#C0C0C0"/><rect x="10" y="11" width="1" height="1" fill="#000000"/><rect x="11" y="11" width="1" height="1" fill="#FFFFFF"/><rect x="12" y="11" width="1" height="1" fill="#C0C0C0"/><rect x="13" y="11" width="1" height="1" fill="#000000"/><rect x="14" y="11" width="1" height="1" fill="#FFFFFF"/><rect x="15" y="11" width="1" height="1" fill="#000000"/><rect x="0" y="12" width="1" height="1" fill="#000000"/><rect x="1" y="12" width="2" height="1" fill="#C0C0C0"/><rect x="3" y="12" width="1" height="1" fill="#000000"/><rect x="4" y="12" width="9" height="1" fill="#C0C0C0"/><rect x="13" y="12" width="1" height="1" fill="#000000"/><rect x="14" y="12" width="1" height="1" fill="#C0C0C0"/><rect x="15" y="12" width="1" height="1" fill="#000000"/><rect x="0" y="13" width="1" height="1" fill="#000000"/><rect x="1" y="13" width="2" height="1" fill="#FFFFFF"/><rect x="3" y="13" width="1" height="1" fill="#C0C0C0"/><rect x="4" y="13" width="2" height="1" fill="#FFFFFF"/><rect x="6" y="13" width="1" height="1" fill="#C0C0C0"/><rect x="7" y="13" width="2" height="1" fill="#FFFFFF"/><rect x="9" y="13" width="1" height="1" fill="#C0C0C0"/><rect x="10" y="13" width="2" height="1" fill="#FFFFFF"/><rect x="12" y="13" width="1" height="1" fill="#C0C0C0"/><rect x="13" y="13" width="2" height="1" fill="#FFFFFF"/><rect x="15" y="13" width="1" height="1" fill="#000000"/><rect x="0" y="14" width="1" height="1" fill="#000000"/><rect x="1" y="14" width="2" height="1" fill="#FFFFFF"/><rect x="3" y="14" width="1" height="1" fill="#C0C0C0"/><rect x="4" y="14" width="2" height="1" fill="#FFFFFF"/><rect x="6" y="14" width="1" height="1" fill="#C0C0C0"/><rect x="7" y="14" width="2" height="1" fill="#FFFFFF"/><rect x="9" y="14" width="1" height="1" fill="#C0C0C0"/><rect x="10" y="14" width="2" height="1" fill="#FFFFFF"/><rect x="12" y="14" width="1" height="1" fill="#C0C0C0"/><rect x="13" y="14" width="2" height="1" fill="#FFFFFF"/><rect x="15" y="14" width="1" height="1" fill="#000000"/><rect x="0" y="15" width="16" height="1" fill="#000000"/></svg>
<svg class="a" style="left:974px;top:131px" width="7" height="4" viewBox="0 0 7 4" shape-rendering="crispEdges"><rect x="3" y="0" width="1" height="1" fill="#000000"/><rect x="2" y="1" width="3" height="1" fill="#000000"/><rect x="1" y="2" width="5" height="1" fill="#000000"/><rect x="0" y="3" width="7" height="1" fill="#000000"/></svg>
<svg class="a" style="left:974px;top:658px" width="7" height="4" viewBox="0 0 7 4" shape-rendering="crispEdges"><rect x="0" y="0" width="7" height="1" fill="#000000"/><rect x="1" y="1" width="5" height="1" fill="#000000"/><rect x="2" y="2" width="3" height="1" fill="#000000"/><rect x="3" y="3" width="1" height="1" fill="#000000"/></svg>
<svg class="a" style="left:961px;top:673px" width="4" height="7" viewBox="0 0 4 7" shape-rendering="crispEdges"><rect x="0" y="0" width="1" height="1" fill="#FFFFFF"/><rect x="0" y="1" width="2" height="1" fill="#FFFFFF"/><rect x="0" y="2" width="3" height="1" fill="#FFFFFF"/><rect x="0" y="3" width="4" height="1" fill="#FFFFFF"/><rect x="0" y="4" width="3" height="1" fill="#FFFFFF"/><rect x="0" y="5" width="2" height="1" fill="#FFFFFF"/><rect x="0" y="6" width="1" height="1" fill="#FFFFFF"/></svg>
<svg class="a" style="left:960px;top:672px" width="4" height="7" viewBox="0 0 4 7" shape-rendering="crispEdges"><rect x="0" y="0" width="1" height="1" fill="#808080"/><rect x="0" y="1" width="2" height="1" fill="#808080"/><rect x="0" y="2" width="3" height="1" fill="#808080"/><rect x="0" y="3" width="4" height="1" fill="#808080"/><rect x="0" y="4" width="3" height="1" fill="#808080"/><rect x="0" y="5" width="2" height="1" fill="#808080"/><rect x="0" y="6" width="1" height="1" fill="#808080"/></svg>
<svg class="a" style="left:21px;top:673px" width="4" height="7" viewBox="0 0 4 7" shape-rendering="crispEdges"><rect x="3" y="0" width="1" height="1" fill="#FFFFFF"/><rect x="2" y="1" width="2" height="1" fill="#FFFFFF"/><rect x="1" y="2" width="3" height="1" fill="#FFFFFF"/><rect x="0" y="3" width="4" height="1" fill="#FFFFFF"/><rect x="1" y="4" width="3" height="1" fill="#FFFFFF"/><rect x="2" y="5" width="2" height="1" fill="#FFFFFF"/><rect x="3" y="6" width="1" height="1" fill="#FFFFFF"/></svg>
<svg class="a" style="left:20px;top:672px" width="4" height="7" viewBox="0 0 4 7" shape-rendering="crispEdges"><rect x="3" y="0" width="1" height="1" fill="#808080"/><rect x="2" y="1" width="2" height="1" fill="#808080"/><rect x="1" y="2" width="3" height="1" fill="#808080"/><rect x="0" y="3" width="4" height="1" fill="#808080"/><rect x="1" y="4" width="3" height="1" fill="#808080"/><rect x="2" y="5" width="2" height="1" fill="#808080"/><rect x="3" y="6" width="1" height="1" fill="#808080"/></svg>
<svg class="a" style="left:367px;top:73px" width="17" height="14" viewBox="0 0 17 14" shape-rendering="crispEdges"><rect x="7" y="0" width="6" height="1" fill="#000000"/><rect x="14" y="0" width="3" height="1" fill="#0000D0"/><rect x="6" y="1" width="1" height="1" fill="#000000"/><rect x="8" y="1" width="1" height="1" fill="#000000"/><rect x="13" y="1" width="1" height="1" fill="#000000"/><rect x="14" y="1" width="3" height="1" fill="#0000D0"/><rect x="5" y="2" width="1" height="1" fill="#000000"/><rect x="7" y="2" width="1" height="1" fill="#000000"/><rect x="9" y="2" width="1" height="1" fill="#000000"/><rect x="13" y="2" width="1" height="1" fill="#000000"/><rect x="14" y="2" width="3" height="1" fill="#0000D0"/><rect x="0" y="3" width="5" height="1" fill="#000000"/><rect x="6" y="3" width="1" height="1" fill="#000000"/><rect x="8" y="3" width="1" height="1" fill="#000000"/><rect x="10" y="3" width="1" height="1" fill="#000000"/><rect x="13" y="3" width="1" height="1" fill="#000000"/><rect x="14" y="3" width="3" height="1" fill="#0000D0"/><rect x="0" y="4" width="1" height="1" fill="#000000"/><rect x="1" y="4" width="2" height="1" fill="#FFFFFF"/><rect x="3" y="4" width="1" height="1" fill="#000000"/><rect x="5" y="4" width="1" height="1" fill="#000000"/><rect x="7" y="4" width="1" height="1" fill="#000000"/><rect x="9" y="4" width="1" height="1" fill="#000000"/><rect x="11" y="4" width="3" height="1" fill="#000000"/><rect x="15" y="4" width="2" height="1" fill="#0000D0"/><rect x="0" y="5" width="1" height="1" fill="#000000"/><rect x="1" y="5" width="3" height="1" fill="#FFFFFF"/><rect x="4" y="5" width="1" height="1" fill="#000000"/><rect x="6" y="5" width="1" height="1" fill="#000000"/><rect x="8" y="5" width="1" height="1" fill="#000000"/><rect x="10" y="5" width="2" height="1" fill="#000000"/><rect x="15" y="5" width="2" height="1" fill="#0000D0"/><rect x="0" y="6" width="1" height="1" fill="#000000"/><rect x="1" y="6" width="4" height="1" fill="#FFFFFF"/><rect x="5" y="6" width="1" height="1" fill="#000000"/><rect x="7" y="6" width="1" height="1" fill="#000000"/><rect x="9" y="6" width="1" height="1" fill="#000000"/><rect x="10" y="6" width="1" height="1" fill="#FFFFFF"/><rect x="11" y="6" width="1" height="1" fill="#000000"/><rect x="16" y="6" width="1" height="1" fill="#0000D0"/><rect x="0" y="7" width="1" height="1" fill="#000000"/><rect x="1" y="7" width="1" height="1" fill="#FFFFFF"/><rect x="2" y="7" width="2" height="1" fill="#000000"/><rect x="4" y="7" width="2" height="1" fill="#FFFFFF"/><rect x="6" y="7" width="1" height="1" fill="#000000"/><rect x="8" y="7" width="1" height="1" fill="#000000"/><rect x="9" y="7" width="2" height="1" fill="#FFFFFF"/><rect x="11" y="7" width="1" height="1" fill="#000000"/><rect x="0" y="8" width="1" height="1" fill="#000000"/><rect x="1" y="8" width="6" height="1" fill="#FFFFFF"/><rect x="7" y="8" width="1" height="1" fill="#000000"/><rect x="8" y="8" width="3" height="1" fill="#FFFFFF"/><rect x="11" y="8" width="1" height="1" fill="#000000"/><rect x="0" y="9" width="1" height="1" fill="#000000"/><rect x="1" y="9" width="1" height="1" fill="#FFFFFF"/><rect x="2" y="9" width="2" height="1" fill="#000000"/><rect x="4" y="9" width="1" height="1" fill="#FFFFFF"/><rect x="5" y="9" width="4" height="1" fill="#000000"/><rect x="9" y="9" width="2" height="1" fill="#FFFFFF"/><rect x="11" y="9" width="1" height="1" fill="#000000"/><rect x="0" y="10" width="1" height="1" fill="#000000"/><rect x="1" y="10" width="10" height="1" fill="#FFFFFF"/><rect x="11" y="10" width="1" height="1" fill="#000000"/><rect x="0" y="11" width="1" height="1" fill="#000000"/><rect x="1" y="11" width="1" height="1" fill="#FFFFFF"/><rect x="2" y="11" width="2" height="1" fill="#000000"/><rect x="4" y="11" width="1" height="1" fill="#FFFFFF"/><rect x="5" y="11" width="4" height="1" fill="#000000"/><rect x="9" y="11" width="2" height="1" fill="#FFFFFF"/><rect x="11" y="11" width="1" height="1" fill="#000000"/><rect x="0" y="12" width="1" height="1" fill="#000000"/><rect x="1" y="12" width="10" height="1" fill="#FFFFFF"/><rect x="11" y="12" width="1" height="1" fill="#000000"/><rect x="0" y="13" width="12" height="1" fill="#000000"/></svg>
<svg class="a" style="left:428px;top:72px" width="11" height="11" viewBox="0 0 11 11" shape-rendering="crispEdges"><rect x="3" y="0" width="1" height="1" fill="#000000"/><rect x="3" y="1" width="2" height="1" fill="#000000"/><rect x="2" y="2" width="1" height="1" fill="#000000"/><rect x="4" y="2" width="2" height="1" fill="#000000"/><rect x="6" y="2" width="2" height="1" fill="#0000D0"/><rect x="1" y="3" width="1" height="1" fill="#000000"/><rect x="2" y="3" width="3" height="1" fill="#FFFFFF"/><rect x="5" y="3" width="1" height="1" fill="#000000"/><rect x="6" y="3" width="3" height="1" fill="#0000D0"/><rect x="0" y="4" width="1" height="1" fill="#000000"/><rect x="1" y="4" width="5" height="1" fill="#FFFFFF"/><rect x="6" y="4" width="1" height="1" fill="#000000"/><rect x="7" y="4" width="2" height="1" fill="#0000D0"/><rect x="1" y="5" width="1" height="1" fill="#000000"/><rect x="2" y="5" width="5" height="1" fill="#FFFFFF"/><rect x="7" y="5" width="1" height="1" fill="#000000"/><rect x="8" y="5" width="1" height="1" fill="#0000D0"/><rect x="2" y="6" width="1" height="1" fill="#000000"/><rect x="3" y="6" width="4" height="1" fill="#FFFFFF"/><rect x="7" y="6" width="1" height="1" fill="#000000"/><rect x="8" y="6" width="1" height="1" fill="#0000D0"/><rect x="3" y="7" width="1" height="1" fill="#000000"/><rect x="4" y="7" width="2" height="1" fill="#FFFFFF"/><rect x="6" y="7" width="1" height="1" fill="#000000"/><rect x="8" y="7" width="1" height="1" fill="#0000D0"/><rect x="4" y="8" width="2" height="1" fill="#000000"/><rect x="8" y="8" width="1" height="1" fill="#0000D0"/></svg>
<svg class="a" style="left:456px;top:72px" width="16" height="15" viewBox="0 0 16 15" shape-rendering="crispEdges"><rect x="0" y="0" width="16" height="1" fill="#000000"/><rect x="0" y="1" width="1" height="1" fill="#000000"/><rect x="1" y="1" width="2" height="1" fill="#FFFFFF"/><rect x="3" y="1" width="1" height="1" fill="#808080"/><rect x="4" y="1" width="8" height="1" fill="#FFFFFF"/><rect x="12" y="1" width="1" height="1" fill="#808080"/><rect x="13" y="1" width="2" height="1" fill="#FFFFFF"/><rect x="15" y="1" width="1" height="1" fill="#000000"/><rect x="0" y="2" width="1" height="1" fill="#000000"/><rect x="1" y="2" width="2" height="1" fill="#FFFFFF"/><rect x="3" y="2" width="1" height="1" fill="#808080"/><rect x="4" y="2" width="8" height="1" fill="#FFFFFF"/><rect x="12" y="2" width="1" height="1" fill="#808080"/><rect x="13" y="2" width="2" height="1" fill="#FFFFFF"/><rect x="15" y="2" width="1" height="1" fill="#000000"/><rect x="0" y="3" width="1" height="1" fill="#000000"/><rect x="1" y="3" width="14" height="1" fill="#808080"/><rect x="15" y="3" width="1" height="1" fill="#000000"/><rect x="0" y="4" width="1" height="1" fill="#000000"/><rect x="1" y="4" width="2" height="1" fill="#FFFFFF"/><rect x="3" y="4" width="1" height="1" fill="#808080"/><rect x="4" y="4" width="8" height="1" fill="#FFFFFF"/><rect x="12" y="4" width="1" height="1" fill="#808080"/><rect x="13" y="4" width="2" height="1" fill="#FFFFFF"/><rect x="15" y="4" width="1" height="1" fill="#000000"/><rect x="0" y="5" width="1" height="1" fill="#000000"/><rect x="1" y="5" width="2" height="1" fill="#FFFFFF"/><rect x="3" y="5" width="1" height="1" fill="#808080"/><rect x="4" y="5" width="3" height="1" fill="#FFFFFF"/><rect x="7" y="5" width="3" height="1" fill="#000000"/><rect x="10" y="5" width="2" height="1" fill="#FFFFFF"/><rect x="12" y="5" width="1" height="1" fill="#808080"/><rect x="13" y="5" width="2" height="1" fill="#FFFFFF"/><rect x="15" y="5" width="1" height="1" fill="#000000"/><rect x="0" y="6" width="1" height="1" fill="#000000"/><rect x="1" y="6" width="2" height="1" fill="#FFFFFF"/><rect x="3" y="6" width="1" height="1" fill="#808080"/><rect x="4" y="6" width="6" height="1" fill="#FFFFFF"/><rect x="10" y="6" width="1" height="1" fill="#000000"/><rect x="11" y="6" width="1" height="1" fill="#FFFFFF"/><rect x="12" y="6" width="1" height="1" fill="#808080"/><rect x="13" y="6" width="2" height="1" fill="#FFFFFF"/><rect x="15" y="6" width="1" height="1" fill="#000000"/><rect x="0" y="7" width="1" height="1" fill="#000000"/><rect x="1" y="7" width="2" height="1" fill="#FFFFFF"/><rect x="3" y="7" width="1" height="1" fill="#808080"/><rect x="4" y="7" width="3" height="1" fill="#FFFFFF"/><rect x="7" y="7" width="4" height="1" fill="#000000"/><rect x="11" y="7" width="1" height="1" fill="#FFFFFF"/><rect x="12" y="7" width="1" height="1" fill="#808080"/><rect x="13" y="7" width="2" height="1" fill="#FFFFFF"/><rect x="15" y="7" width="1" height="1" fill="#000000"/><rect x="0" y="8" width="1" height="1" fill="#000000"/><rect x="1" y="8" width="2" height="1" fill="#FFFFFF"/><rect x="3" y="8" width="1" height="1" fill="#808080"/><rect x="4" y="8" width="2" height="1" fill="#FFFFFF"/><rect x="6" y="8" width="1" height="1" fill="#000000"/><rect x="7" y="8" width="3" height="1" fill="#FFFFFF"/><rect x="10" y="8" width="1" height="1" fill="#000000"/><rect x="11" y="8" width="1" height="1" fill="#FFFFFF"/><rect x="12" y="8" width="1" height="1" fill="#808080"/><rect x="13" y="8" width="2" height="1" fill="#FFFFFF"/><rect x="15" y="8" width="1" height="1" fill="#000000"/><rect x="0" y="9" width="1" height="1" fill="#000000"/><rect x="1" y="9" width="2" height="1" fill="#FFFFFF"/><rect x="3" y="9" width="1" height="1" fill="#808080"/><rect x="4" y="9" width="3" height="1" fill="#FFFFFF"/><rect x="7" y="9" width="4" height="1" fill="#000000"/><rect x="11" y="9" width="1" height="1" fill="#FFFFFF"/><rect x="12" y="9" width="1" height="1" fill="#808080"/><rect x="13" y="9" width="2" height="1" fill="#FFFFFF"/><rect x="15" y="9" width="1" height="1" fill="#000000"/><rect x="0" y="10" width="1" height="1" fill="#000000"/><rect x="1" y="10" width="2" height="1" fill="#FFFFFF"/><rect x="3" y="10" width="1" height="1" fill="#808080"/><rect x="4" y="10" width="8" height="1" fill="#FFFFFF"/><rect x="12" y="10" width="1" height="1" fill="#808080"/><rect x="13" y="10" width="2" height="1" fill="#FFFFFF"/><rect x="15" y="10" width="1" height="1" fill="#000000"/><rect x="0" y="11" width="1" height="1" fill="#000000"/><rect x="1" y="11" width="14" height="1" fill="#808080"/><rect x="15" y="11" width="1" height="1" fill="#000000"/><rect x="0" y="12" width="1" height="1" fill="#000000"/><rect x="1" y="12" width="2" height="1" fill="#FFFFFF"/><rect x="3" y="12" width="1" height="1" fill="#808080"/><rect x="4" y="12" width="8" height="1" fill="#FFFFFF"/><rect x="12" y="12" width="1" height="1" fill="#808080"/><rect x="13" y="12" width="2" height="1" fill="#FFFFFF"/><rect x="15" y="12" width="1" height="1" fill="#000000"/><rect x="0" y="13" width="1" height="1" fill="#000000"/><rect x="1" y="13" width="2" height="1" fill="#FFFFFF"/><rect x="3" y="13" width="1" height="1" fill="#808080"/><rect x="4" y="13" width="8" height="1" fill="#FFFFFF"/><rect x="12" y="13" width="1" height="1" fill="#808080"/><rect x="13" y="13" width="2" height="1" fill="#FFFFFF"/><rect x="15" y="13" width="1" height="1" fill="#000000"/><rect x="0" y="14" width="16" height="1" fill="#000000"/></svg>
<svg class="a" style="left:488px;top:72px" width="16" height="15" viewBox="0 0 16 15" shape-rendering="crispEdges"><rect x="1" y="0" width="3" height="1" fill="#C00000"/><rect x="0" y="1" width="1" height="1" fill="#C00000"/><rect x="4" y="1" width="1" height="1" fill="#C00000"/><rect x="0" y="2" width="1" height="1" fill="#C00000"/><rect x="3" y="2" width="7" height="1" fill="#000000"/><rect x="0" y="3" width="1" height="1" fill="#C00000"/><rect x="2" y="3" width="1" height="1" fill="#000000"/><rect x="4" y="3" width="1" height="1" fill="#C00000"/><rect x="9" y="3" width="2" height="1" fill="#000000"/><rect x="1" y="4" width="1" height="1" fill="#C00000"/><rect x="2" y="4" width="1" height="1" fill="#000000"/><rect x="3" y="4" width="1" height="1" fill="#C00000"/><rect x="4" y="4" width="1" height="1" fill="#808080"/><rect x="11" y="4" width="1" height="1" fill="#000000"/><rect x="2" y="5" width="1" height="1" fill="#000000"/><rect x="12" y="5" width="1" height="1" fill="#000000"/><rect x="2" y="6" width="1" height="1" fill="#000000"/><rect x="13" y="6" width="1" height="1" fill="#000000"/><rect x="2" y="7" width="2" height="1" fill="#000000"/><rect x="14" y="7" width="1" height="1" fill="#000000"/><rect x="3" y="8" width="1" height="1" fill="#000000"/><rect x="10" y="8" width="1" height="1" fill="#0000FF"/><rect x="11" y="8" width="1" height="1" fill="#FFFFFF"/><rect x="12" y="8" width="1" height="1" fill="#0000FF"/><rect x="13" y="8" width="1" height="1" fill="#FFFFFF"/><rect x="14" y="8" width="1" height="1" fill="#0000FF"/><rect x="15" y="8" width="1" height="1" fill="#000000"/><rect x="4" y="9" width="1" height="1" fill="#000000"/><rect x="9" y="9" width="5" height="1" fill="#0000FF"/><rect x="14" y="9" width="1" height="1" fill="#000000"/><rect x="5" y="10" width="1" height="1" fill="#000000"/><rect x="8" y="10" width="1" height="1" fill="#0000FF"/><rect x="9" y="10" width="1" height="1" fill="#FFFFFF"/><rect x="10" y="10" width="1" height="1" fill="#0000FF"/><rect x="11" y="10" width="1" height="1" fill="#FFFFFF"/><rect x="12" y="10" width="1" height="1" fill="#0000FF"/><rect x="13" y="10" width="1" height="1" fill="#000000"/><rect x="6" y="11" width="1" height="1" fill="#000000"/><rect x="7" y="11" width="5" height="1" fill="#0000FF"/><rect x="12" y="11" width="1" height="1" fill="#000000"/><rect x="7" y="12" width="1" height="1" fill="#000000"/><rect x="8" y="12" width="1" height="1" fill="#0000FF"/><rect x="9" y="12" width="1" height="1" fill="#FFFFFF"/><rect x="10" y="12" width="1" height="1" fill="#0000FF"/><rect x="11" y="12" width="1" height="1" fill="#000000"/><rect x="8" y="13" width="1" height="1" fill="#000000"/><rect x="9" y="13" width="1" height="1" fill="#0000FF"/><rect x="10" y="13" width="1" height="1" fill="#000000"/><rect x="9" y="14" width="1" height="1" fill="#000000"/></svg>
<svg class="a" style="left:511px;top:75px" width="15" height="13" viewBox="0 0 15 13" shape-rendering="crispEdges"><rect x="0" y="0" width="3" height="1" fill="#000000"/><rect x="4" y="0" width="3" height="1" fill="#000000"/><rect x="8" y="0" width="2" height="1" fill="#000000"/><rect x="11" y="0" width="2" height="1" fill="#000000"/><rect x="14" y="0" width="1" height="1" fill="#000000"/><rect x="0" y="2" width="3" height="1" fill="#0000FF"/><rect x="4" y="2" width="3" height="1" fill="#000000"/><rect x="8" y="2" width="2" height="1" fill="#000000"/><rect x="11" y="2" width="2" height="1" fill="#000000"/><rect x="14" y="2" width="1" height="1" fill="#000000"/><rect x="0" y="4" width="3" height="1" fill="#0000FF"/><rect x="4" y="4" width="3" height="1" fill="#000000"/><rect x="8" y="4" width="2" height="1" fill="#000000"/><rect x="11" y="4" width="2" height="1" fill="#000000"/><rect x="14" y="4" width="1" height="1" fill="#000000"/><rect x="0" y="6" width="3" height="1" fill="#0000FF"/><rect x="4" y="6" width="3" height="1" fill="#000000"/><rect x="8" y="6" width="2" height="1" fill="#000000"/><rect x="11" y="6" width="2" height="1" fill="#000000"/><rect x="14" y="6" width="1" height="1" fill="#000000"/><rect x="0" y="8" width="3" height="1" fill="#0000FF"/><rect x="4" y="8" width="3" height="1" fill="#000000"/><rect x="8" y="8" width="2" height="1" fill="#000000"/><rect x="11" y="8" width="2" height="1" fill="#000000"/><rect x="14" y="8" width="1" height="1" fill="#000000"/><rect x="0" y="10" width="3" height="1" fill="#0000FF"/><rect x="4" y="10" width="3" height="1" fill="#000000"/><rect x="8" y="10" width="2" height="1" fill="#000000"/><rect x="11" y="10" width="2" height="1" fill="#000000"/><rect x="14" y="10" width="1" height="1" fill="#000000"/><rect x="0" y="12" width="3" height="1" fill="#0000FF"/><rect x="4" y="12" width="3" height="1" fill="#000000"/><rect x="8" y="12" width="2" height="1" fill="#000000"/><rect x="11" y="12" width="2" height="1" fill="#000000"/><rect x="14" y="12" width="1" height="1" fill="#000000"/></svg>
<svg class="a" style="left:540px;top:73px" width="15" height="13" viewBox="0 0 15 13" shape-rendering="crispEdges"><rect x="2" y="0" width="1" height="1" fill="#0000D0"/><rect x="10" y="0" width="2" height="1" fill="#000000"/><rect x="1" y="1" width="2" height="1" fill="#0000D0"/><rect x="9" y="1" width="1" height="1" fill="#000000"/><rect x="12" y="1" width="1" height="1" fill="#000000"/><rect x="0" y="2" width="5" height="1" fill="#0000D0"/><rect x="9" y="2" width="1" height="1" fill="#000000"/><rect x="12" y="2" width="1" height="1" fill="#000000"/><rect x="1" y="3" width="2" height="1" fill="#0000D0"/><rect x="9" y="3" width="1" height="1" fill="#000000"/><rect x="12" y="3" width="1" height="1" fill="#000000"/><rect x="2" y="4" width="1" height="1" fill="#0000D0"/><rect x="7" y="4" width="3" height="1" fill="#000000"/><rect x="12" y="4" width="1" height="1" fill="#000000"/><rect x="7" y="5" width="2" height="1" fill="#000000"/><rect x="10" y="5" width="2" height="1" fill="#000000"/><rect x="5" y="7" width="2" height="1" fill="#000000"/><rect x="10" y="7" width="2" height="1" fill="#000000"/><rect x="4" y="8" width="1" height="1" fill="#000000"/><rect x="7" y="8" width="1" height="1" fill="#000000"/><rect x="9" y="8" width="1" height="1" fill="#000000"/><rect x="12" y="8" width="1" height="1" fill="#000000"/><rect x="4" y="9" width="1" height="1" fill="#000000"/><rect x="7" y="9" width="1" height="1" fill="#000000"/><rect x="9" y="9" width="1" height="1" fill="#000000"/><rect x="12" y="9" width="1" height="1" fill="#000000"/><rect x="4" y="10" width="1" height="1" fill="#000000"/><rect x="7" y="10" width="1" height="1" fill="#000000"/><rect x="9" y="10" width="1" height="1" fill="#000000"/><rect x="12" y="10" width="1" height="1" fill="#000000"/><rect x="2" y="11" width="3" height="1" fill="#000000"/><rect x="7" y="11" width="1" height="1" fill="#000000"/><rect x="9" y="11" width="1" height="1" fill="#000000"/><rect x="12" y="11" width="1" height="1" fill="#000000"/><rect x="2" y="12" width="2" height="1" fill="#000000"/><rect x="5" y="12" width="2" height="1" fill="#000000"/><rect x="10" y="12" width="2" height="1" fill="#000000"/></svg>
<svg class="a" style="left:561px;top:73px" width="16" height="13" viewBox="0 0 16 13" shape-rendering="crispEdges"><rect x="7" y="0" width="2" height="1" fill="#000000"/><rect x="12" y="0" width="2" height="1" fill="#000000"/><rect x="6" y="1" width="1" height="1" fill="#000000"/><rect x="9" y="1" width="1" height="1" fill="#000000"/><rect x="11" y="1" width="1" height="1" fill="#000000"/><rect x="14" y="1" width="1" height="1" fill="#000000"/><rect x="6" y="2" width="1" height="1" fill="#000000"/><rect x="9" y="2" width="1" height="1" fill="#000000"/><rect x="11" y="2" width="1" height="1" fill="#000000"/><rect x="14" y="2" width="1" height="1" fill="#000000"/><rect x="6" y="3" width="1" height="1" fill="#000000"/><rect x="9" y="3" width="1" height="1" fill="#000000"/><rect x="11" y="3" width="1" height="1" fill="#000000"/><rect x="14" y="3" width="1" height="1" fill="#000000"/><rect x="3" y="4" width="2" height="1" fill="#000000"/><rect x="6" y="4" width="1" height="1" fill="#000000"/><rect x="9" y="4" width="1" height="1" fill="#000000"/><rect x="11" y="4" width="1" height="1" fill="#000000"/><rect x="14" y="4" width="1" height="1" fill="#000000"/><rect x="3" y="5" width="2" height="1" fill="#000000"/><rect x="7" y="5" width="2" height="1" fill="#000000"/><rect x="12" y="5" width="2" height="1" fill="#000000"/><rect x="12" y="7" width="2" height="1" fill="#000000"/><rect x="2" y="8" width="1" height="1" fill="#0000D0"/><rect x="11" y="8" width="1" height="1" fill="#000000"/><rect x="14" y="8" width="1" height="1" fill="#000000"/><rect x="2" y="9" width="2" height="1" fill="#0000D0"/><rect x="11" y="9" width="1" height="1" fill="#000000"/><rect x="14" y="9" width="1" height="1" fill="#000000"/><rect x="0" y="10" width="5" height="1" fill="#0000D0"/><rect x="11" y="10" width="1" height="1" fill="#000000"/><rect x="14" y="10" width="1" height="1" fill="#000000"/><rect x="2" y="11" width="2" height="1" fill="#0000D0"/><rect x="8" y="11" width="2" height="1" fill="#000000"/><rect x="11" y="11" width="1" height="1" fill="#000000"/><rect x="14" y="11" width="1" height="1" fill="#000000"/><rect x="2" y="12" width="1" height="1" fill="#0000D0"/><rect x="8" y="12" width="2" height="1" fill="#000000"/><rect x="12" y="12" width="2" height="1" fill="#000000"/></svg>
<svg class="a" style="left:593px;top:75px" width="14" height="10" viewBox="0 0 14 10" shape-rendering="crispEdges"><rect x="2" y="0" width="1" height="1" fill="#000000"/><rect x="10" y="0" width="1" height="1" fill="#000000"/><rect x="12" y="0" width="1" height="1" fill="#C00000"/><rect x="2" y="1" width="1" height="1" fill="#000000"/><rect x="10" y="1" width="1" height="1" fill="#000000"/><rect x="11" y="1" width="1" height="1" fill="#C00000"/><rect x="0" y="2" width="10" height="1" fill="#000000"/><rect x="10" y="2" width="1" height="1" fill="#C00000"/><rect x="11" y="2" width="3" height="1" fill="#000000"/><rect x="2" y="3" width="1" height="1" fill="#000000"/><rect x="3" y="3" width="6" height="1" fill="#FFFFFF"/><rect x="9" y="3" width="1" height="1" fill="#C00000"/><rect x="10" y="3" width="1" height="1" fill="#FFFFFF"/><rect x="11" y="3" width="1" height="1" fill="#000000"/><rect x="2" y="4" width="1" height="1" fill="#000000"/><rect x="3" y="4" width="1" height="1" fill="#FFFFFF"/><rect x="4" y="4" width="1" height="1" fill="#C00000"/><rect x="5" y="4" width="3" height="1" fill="#FFFFFF"/><rect x="8" y="4" width="1" height="1" fill="#C00000"/><rect x="9" y="4" width="2" height="1" fill="#FFFFFF"/><rect x="11" y="4" width="1" height="1" fill="#000000"/><rect x="2" y="5" width="1" height="1" fill="#000000"/><rect x="3" y="5" width="2" height="1" fill="#FFFFFF"/><rect x="5" y="5" width="1" height="1" fill="#C00000"/><rect x="6" y="5" width="1" height="1" fill="#FFFFFF"/><rect x="7" y="5" width="1" height="1" fill="#C00000"/><rect x="8" y="5" width="3" height="1" fill="#FFFFFF"/><rect x="11" y="5" width="1" height="1" fill="#000000"/><rect x="2" y="6" width="1" height="1" fill="#000000"/><rect x="3" y="6" width="3" height="1" fill="#FFFFFF"/><rect x="6" y="6" width="1" height="1" fill="#C00000"/><rect x="7" y="6" width="4" height="1" fill="#FFFFFF"/><rect x="11" y="6" width="1" height="1" fill="#000000"/><rect x="0" y="7" width="14" height="1" fill="#000000"/><rect x="2" y="8" width="1" height="1" fill="#000000"/><rect x="10" y="8" width="1" height="1" fill="#000000"/><rect x="2" y="9" width="1" height="1" fill="#000000"/><rect x="10" y="9" width="1" height="1" fill="#000000"/></svg>
<svg class="a" style="left:613px;top:74px" width="17" height="13" viewBox="0 0 17 13" shape-rendering="crispEdges"><rect x="7" y="0" width="6" height="1" fill="#000000"/><rect x="14" y="0" width="3" height="1" fill="#0000D0"/><rect x="6" y="1" width="1" height="1" fill="#000000"/><rect x="8" y="1" width="1" height="1" fill="#000000"/><rect x="13" y="1" width="1" height="1" fill="#000000"/><rect x="14" y="1" width="3" height="1" fill="#0000D0"/><rect x="5" y="2" width="1" height="1" fill="#000000"/><rect x="7" y="2" width="1" height="1" fill="#000000"/><rect x="9" y="2" width="1" height="1" fill="#000000"/><rect x="13" y="2" width="1" height="1" fill="#000000"/><rect x="14" y="2" width="3" height="1" fill="#0000D0"/><rect x="0" y="3" width="5" height="1" fill="#000000"/><rect x="6" y="3" width="1" height="1" fill="#000000"/><rect x="8" y="3" width="1" height="1" fill="#000000"/><rect x="10" y="3" width="1" height="1" fill="#000000"/><rect x="13" y="3" width="1" height="1" fill="#000000"/><rect x="14" y="3" width="3" height="1" fill="#0000D0"/><rect x="0" y="4" width="1" height="1" fill="#000000"/><rect x="1" y="4" width="2" height="1" fill="#FFFFFF"/><rect x="3" y="4" width="1" height="1" fill="#000000"/><rect x="5" y="4" width="1" height="1" fill="#000000"/><rect x="7" y="4" width="1" height="1" fill="#000000"/><rect x="9" y="4" width="1" height="1" fill="#000000"/><rect x="11" y="4" width="3" height="1" fill="#000000"/><rect x="15" y="4" width="2" height="1" fill="#0000D0"/><rect x="0" y="5" width="1" height="1" fill="#000000"/><rect x="1" y="5" width="3" height="1" fill="#FFFFFF"/><rect x="4" y="5" width="1" height="1" fill="#000000"/><rect x="6" y="5" width="1" height="1" fill="#000000"/><rect x="8" y="5" width="1" height="1" fill="#000000"/><rect x="10" y="5" width="2" height="1" fill="#000000"/><rect x="15" y="5" width="2" height="1" fill="#0000D0"/><rect x="0" y="6" width="1" height="1" fill="#000000"/><rect x="1" y="6" width="4" height="1" fill="#FFFFFF"/><rect x="5" y="6" width="1" height="1" fill="#000000"/><rect x="7" y="6" width="1" height="1" fill="#000000"/><rect x="9" y="6" width="1" height="1" fill="#000000"/><rect x="10" y="6" width="1" height="1" fill="#FFFFFF"/><rect x="11" y="6" width="1" height="1" fill="#000000"/><rect x="16" y="6" width="1" height="1" fill="#0000D0"/><rect x="0" y="7" width="1" height="1" fill="#000000"/><rect x="1" y="7" width="5" height="1" fill="#FFFFFF"/><rect x="6" y="7" width="1" height="1" fill="#000000"/><rect x="8" y="7" width="1" height="1" fill="#000000"/><rect x="9" y="7" width="2" height="1" fill="#FFFFFF"/><rect x="11" y="7" width="1" height="1" fill="#000000"/><rect x="0" y="8" width="1" height="1" fill="#000000"/><rect x="1" y="8" width="1" height="1" fill="#FFFFFF"/><rect x="2" y="8" width="2" height="1" fill="#FF0000"/><rect x="4" y="8" width="1" height="1" fill="#FFFFFF"/><rect x="5" y="8" width="2" height="1" fill="#FF0000"/><rect x="7" y="8" width="1" height="1" fill="#FFFFFF"/><rect x="8" y="8" width="2" height="1" fill="#FF0000"/><rect x="10" y="8" width="1" height="1" fill="#FFFFFF"/><rect x="11" y="8" width="1" height="1" fill="#000000"/><rect x="0" y="9" width="1" height="1" fill="#000000"/><rect x="1" y="9" width="10" height="1" fill="#FFFFFF"/><rect x="11" y="9" width="1" height="1" fill="#000000"/><rect x="0" y="10" width="1" height="1" fill="#000000"/><rect x="1" y="10" width="1" height="1" fill="#FFFFFF"/><rect x="2" y="10" width="2" height="1" fill="#000000"/><rect x="4" y="10" width="1" height="1" fill="#FFFFFF"/><rect x="5" y="10" width="2" height="1" fill="#000000"/><rect x="7" y="10" width="1" height="1" fill="#FFFFFF"/><rect x="8" y="10" width="2" height="1" fill="#000000"/><rect x="10" y="10" width="1" height="1" fill="#FFFFFF"/><rect x="11" y="10" width="1" height="1" fill="#000000"/><rect x="0" y="11" width="1" height="1" fill="#000000"/><rect x="1" y="11" width="10" height="1" fill="#FFFFFF"/><rect x="11" y="11" width="1" height="1" fill="#000000"/><rect x="0" y="12" width="12" height="1" fill="#000000"/></svg>
<svg class="a" style="left:635px;top:72px" width="17" height="15" viewBox="0 0 17 15" shape-rendering="crispEdges"><rect x="5" y="0" width="2" height="1" fill="#0000D0"/><rect x="4" y="1" width="2" height="1" fill="#0000D0"/><rect x="0" y="2" width="1" height="1" fill="#0000D0"/><rect x="3" y="2" width="2" height="1" fill="#0000D0"/><rect x="7" y="2" width="6" height="1" fill="#000000"/><rect x="14" y="2" width="3" height="1" fill="#0000D0"/><rect x="0" y="3" width="4" height="1" fill="#0000D0"/><rect x="6" y="3" width="1" height="1" fill="#000000"/><rect x="8" y="3" width="1" height="1" fill="#000000"/><rect x="13" y="3" width="1" height="1" fill="#000000"/><rect x="14" y="3" width="3" height="1" fill="#0000D0"/><rect x="1" y="4" width="2" height="1" fill="#0000D0"/><rect x="5" y="4" width="1" height="1" fill="#000000"/><rect x="7" y="4" width="1" height="1" fill="#000000"/><rect x="9" y="4" width="1" height="1" fill="#000000"/><rect x="13" y="4" width="1" height="1" fill="#000000"/><rect x="14" y="4" width="3" height="1" fill="#0000D0"/><rect x="0" y="5" width="5" height="1" fill="#000000"/><rect x="6" y="5" width="1" height="1" fill="#000000"/><rect x="8" y="5" width="1" height="1" fill="#000000"/><rect x="10" y="5" width="1" height="1" fill="#000000"/><rect x="13" y="5" width="1" height="1" fill="#000000"/><rect x="14" y="5" width="3" height="1" fill="#0000D0"/><rect x="0" y="6" width="1" height="1" fill="#000000"/><rect x="1" y="6" width="2" height="1" fill="#FFFFFF"/><rect x="3" y="6" width="1" height="1" fill="#000000"/><rect x="5" y="6" width="1" height="1" fill="#000000"/><rect x="7" y="6" width="1" height="1" fill="#000000"/><rect x="9" y="6" width="1" height="1" fill="#000000"/><rect x="11" y="6" width="3" height="1" fill="#000000"/><rect x="15" y="6" width="2" height="1" fill="#0000D0"/><rect x="0" y="7" width="1" height="1" fill="#000000"/><rect x="1" y="7" width="3" height="1" fill="#FFFFFF"/><rect x="4" y="7" width="1" height="1" fill="#000000"/><rect x="6" y="7" width="1" height="1" fill="#000000"/><rect x="8" y="7" width="1" height="1" fill="#000000"/><rect x="10" y="7" width="2" height="1" fill="#000000"/><rect x="15" y="7" width="2" height="1" fill="#0000D0"/><rect x="0" y="8" width="1" height="1" fill="#000000"/><rect x="1" y="8" width="4" height="1" fill="#FFFFFF"/><rect x="5" y="8" width="1" height="1" fill="#000000"/><rect x="7" y="8" width="1" height="1" fill="#000000"/><rect x="9" y="8" width="1" height="1" fill="#000000"/><rect x="10" y="8" width="1" height="1" fill="#FFFFFF"/><rect x="11" y="8" width="1" height="1" fill="#000000"/><rect x="16" y="8" width="1" height="1" fill="#0000D0"/><rect x="0" y="9" width="1" height="1" fill="#000000"/><rect x="1" y="9" width="5" height="1" fill="#FFFFFF"/><rect x="6" y="9" width="1" height="1" fill="#000000"/><rect x="8" y="9" width="1" height="1" fill="#000000"/><rect x="9" y="9" width="2" height="1" fill="#FFFFFF"/><rect x="11" y="9" width="1" height="1" fill="#000000"/><rect x="0" y="10" width="1" height="1" fill="#000000"/><rect x="1" y="10" width="1" height="1" fill="#FFFFFF"/><rect x="2" y="10" width="2" height="1" fill="#FF0000"/><rect x="4" y="10" width="1" height="1" fill="#FFFFFF"/><rect x="5" y="10" width="2" height="1" fill="#FF0000"/><rect x="7" y="10" width="1" height="1" fill="#FFFFFF"/><rect x="8" y="10" width="2" height="1" fill="#FF0000"/><rect x="10" y="10" width="1" height="1" fill="#FFFFFF"/><rect x="11" y="10" width="1" height="1" fill="#000000"/><rect x="0" y="11" width="1" height="1" fill="#000000"/><rect x="1" y="11" width="10" height="1" fill="#FFFFFF"/><rect x="11" y="11" width="1" height="1" fill="#000000"/><rect x="0" y="12" width="1" height="1" fill="#000000"/><rect x="1" y="12" width="1" height="1" fill="#FFFFFF"/><rect x="2" y="12" width="2" height="1" fill="#000000"/><rect x="4" y="12" width="1" height="1" fill="#FFFFFF"/><rect x="5" y="12" width="2" height="1" fill="#000000"/><rect x="7" y="12" width="1" height="1" fill="#FFFFFF"/><rect x="8" y="12" width="2" height="1" fill="#000000"/><rect x="10" y="12" width="1" height="1" fill="#FFFFFF"/><rect x="11" y="12" width="1" height="1" fill="#000000"/><rect x="0" y="13" width="1" height="1" fill="#000000"/><rect x="1" y="13" width="10" height="1" fill="#FFFFFF"/><rect x="11" y="13" width="1" height="1" fill="#000000"/><rect x="0" y="14" width="12" height="1" fill="#000000"/></svg>
<svg class="a" style="left:657px;top:72px" width="16" height="15" viewBox="0 0 16 15" shape-rendering="crispEdges"><rect x="1" y="0" width="1" height="1" fill="#000000"/><rect x="3" y="0" width="1" height="1" fill="#000000"/><rect x="12" y="0" width="1" height="1" fill="#000000"/><rect x="14" y="0" width="1" height="1" fill="#000000"/><rect x="1" y="1" width="1" height="1" fill="#000000"/><rect x="3" y="1" width="1" height="1" fill="#000000"/><rect x="12" y="1" width="1" height="1" fill="#000000"/><rect x="14" y="1" width="1" height="1" fill="#000000"/><rect x="1" y="2" width="1" height="1" fill="#000000"/><rect x="3" y="2" width="1" height="1" fill="#000000"/><rect x="12" y="2" width="1" height="1" fill="#000000"/><rect x="14" y="2" width="1" height="1" fill="#000000"/><rect x="0" y="3" width="16" height="1" fill="#000000"/><rect x="1" y="4" width="1" height="1" fill="#000000"/><rect x="3" y="4" width="1" height="1" fill="#000000"/><rect x="5" y="4" width="1" height="1" fill="#0000D0"/><rect x="10" y="4" width="1" height="1" fill="#0000D0"/><rect x="12" y="4" width="1" height="1" fill="#000000"/><rect x="14" y="4" width="1" height="1" fill="#000000"/><rect x="1" y="5" width="1" height="1" fill="#000000"/><rect x="3" y="5" width="1" height="1" fill="#000000"/><rect x="5" y="5" width="1" height="1" fill="#0000D0"/><rect x="7" y="5" width="2" height="1" fill="#0000D0"/><rect x="10" y="5" width="1" height="1" fill="#0000D0"/><rect x="12" y="5" width="1" height="1" fill="#000000"/><rect x="14" y="5" width="1" height="1" fill="#000000"/><rect x="1" y="6" width="1" height="1" fill="#000000"/><rect x="3" y="6" width="1" height="1" fill="#000000"/><rect x="5" y="6" width="1" height="1" fill="#0000D0"/><rect x="7" y="6" width="2" height="1" fill="#0000D0"/><rect x="10" y="6" width="1" height="1" fill="#0000D0"/><rect x="12" y="6" width="1" height="1" fill="#000000"/><rect x="14" y="6" width="1" height="1" fill="#000000"/><rect x="5" y="7" width="6" height="1" fill="#0000D0"/><rect x="6" y="8" width="4" height="1" fill="#0000D0"/><rect x="6" y="9" width="4" height="1" fill="#0000D0"/><rect x="6" y="10" width="4" height="1" fill="#0000D0"/><rect x="6" y="11" width="1" height="1" fill="#0000D0"/><rect x="9" y="11" width="1" height="1" fill="#0000D0"/><rect x="6" y="12" width="1" height="1" fill="#0000D0"/><rect x="9" y="12" width="1" height="1" fill="#0000D0"/><rect x="6" y="13" width="1" height="1" fill="#0000D0"/><rect x="9" y="13" width="1" height="1" fill="#0000D0"/><rect x="4" y="14" width="3" height="1" fill="#0000D0"/><rect x="9" y="14" width="3" height="1" fill="#0000D0"/></svg>
<svg class="a" style="left:688px;top:72px" width="15" height="15" viewBox="0 0 15 15" shape-rendering="crispEdges"><rect x="3" y="0" width="1" height="1" fill="#0000D0"/><rect x="12" y="0" width="1" height="1" fill="#000000"/><rect x="2" y="1" width="3" height="1" fill="#0000D0"/><rect x="12" y="1" width="1" height="1" fill="#000000"/><rect x="2" y="2" width="1" height="1" fill="#0000D0"/><rect x="4" y="2" width="1" height="1" fill="#0000D0"/><rect x="12" y="2" width="1" height="1" fill="#000000"/><rect x="1" y="3" width="2" height="1" fill="#0000D0"/><rect x="4" y="3" width="2" height="1" fill="#0000D0"/><rect x="12" y="3" width="1" height="1" fill="#000000"/><rect x="1" y="4" width="5" height="1" fill="#0000D0"/><rect x="12" y="4" width="1" height="1" fill="#000000"/><rect x="1" y="5" width="1" height="1" fill="#0000D0"/><rect x="5" y="5" width="1" height="1" fill="#0000D0"/><rect x="12" y="5" width="1" height="1" fill="#000000"/><rect x="0" y="6" width="3" height="1" fill="#0000D0"/><rect x="4" y="6" width="3" height="1" fill="#0000D0"/><rect x="12" y="6" width="1" height="1" fill="#000000"/><rect x="12" y="7" width="1" height="1" fill="#000000"/><rect x="0" y="8" width="7" height="1" fill="#C00000"/><rect x="12" y="8" width="1" height="1" fill="#000000"/><rect x="0" y="9" width="1" height="1" fill="#C00000"/><rect x="4" y="9" width="2" height="1" fill="#C00000"/><rect x="12" y="9" width="1" height="1" fill="#000000"/><rect x="3" y="10" width="2" height="1" fill="#C00000"/><rect x="10" y="10" width="5" height="1" fill="#000000"/><rect x="2" y="11" width="2" height="1" fill="#C00000"/><rect x="10" y="11" width="5" height="1" fill="#000000"/><rect x="1" y="12" width="2" height="1" fill="#C00000"/><rect x="6" y="12" width="1" height="1" fill="#C00000"/><rect x="11" y="12" width="3" height="1" fill="#000000"/><rect x="0" y="13" width="7" height="1" fill="#C00000"/><rect x="11" y="13" width="3" height="1" fill="#000000"/><rect x="12" y="14" width="1" height="1" fill="#000000"/></svg>
<svg class="a" style="left:425px;top:416px" width="18" height="14" viewBox="0 0 18 14" shape-rendering="crispEdges"><rect x="0" y="0" width="18" height="1" fill="#000000"/><rect x="0" y="1" width="1" height="1" fill="#000000"/><rect x="1" y="1" width="16" height="1" fill="#FFFFFF"/><rect x="17" y="1" width="1" height="1" fill="#000000"/><rect x="0" y="2" width="1" height="1" fill="#000000"/><rect x="1" y="2" width="1" height="1" fill="#FFFFFF"/><rect x="2" y="2" width="14" height="1" fill="#C0C0C0"/><rect x="16" y="2" width="1" height="1" fill="#FFFFFF"/><rect x="17" y="2" width="1" height="1" fill="#000000"/><rect x="0" y="3" width="1" height="1" fill="#000000"/><rect x="1" y="3" width="7" height="1" fill="#FFFFFF"/><rect x="8" y="3" width="2" height="1" fill="#000000"/><rect x="10" y="3" width="7" height="1" fill="#FFFFFF"/><rect x="17" y="3" width="1" height="1" fill="#000000"/><rect x="0" y="4" width="1" height="1" fill="#000000"/><rect x="1" y="4" width="1" height="1" fill="#FFFFFF"/><rect x="2" y="4" width="5" height="1" fill="#C0C0C0"/><rect x="7" y="4" width="1" height="1" fill="#000000"/><rect x="8" y="4" width="2" height="1" fill="#00D000"/><rect x="10" y="4" width="1" height="1" fill="#000000"/><rect x="11" y="4" width="5" height="1" fill="#C0C0C0"/><rect x="16" y="4" width="1" height="1" fill="#FFFFFF"/><rect x="17" y="4" width="1" height="1" fill="#000000"/><rect x="0" y="5" width="1" height="1" fill="#000000"/><rect x="1" y="5" width="3" height="1" fill="#FFFFFF"/><rect x="4" y="5" width="4" height="1" fill="#000000"/><rect x="8" y="5" width="2" height="1" fill="#00D000"/><rect x="10" y="5" width="4" height="1" fill="#000000"/><rect x="14" y="5" width="3" height="1" fill="#FFFFFF"/><rect x="17" y="5" width="1" height="1" fill="#000000"/><rect x="0" y="6" width="1" height="1" fill="#000000"/><rect x="1" y="6" width="1" height="1" fill="#FFFFFF"/><rect x="2" y="6" width="3" height="1" fill="#C0C0C0"/><rect x="5" y="6" width="1" height="1" fill="#000000"/><rect x="6" y="6" width="6" height="1" fill="#00D000"/><rect x="12" y="6" width="1" height="1" fill="#000000"/><rect x="13" y="6" width="3" height="1" fill="#C0C0C0"/><rect x="16" y="6" width="1" height="1" fill="#FFFFFF"/><rect x="17" y="6" width="1" height="1" fill="#000000"/><rect x="0" y="7" width="1" height="1" fill="#000000"/><rect x="1" y="7" width="5" height="1" fill="#FFFFFF"/><rect x="6" y="7" width="1" height="1" fill="#000000"/><rect x="7" y="7" width="4" height="1" fill="#00D000"/><rect x="11" y="7" width="1" height="1" fill="#000000"/><rect x="12" y="7" width="5" height="1" fill="#FFFFFF"/><rect x="17" y="7" width="1" height="1" fill="#000000"/><rect x="0" y="8" width="8" height="1" fill="#000000"/><rect x="8" y="8" width="2" height="1" fill="#00D000"/><rect x="10" y="8" width="8" height="1" fill="#000000"/><rect x="9" y="9" width="2" height="1" fill="#000000"/><rect x="0" y="10" width="18" height="1" fill="#000000"/><rect x="0" y="11" width="1" height="1" fill="#000000"/><rect x="1" y="11" width="16" height="1" fill="#FFFFFF"/><rect x="17" y="11" width="1" height="1" fill="#000000"/><rect x="0" y="12" width="1" height="1" fill="#000000"/><rect x="1" y="12" width="16" height="1" fill="#FFFFFF"/><rect x="17" y="12" width="1" height="1" fill="#000000"/><rect x="0" y="13" width="18" height="1" fill="#000000"/></svg>
<svg class="a" style="left:832px;top:540px" width="17" height="13" viewBox="0 0 17 13" shape-rendering="crispEdges"><rect x="5" y="0" width="7" height="1" fill="#000000"/><rect x="4" y="1" width="2" height="1" fill="#000000"/><rect x="11" y="1" width="2" height="1" fill="#000000"/><rect x="4" y="2" width="1" height="1" fill="#000000"/><rect x="12" y="2" width="1" height="1" fill="#000000"/><rect x="3" y="3" width="11" height="1" fill="#000000"/><rect x="2" y="4" width="13" height="1" fill="#000000"/><rect x="1" y="5" width="15" height="1" fill="#000000"/><rect x="0" y="6" width="4" height="1" fill="#000000"/><rect x="4" y="6" width="1" height="1" fill="#FFFFFF"/><rect x="5" y="6" width="2" height="1" fill="#000000"/><rect x="7" y="6" width="4" height="1" fill="#FFFFFF"/><rect x="11" y="6" width="6" height="1" fill="#000000"/><rect x="0" y="7" width="3" height="1" fill="#000000"/><rect x="3" y="7" width="2" height="1" fill="#FFFFFF"/><rect x="5" y="7" width="2" height="1" fill="#000000"/><rect x="7" y="7" width="1" height="1" fill="#FFFFFF"/><rect x="8" y="7" width="2" height="1" fill="#000000"/><rect x="10" y="7" width="1" height="1" fill="#FFFFFF"/><rect x="11" y="7" width="6" height="1" fill="#000000"/><rect x="0" y="8" width="4" height="1" fill="#000000"/><rect x="4" y="8" width="1" height="1" fill="#FFFFFF"/><rect x="5" y="8" width="2" height="1" fill="#000000"/><rect x="7" y="8" width="1" height="1" fill="#FFFFFF"/><rect x="8" y="8" width="2" height="1" fill="#000000"/><rect x="10" y="8" width="1" height="1" fill="#FFFFFF"/><rect x="11" y="8" width="6" height="1" fill="#000000"/><rect x="0" y="9" width="4" height="1" fill="#000000"/><rect x="4" y="9" width="1" height="1" fill="#FFFFFF"/><rect x="5" y="9" width="2" height="1" fill="#000000"/><rect x="7" y="9" width="1" height="1" fill="#FFFFFF"/><rect x="8" y="9" width="2" height="1" fill="#000000"/><rect x="10" y="9" width="1" height="1" fill="#FFFFFF"/><rect x="11" y="9" width="6" height="1" fill="#000000"/><rect x="0" y="10" width="3" height="1" fill="#000000"/><rect x="3" y="10" width="3" height="1" fill="#FFFFFF"/><rect x="6" y="10" width="1" height="1" fill="#000000"/><rect x="7" y="10" width="4" height="1" fill="#FFFFFF"/><rect x="11" y="10" width="6" height="1" fill="#000000"/><rect x="1" y="11" width="15" height="1" fill="#000000"/><rect x="2" y="12" width="13" height="1" fill="#000000"/></svg>
<svg class="a" style="left:6px;top:1004px" width="16" height="14" viewBox="0 0 16 14" shape-rendering="crispEdges"><rect x="9" y="0" width="4" height="1" fill="#000000"/><rect x="7" y="1" width="8" height="1" fill="#000000"/><rect x="0" y="2" width="1" height="1" fill="#000000"/><rect x="6" y="2" width="3" height="1" fill="#000000"/><rect x="9" y="2" width="1" height="1" fill="#FF0000"/><rect x="10" y="2" width="2" height="1" fill="#000000"/><rect x="12" y="2" width="1" height="1" fill="#00D000"/><rect x="13" y="2" width="3" height="1" fill="#000000"/><rect x="0" y="3" width="1" height="1" fill="#000000"/><rect x="2" y="3" width="6" height="1" fill="#000000"/><rect x="8" y="3" width="2" height="1" fill="#FF0000"/><rect x="10" y="3" width="2" height="1" fill="#000000"/><rect x="12" y="3" width="2" height="1" fill="#00D000"/><rect x="14" y="3" width="2" height="1" fill="#000000"/><rect x="2" y="4" width="6" height="1" fill="#000000"/><rect x="8" y="4" width="2" height="1" fill="#FF0000"/><rect x="10" y="4" width="2" height="1" fill="#000000"/><rect x="12" y="4" width="2" height="1" fill="#00D000"/><rect x="14" y="4" width="2" height="1" fill="#000000"/><rect x="0" y="5" width="1" height="1" fill="#FF0000"/><rect x="6" y="5" width="2" height="1" fill="#000000"/><rect x="8" y="5" width="1" height="1" fill="#FF0000"/><rect x="9" y="5" width="4" height="1" fill="#000000"/><rect x="13" y="5" width="1" height="1" fill="#00D000"/><rect x="14" y="5" width="2" height="1" fill="#000000"/><rect x="0" y="6" width="1" height="1" fill="#FF0000"/><rect x="2" y="6" width="4" height="1" fill="#FF0000"/><rect x="6" y="6" width="10" height="1" fill="#000000"/><rect x="2" y="7" width="4" height="1" fill="#FF0000"/><rect x="6" y="7" width="3" height="1" fill="#000000"/><rect x="9" y="7" width="1" height="1" fill="#0000FF"/><rect x="10" y="7" width="2" height="1" fill="#000000"/><rect x="12" y="7" width="1" height="1" fill="#FFFF00"/><rect x="13" y="7" width="3" height="1" fill="#000000"/><rect x="0" y="8" width="1" height="1" fill="#0000FF"/><rect x="6" y="8" width="2" height="1" fill="#000000"/><rect x="8" y="8" width="2" height="1" fill="#0000FF"/><rect x="10" y="8" width="2" height="1" fill="#000000"/><rect x="12" y="8" width="2" height="1" fill="#FFFF00"/><rect x="14" y="8" width="2" height="1" fill="#000000"/><rect x="0" y="9" width="1" height="1" fill="#0000FF"/><rect x="2" y="9" width="4" height="1" fill="#0000FF"/><rect x="6" y="9" width="2" height="1" fill="#000000"/><rect x="8" y="9" width="2" height="1" fill="#0000FF"/><rect x="10" y="9" width="2" height="1" fill="#000000"/><rect x="12" y="9" width="2" height="1" fill="#FFFF00"/><rect x="14" y="9" width="2" height="1" fill="#000000"/><rect x="2" y="10" width="4" height="1" fill="#0000FF"/><rect x="6" y="10" width="2" height="1" fill="#000000"/><rect x="8" y="10" width="1" height="1" fill="#0000FF"/><rect x="9" y="10" width="4" height="1" fill="#000000"/><rect x="13" y="10" width="1" height="1" fill="#FFFF00"/><rect x="14" y="10" width="2" height="1" fill="#000000"/><rect x="0" y="11" width="1" height="1" fill="#000000"/><rect x="6" y="11" width="10" height="1" fill="#000000"/><rect x="0" y="12" width="1" height="1" fill="#000000"/><rect x="2" y="12" width="7" height="1" fill="#000000"/><rect x="11" y="12" width="5" height="1" fill="#000000"/><rect x="2" y="13" width="5" height="1" fill="#000000"/><rect x="13" y="13" width="2" height="1" fill="#000000"/></svg>
<svg class="a" style="left:158px;top:1003px" width="16" height="16" viewBox="0 0 16 16" shape-rendering="crispEdges"><rect x="0" y="0" width="16" height="1" fill="#00FFFF"/><rect x="0" y="1" width="16" height="1" fill="#00FFFF"/><rect x="0" y="2" width="1" height="1" fill="#00FFFF"/><rect x="1" y="2" width="6" height="1" fill="#0000D0"/><rect x="7" y="2" width="1" height="1" fill="#00FFFF"/><rect x="8" y="2" width="6" height="1" fill="#0000D0"/><rect x="14" y="2" width="2" height="1" fill="#00FFFF"/><rect x="0" y="3" width="1" height="1" fill="#00FFFF"/><rect x="1" y="3" width="1" height="1" fill="#0000D0"/><rect x="2" y="3" width="4" height="1" fill="#FFFF00"/><rect x="6" y="3" width="1" height="1" fill="#0000D0"/><rect x="7" y="3" width="1" height="1" fill="#00FFFF"/><rect x="8" y="3" width="1" height="1" fill="#0000D0"/><rect x="9" y="3" width="4" height="1" fill="#FFFF00"/><rect x="13" y="3" width="1" height="1" fill="#0000D0"/><rect x="14" y="3" width="2" height="1" fill="#00FFFF"/><rect x="0" y="4" width="1" height="1" fill="#00FFFF"/><rect x="1" y="4" width="6" height="1" fill="#0000D0"/><rect x="7" y="4" width="1" height="1" fill="#00FFFF"/><rect x="8" y="4" width="6" height="1" fill="#0000D0"/><rect x="14" y="4" width="2" height="1" fill="#00FFFF"/><rect x="0" y="5" width="1" height="1" fill="#00FFFF"/><rect x="1" y="5" width="1" height="1" fill="#0000D0"/><rect x="2" y="5" width="4" height="1" fill="#00FFFF"/><rect x="6" y="5" width="1" height="1" fill="#0000D0"/><rect x="7" y="5" width="1" height="1" fill="#00FFFF"/><rect x="8" y="5" width="1" height="1" fill="#0000D0"/><rect x="9" y="5" width="4" height="1" fill="#00FFFF"/><rect x="13" y="5" width="1" height="1" fill="#0000D0"/><rect x="14" y="5" width="2" height="1" fill="#00FFFF"/><rect x="0" y="6" width="1" height="1" fill="#00FFFF"/><rect x="1" y="6" width="6" height="1" fill="#0000D0"/><rect x="7" y="6" width="1" height="1" fill="#00FFFF"/><rect x="8" y="6" width="6" height="1" fill="#0000D0"/><rect x="14" y="6" width="2" height="1" fill="#00FFFF"/><rect x="0" y="7" width="1" height="1" fill="#00FFFF"/><rect x="1" y="7" width="1" height="1" fill="#0000D0"/><rect x="2" y="7" width="4" height="1" fill="#00FFFF"/><rect x="6" y="7" width="1" height="1" fill="#0000D0"/><rect x="7" y="7" width="1" height="1" fill="#00FFFF"/><rect x="8" y="7" width="1" height="1" fill="#0000D0"/><rect x="9" y="7" width="4" height="1" fill="#00FFFF"/><rect x="13" y="7" width="1" height="1" fill="#0000D0"/><rect x="14" y="7" width="2" height="1" fill="#00FFFF"/><rect x="0" y="8" width="1" height="1" fill="#00FFFF"/><rect x="1" y="8" width="6" height="1" fill="#0000D0"/><rect x="7" y="8" width="1" height="1" fill="#00FFFF"/><rect x="8" y="8" width="6" height="1" fill="#0000D0"/><rect x="14" y="8" width="2" height="1" fill="#00FFFF"/><rect x="0" y="9" width="1" height="1" fill="#00FFFF"/><rect x="1" y="9" width="1" height="1" fill="#0000D0"/><rect x="2" y="9" width="3" height="1" fill="#00FFFF"/><rect x="5" y="9" width="2" height="1" fill="#0000D0"/><rect x="7" y="9" width="1" height="1" fill="#00FFFF"/><rect x="8" y="9" width="6" height="1" fill="#0000D0"/><rect x="14" y="9" width="2" height="1" fill="#00FFFF"/><rect x="0" y="10" width="1" height="1" fill="#00FFFF"/><rect x="1" y="10" width="6" height="1" fill="#0000D0"/><rect x="7" y="10" width="1" height="1" fill="#00FFFF"/><rect x="8" y="10" width="6" height="1" fill="#0000D0"/><rect x="14" y="10" width="2" height="1" fill="#00FFFF"/><rect x="0" y="11" width="1" height="1" fill="#00FFFF"/><rect x="1" y="11" width="6" height="1" fill="#0000D0"/><rect x="7" y="11" width="1" height="1" fill="#00FFFF"/><rect x="8" y="11" width="6" height="1" fill="#0000D0"/><rect x="14" y="11" width="2" height="1" fill="#00FFFF"/><rect x="0" y="12" width="1" height="1" fill="#00FFFF"/><rect x="1" y="12" width="6" height="1" fill="#0000D0"/><rect x="7" y="12" width="1" height="1" fill="#00FFFF"/><rect x="8" y="12" width="6" height="1" fill="#0000D0"/><rect x="14" y="12" width="2" height="1" fill="#00FFFF"/><rect x="0" y="13" width="1" height="1" fill="#00FFFF"/><rect x="1" y="13" width="6" height="1" fill="#0000D0"/><rect x="7" y="13" width="1" height="1" fill="#00FFFF"/><rect x="8" y="13" width="6" height="1" fill="#0000D0"/><rect x="14" y="13" width="2" height="1" fill="#00FFFF"/><rect x="0" y="14" width="16" height="1" fill="#00FFFF"/><rect x="0" y="15" width="1" height="1" fill="#0000D0"/><rect x="1" y="15" width="1" height="1" fill="#000000"/><rect x="2" y="15" width="1" height="1" fill="#0000D0"/><rect x="3" y="15" width="1" height="1" fill="#000000"/><rect x="4" y="15" width="1" height="1" fill="#0000D0"/><rect x="5" y="15" width="1" height="1" fill="#000000"/><rect x="6" y="15" width="1" height="1" fill="#0000D0"/><rect x="7" y="15" width="1" height="1" fill="#000000"/><rect x="8" y="15" width="1" height="1" fill="#0000D0"/><rect x="9" y="15" width="1" height="1" fill="#000000"/><rect x="10" y="15" width="1" height="1" fill="#0000D0"/><rect x="11" y="15" width="1" height="1" fill="#000000"/><rect x="12" y="15" width="1" height="1" fill="#0000D0"/><rect x="13" y="15" width="3" height="1" fill="#000000"/></svg>
<svg class="a" style="left:321px;top:1003px" width="16" height="16" viewBox="0 0 16 16" shape-rendering="crispEdges"><rect x="0" y="0" width="16" height="1" fill="#00FFFF"/><rect x="0" y="1" width="16" height="1" fill="#00FFFF"/><rect x="0" y="2" width="1" height="1" fill="#00FFFF"/><rect x="1" y="2" width="6" height="1" fill="#0000D0"/><rect x="7" y="2" width="1" height="1" fill="#00FFFF"/><rect x="8" y="2" width="6" height="1" fill="#0000D0"/><rect x="14" y="2" width="2" height="1" fill="#00FFFF"/><rect x="0" y="3" width="1" height="1" fill="#00FFFF"/><rect x="1" y="3" width="1" height="1" fill="#0000D0"/><rect x="2" y="3" width="4" height="1" fill="#FFFF00"/><rect x="6" y="3" width="1" height="1" fill="#0000D0"/><rect x="7" y="3" width="1" height="1" fill="#00FFFF"/><rect x="8" y="3" width="1" height="1" fill="#0000D0"/><rect x="9" y="3" width="4" height="1" fill="#FFFF00"/><rect x="13" y="3" width="1" height="1" fill="#0000D0"/><rect x="14" y="3" width="2" height="1" fill="#00FFFF"/><rect x="0" y="4" width="1" height="1" fill="#00FFFF"/><rect x="1" y="4" width="6" height="1" fill="#0000D0"/><rect x="7" y="4" width="1" height="1" fill="#00FFFF"/><rect x="8" y="4" width="6" height="1" fill="#0000D0"/><rect x="14" y="4" width="2" height="1" fill="#00FFFF"/><rect x="0" y="5" width="1" height="1" fill="#00FFFF"/><rect x="1" y="5" width="1" height="1" fill="#0000D0"/><rect x="2" y="5" width="4" height="1" fill="#00FFFF"/><rect x="6" y="5" width="1" height="1" fill="#0000D0"/><rect x="7" y="5" width="1" height="1" fill="#00FFFF"/><rect x="8" y="5" width="1" height="1" fill="#0000D0"/><rect x="9" y="5" width="4" height="1" fill="#00FFFF"/><rect x="13" y="5" width="1" height="1" fill="#0000D0"/><rect x="14" y="5" width="2" height="1" fill="#00FFFF"/><rect x="0" y="6" width="1" height="1" fill="#00FFFF"/><rect x="1" y="6" width="6" height="1" fill="#0000D0"/><rect x="7" y="6" width="1" height="1" fill="#00FFFF"/><rect x="8" y="6" width="6" height="1" fill="#0000D0"/><rect x="14" y="6" width="2" height="1" fill="#00FFFF"/><rect x="0" y="7" width="1" height="1" fill="#00FFFF"/><rect x="1" y="7" width="1" height="1" fill="#0000D0"/><rect x="2" y="7" width="4" height="1" fill="#00FFFF"/><rect x="6" y="7" width="1" height="1" fill="#0000D0"/><rect x="7" y="7" width="1" height="1" fill="#00FFFF"/><rect x="8" y="7" width="1" height="1" fill="#0000D0"/><rect x="9" y="7" width="4" height="1" fill="#00FFFF"/><rect x="13" y="7" width="1" height="1" fill="#0000D0"/><rect x="14" y="7" width="2" height="1" fill="#00FFFF"/><rect x="0" y="8" width="1" height="1" fill="#00FFFF"/><rect x="1" y="8" width="6" height="1" fill="#0000D0"/><rect x="7" y="8" width="1" height="1" fill="#00FFFF"/><rect x="8" y="8" width="6" height="1" fill="#0000D0"/><rect x="14" y="8" width="2" height="1" fill="#00FFFF"/><rect x="0" y="9" width="1" height="1" fill="#00FFFF"/><rect x="1" y="9" width="1" height="1" fill="#0000D0"/><rect x="2" y="9" width="3" height="1" fill="#00FFFF"/><rect x="5" y="9" width="2" height="1" fill="#0000D0"/><rect x="7" y="9" width="1" height="1" fill="#00FFFF"/><rect x="8" y="9" width="6" height="1" fill="#0000D0"/><rect x="14" y="9" width="2" height="1" fill="#00FFFF"/><rect x="0" y="10" width="1" height="1" fill="#00FFFF"/><rect x="1" y="10" width="6" height="1" fill="#0000D0"/><rect x="7" y="10" width="1" height="1" fill="#00FFFF"/><rect x="8" y="10" width="6" height="1" fill="#0000D0"/><rect x="14" y="10" width="2" height="1" fill="#00FFFF"/><rect x="0" y="11" width="1" height="1" fill="#00FFFF"/><rect x="1" y="11" width="6" height="1" fill="#0000D0"/><rect x="7" y="11" width="1" height="1" fill="#00FFFF"/><rect x="8" y="11" width="6" height="1" fill="#0000D0"/><rect x="14" y="11" width="2" height="1" fill="#00FFFF"/><rect x="0" y="12" width="1" height="1" fill="#00FFFF"/><rect x="1" y="12" width="6" height="1" fill="#0000D0"/><rect x="7" y="12" width="1" height="1" fill="#00FFFF"/><rect x="8" y="12" width="6" height="1" fill="#0000D0"/><rect x="14" y="12" width="2" height="1" fill="#00FFFF"/><rect x="0" y="13" width="1" height="1" fill="#00FFFF"/><rect x="1" y="13" width="6" height="1" fill="#0000D0"/><rect x="7" y="13" width="1" height="1" fill="#00FFFF"/><rect x="8" y="13" width="6" height="1" fill="#0000D0"/><rect x="14" y="13" width="2" height="1" fill="#00FFFF"/><rect x="0" y="14" width="16" height="1" fill="#00FFFF"/><rect x="0" y="15" width="1" height="1" fill="#0000D0"/><rect x="1" y="15" width="1" height="1" fill="#000000"/><rect x="2" y="15" width="1" height="1" fill="#0000D0"/><rect x="3" y="15" width="1" height="1" fill="#000000"/><rect x="4" y="15" width="1" height="1" fill="#0000D0"/><rect x="5" y="15" width="1" height="1" fill="#000000"/><rect x="6" y="15" width="1" height="1" fill="#0000D0"/><rect x="7" y="15" width="1" height="1" fill="#000000"/><rect x="8" y="15" width="1" height="1" fill="#0000D0"/><rect x="9" y="15" width="1" height="1" fill="#000000"/><rect x="10" y="15" width="1" height="1" fill="#0000D0"/><rect x="11" y="15" width="1" height="1" fill="#000000"/><rect x="12" y="15" width="1" height="1" fill="#0000D0"/><rect x="13" y="15" width="3" height="1" fill="#000000"/></svg>
<svg class="a" style="left:484px;top:1003px" width="16" height="15" viewBox="0 0 16 15" shape-rendering="crispEdges"><rect x="4" y="0" width="9" height="1" fill="#000000"/><rect x="4" y="1" width="1" height="1" fill="#000000"/><rect x="5" y="1" width="7" height="1" fill="#FFFFFF"/><rect x="12" y="1" width="2" height="1" fill="#000000"/><rect x="0" y="2" width="10" height="1" fill="#0000FF"/><rect x="10" y="2" width="2" height="1" fill="#FFFFFF"/><rect x="12" y="2" width="1" height="1" fill="#000000"/><rect x="13" y="2" width="1" height="1" fill="#FFFFFF"/><rect x="14" y="2" width="1" height="1" fill="#000000"/><rect x="0" y="3" width="1" height="1" fill="#0000FF"/><rect x="1" y="3" width="1" height="1" fill="#000080"/><rect x="2" y="3" width="2" height="1" fill="#0000FF"/><rect x="4" y="3" width="1" height="1" fill="#000080"/><rect x="5" y="3" width="2" height="1" fill="#0000FF"/><rect x="7" y="3" width="1" height="1" fill="#000080"/><rect x="8" y="3" width="2" height="1" fill="#0000FF"/><rect x="10" y="3" width="2" height="1" fill="#FFFFFF"/><rect x="12" y="3" width="4" height="1" fill="#000000"/><rect x="0" y="4" width="1" height="1" fill="#0000FF"/><rect x="1" y="4" width="1" height="1" fill="#000080"/><rect x="2" y="4" width="2" height="1" fill="#0000FF"/><rect x="4" y="4" width="1" height="1" fill="#000080"/><rect x="5" y="4" width="2" height="1" fill="#0000FF"/><rect x="7" y="4" width="1" height="1" fill="#000080"/><rect x="8" y="4" width="2" height="1" fill="#0000FF"/><rect x="10" y="4" width="2" height="1" fill="#808080"/><rect x="12" y="4" width="3" height="1" fill="#FFFFFF"/><rect x="15" y="4" width="1" height="1" fill="#000000"/><rect x="0" y="5" width="1" height="1" fill="#0000FF"/><rect x="1" y="5" width="1" height="1" fill="#000080"/><rect x="2" y="5" width="1" height="1" fill="#0000FF"/><rect x="3" y="5" width="1" height="1" fill="#000080"/><rect x="4" y="5" width="1" height="1" fill="#0000FF"/><rect x="5" y="5" width="1" height="1" fill="#000080"/><rect x="6" y="5" width="1" height="1" fill="#0000FF"/><rect x="7" y="5" width="1" height="1" fill="#000080"/><rect x="8" y="5" width="2" height="1" fill="#0000FF"/><rect x="10" y="5" width="5" height="1" fill="#FFFFFF"/><rect x="15" y="5" width="1" height="1" fill="#000000"/><rect x="0" y="6" width="1" height="1" fill="#0000FF"/><rect x="1" y="6" width="1" height="1" fill="#000080"/><rect x="2" y="6" width="1" height="1" fill="#0000FF"/><rect x="3" y="6" width="1" height="1" fill="#000080"/><rect x="4" y="6" width="1" height="1" fill="#0000FF"/><rect x="5" y="6" width="1" height="1" fill="#000080"/><rect x="6" y="6" width="1" height="1" fill="#0000FF"/><rect x="7" y="6" width="1" height="1" fill="#000080"/><rect x="8" y="6" width="2" height="1" fill="#0000FF"/><rect x="10" y="6" width="3" height="1" fill="#808080"/><rect x="13" y="6" width="2" height="1" fill="#FFFFFF"/><rect x="15" y="6" width="1" height="1" fill="#000000"/><rect x="0" y="7" width="2" height="1" fill="#0000FF"/><rect x="2" y="7" width="1" height="1" fill="#000080"/><rect x="3" y="7" width="3" height="1" fill="#0000FF"/><rect x="6" y="7" width="1" height="1" fill="#000080"/><rect x="7" y="7" width="3" height="1" fill="#0000FF"/><rect x="10" y="7" width="5" height="1" fill="#FFFFFF"/><rect x="15" y="7" width="1" height="1" fill="#000000"/><rect x="0" y="8" width="2" height="1" fill="#0000FF"/><rect x="2" y="8" width="1" height="1" fill="#000080"/><rect x="3" y="8" width="3" height="1" fill="#0000FF"/><rect x="6" y="8" width="1" height="1" fill="#000080"/><rect x="7" y="8" width="3" height="1" fill="#0000FF"/><rect x="10" y="8" width="3" height="1" fill="#808080"/><rect x="13" y="8" width="2" height="1" fill="#FFFFFF"/><rect x="15" y="8" width="1" height="1" fill="#000000"/><rect x="0" y="9" width="10" height="1" fill="#0000FF"/><rect x="10" y="9" width="5" height="1" fill="#FFFFFF"/><rect x="15" y="9" width="1" height="1" fill="#000000"/><rect x="4" y="10" width="1" height="1" fill="#000000"/><rect x="5" y="10" width="1" height="1" fill="#FFFFFF"/><rect x="6" y="10" width="7" height="1" fill="#808080"/><rect x="13" y="10" width="2" height="1" fill="#FFFFFF"/><rect x="15" y="10" width="1" height="1" fill="#000000"/><rect x="4" y="11" width="1" height="1" fill="#000000"/><rect x="5" y="11" width="10" height="1" fill="#FFFFFF"/><rect x="15" y="11" width="1" height="1" fill="#000000"/><rect x="4" y="12" width="1" height="1" fill="#000000"/><rect x="5" y="12" width="1" height="1" fill="#FFFFFF"/><rect x="6" y="12" width="7" height="1" fill="#808080"/><rect x="13" y="12" width="2" height="1" fill="#FFFFFF"/><rect x="15" y="12" width="1" height="1" fill="#000000"/><rect x="4" y="13" width="1" height="1" fill="#000000"/><rect x="5" y="13" width="10" height="1" fill="#FFFFFF"/><rect x="15" y="13" width="1" height="1" fill="#000000"/><rect x="4" y="14" width="12" height="1" fill="#000000"/></svg>
<svg class="a" style="left:1116px;top:1003px" width="16" height="14" viewBox="0 0 16 14" shape-rendering="crispEdges"><rect x="7" y="0" width="1" height="1" fill="#000000"/><rect x="6" y="1" width="2" height="1" fill="#000000"/><rect x="5" y="2" width="1" height="1" fill="#000000"/><rect x="6" y="2" width="1" height="1" fill="#FFFF00"/><rect x="7" y="2" width="1" height="1" fill="#000000"/><rect x="12" y="2" width="1" height="1" fill="#808080"/><rect x="4" y="3" width="1" height="1" fill="#000000"/><rect x="5" y="3" width="2" height="1" fill="#FFFF00"/><rect x="7" y="3" width="1" height="1" fill="#000000"/><rect x="11" y="3" width="1" height="1" fill="#808080"/><rect x="1" y="4" width="3" height="1" fill="#000000"/><rect x="4" y="4" width="3" height="1" fill="#FFFF00"/><rect x="7" y="4" width="1" height="1" fill="#000000"/><rect x="10" y="4" width="1" height="1" fill="#808080"/><rect x="0" y="5" width="1" height="1" fill="#000000"/><rect x="1" y="5" width="6" height="1" fill="#FFFF00"/><rect x="7" y="5" width="1" height="1" fill="#000000"/><rect x="0" y="6" width="1" height="1" fill="#000000"/><rect x="1" y="6" width="6" height="1" fill="#FFFF00"/><rect x="7" y="6" width="1" height="1" fill="#000000"/><rect x="9" y="6" width="3" height="1" fill="#808080"/><rect x="0" y="7" width="1" height="1" fill="#000000"/><rect x="1" y="7" width="6" height="1" fill="#FFFF00"/><rect x="7" y="7" width="1" height="1" fill="#000000"/><rect x="0" y="8" width="1" height="1" fill="#000000"/><rect x="1" y="8" width="3" height="1" fill="#BFBF00"/><rect x="4" y="8" width="3" height="1" fill="#FFFF00"/><rect x="7" y="8" width="1" height="1" fill="#000000"/><rect x="10" y="8" width="1" height="1" fill="#808080"/><rect x="1" y="9" width="3" height="1" fill="#000000"/><rect x="4" y="9" width="1" height="1" fill="#BFBF00"/><rect x="5" y="9" width="2" height="1" fill="#FFFF00"/><rect x="7" y="9" width="1" height="1" fill="#000000"/><rect x="11" y="9" width="1" height="1" fill="#808080"/><rect x="4" y="10" width="1" height="1" fill="#000000"/><rect x="5" y="10" width="1" height="1" fill="#BFBF00"/><rect x="6" y="10" width="1" height="1" fill="#FFFF00"/><rect x="7" y="10" width="1" height="1" fill="#000000"/><rect x="12" y="10" width="1" height="1" fill="#808080"/><rect x="5" y="11" width="1" height="1" fill="#000000"/><rect x="6" y="11" width="1" height="1" fill="#BFBF00"/><rect x="7" y="11" width="1" height="1" fill="#000000"/><rect x="6" y="12" width="2" height="1" fill="#000000"/><rect x="7" y="13" width="1" height="1" fill="#000000"/></svg>
<svg class="a" style="left:1152px;top:1003px" width="16" height="16" viewBox="0 0 16 16" shape-rendering="crispEdges"><rect x="0" y="0" width="2" height="1" fill="#000000"/><rect x="2" y="0" width="1" height="1" fill="#FFFFFF"/><rect x="3" y="0" width="1" height="1" fill="#0000D0"/><rect x="4" y="0" width="2" height="1" fill="#FFFFFF"/><rect x="6" y="0" width="2" height="1" fill="#000000"/><rect x="8" y="0" width="1" height="1" fill="#FFFFFF"/><rect x="9" y="0" width="1" height="1" fill="#0000D0"/><rect x="10" y="0" width="2" height="1" fill="#FFFFFF"/><rect x="12" y="0" width="2" height="1" fill="#000000"/><rect x="14" y="0" width="1" height="1" fill="#FFFFFF"/><rect x="15" y="0" width="1" height="1" fill="#0000D0"/><rect x="0" y="1" width="1" height="1" fill="#FFFFFF"/><rect x="1" y="1" width="1" height="1" fill="#000000"/><rect x="2" y="1" width="3" height="1" fill="#FFFFFF"/><rect x="5" y="1" width="1" height="1" fill="#000000"/><rect x="6" y="1" width="1" height="1" fill="#FFFFFF"/><rect x="7" y="1" width="1" height="1" fill="#000000"/><rect x="8" y="1" width="3" height="1" fill="#FFFFFF"/><rect x="11" y="1" width="1" height="1" fill="#000000"/><rect x="12" y="1" width="1" height="1" fill="#FFFFFF"/><rect x="13" y="1" width="1" height="1" fill="#000000"/><rect x="14" y="1" width="2" height="1" fill="#FFFFFF"/><rect x="0" y="2" width="2" height="1" fill="#FFFFFF"/><rect x="2" y="2" width="1" height="1" fill="#000000"/><rect x="3" y="2" width="1" height="1" fill="#FFFFFF"/><rect x="4" y="2" width="1" height="1" fill="#000000"/><rect x="5" y="2" width="3" height="1" fill="#FFFFFF"/><rect x="8" y="2" width="1" height="1" fill="#000000"/><rect x="9" y="2" width="1" height="1" fill="#FFFFFF"/><rect x="10" y="2" width="1" height="1" fill="#000000"/><rect x="11" y="2" width="3" height="1" fill="#FFFFFF"/><rect x="14" y="2" width="1" height="1" fill="#000000"/><rect x="15" y="2" width="1" height="1" fill="#FFFFFF"/><rect x="0" y="3" width="1" height="1" fill="#0000D0"/><rect x="1" y="3" width="2" height="1" fill="#FFFFFF"/><rect x="3" y="3" width="2" height="1" fill="#000000"/><rect x="5" y="3" width="1" height="1" fill="#FFFFFF"/><rect x="6" y="3" width="1" height="1" fill="#0000D0"/><rect x="7" y="3" width="2" height="1" fill="#FFFFFF"/><rect x="9" y="3" width="2" height="1" fill="#000000"/><rect x="11" y="3" width="1" height="1" fill="#FFFFFF"/><rect x="12" y="3" width="1" height="1" fill="#0000D0"/><rect x="13" y="3" width="2" height="1" fill="#FFFFFF"/><rect x="15" y="3" width="1" height="1" fill="#000000"/><rect x="0" y="4" width="2" height="1" fill="#FFFFFF"/><rect x="2" y="4" width="1" height="1" fill="#000000"/><rect x="3" y="4" width="1" height="1" fill="#FFFFFF"/><rect x="4" y="4" width="1" height="1" fill="#000000"/><rect x="5" y="4" width="3" height="1" fill="#FFFFFF"/><rect x="8" y="4" width="1" height="1" fill="#000000"/><rect x="9" y="4" width="1" height="1" fill="#FFFFFF"/><rect x="10" y="4" width="1" height="1" fill="#000000"/><rect x="11" y="4" width="3" height="1" fill="#FFFFFF"/><rect x="14" y="4" width="1" height="1" fill="#000000"/><rect x="15" y="4" width="1" height="1" fill="#FFFFFF"/><rect x="0" y="5" width="1" height="1" fill="#FFFFFF"/><rect x="1" y="5" width="1" height="1" fill="#000000"/><rect x="2" y="5" width="3" height="1" fill="#FFFFFF"/><rect x="5" y="5" width="1" height="1" fill="#000000"/><rect x="6" y="5" width="1" height="1" fill="#FFFFFF"/><rect x="7" y="5" width="1" height="1" fill="#000000"/><rect x="8" y="5" width="3" height="1" fill="#FFFFFF"/><rect x="11" y="5" width="1" height="1" fill="#000000"/><rect x="12" y="5" width="1" height="1" fill="#FFFFFF"/><rect x="13" y="5" width="1" height="1" fill="#000000"/><rect x="14" y="5" width="2" height="1" fill="#FFFFFF"/><rect x="0" y="6" width="2" height="1" fill="#000000"/><rect x="2" y="6" width="1" height="1" fill="#FFFFFF"/><rect x="3" y="6" width="1" height="1" fill="#0000D0"/><rect x="4" y="6" width="2" height="1" fill="#FFFFFF"/><rect x="6" y="6" width="2" height="1" fill="#000000"/><rect x="8" y="6" width="1" height="1" fill="#FFFFFF"/><rect x="9" y="6" width="1" height="1" fill="#0000D0"/><rect x="10" y="6" width="2" height="1" fill="#FFFFFF"/><rect x="12" y="6" width="2" height="1" fill="#000000"/><rect x="14" y="6" width="1" height="1" fill="#FFFFFF"/><rect x="15" y="6" width="1" height="1" fill="#0000D0"/><rect x="0" y="7" width="1" height="1" fill="#FFFFFF"/><rect x="1" y="7" width="1" height="1" fill="#000000"/><rect x="2" y="7" width="3" height="1" fill="#FFFFFF"/><rect x="5" y="7" width="1" height="1" fill="#000000"/><rect x="6" y="7" width="1" height="1" fill="#FFFFFF"/><rect x="7" y="7" width="1" height="1" fill="#000000"/><rect x="8" y="7" width="3" height="1" fill="#FFFFFF"/><rect x="11" y="7" width="1" height="1" fill="#000000"/><rect x="12" y="7" width="1" height="1" fill="#FFFFFF"/><rect x="13" y="7" width="1" height="1" fill="#000000"/><rect x="14" y="7" width="2" height="1" fill="#FFFFFF"/><rect x="0" y="8" width="2" height="1" fill="#FFFFFF"/><rect x="2" y="8" width="1" height="1" fill="#000000"/><rect x="3" y="8" width="1" height="1" fill="#FFFFFF"/><rect x="4" y="8" width="1" height="1" fill="#000000"/><rect x="5" y="8" width="3" height="1" fill="#FFFFFF"/><rect x="8" y="8" width="1" height="1" fill="#000000"/><rect x="9" y="8" width="1" height="1" fill="#FFFFFF"/><rect x="10" y="8" width="1" height="1" fill="#000000"/><rect x="11" y="8" width="3" height="1" fill="#FFFFFF"/><rect x="14" y="8" width="1" height="1" fill="#000000"/><rect x="15" y="8" width="1" height="1" fill="#FFFFFF"/><rect x="0" y="9" width="1" height="1" fill="#0000D0"/><rect x="1" y="9" width="2" height="1" fill="#FFFFFF"/><rect x="3" y="9" width="2" height="1" fill="#000000"/><rect x="5" y="9" width="1" height="1" fill="#FFFFFF"/><rect x="6" y="9" width="1" height="1" fill="#0000D0"/><rect x="7" y="9" width="2" height="1" fill="#FFFFFF"/><rect x="9" y="9" width="2" height="1" fill="#000000"/><rect x="11" y="9" width="1" height="1" fill="#FFFFFF"/><rect x="12" y="9" width="1" height="1" fill="#0000D0"/><rect x="13" y="9" width="2" height="1" fill="#FFFFFF"/><rect x="15" y="9" width="1" height="1" fill="#000000"/><rect x="0" y="10" width="2" height="1" fill="#FFFFFF"/><rect x="2" y="10" width="1" height="1" fill="#000000"/><rect x="3" y="10" width="1" height="1" fill="#FFFFFF"/><rect x="4" y="10" width="1" height="1" fill="#000000"/><rect x="5" y="10" width="3" height="1" fill="#FFFFFF"/><rect x="8" y="10" width="1" height="1" fill="#000000"/><rect x="9" y="10" width="1" height="1" fill="#FFFFFF"/><rect x="10" y="10" width="1" height="1" fill="#000000"/><rect x="11" y="10" width="3" height="1" fill="#FFFFFF"/><rect x="14" y="10" width="1" height="1" fill="#000000"/><rect x="15" y="10" width="1" height="1" fill="#FFFFFF"/><rect x="0" y="11" width="1" height="1" fill="#FFFFFF"/><rect x="1" y="11" width="1" height="1" fill="#000000"/><rect x="2" y="11" width="3" height="1" fill="#FFFFFF"/><rect x="5" y="11" width="1" height="1" fill="#000000"/><rect x="6" y="11" width="1" height="1" fill="#FFFFFF"/><rect x="7" y="11" width="1" height="1" fill="#000000"/><rect x="8" y="11" width="3" height="1" fill="#FFFFFF"/><rect x="11" y="11" width="1" height="1" fill="#000000"/><rect x="12" y="11" width="1" height="1" fill="#FFFFFF"/><rect x="13" y="11" width="1" height="1" fill="#000000"/><rect x="14" y="11" width="2" height="1" fill="#FFFFFF"/><rect x="0" y="12" width="2" height="1" fill="#000000"/><rect x="2" y="12" width="1" height="1" fill="#FFFFFF"/><rect x="3" y="12" width="1" height="1" fill="#0000D0"/><rect x="4" y="12" width="2" height="1" fill="#FFFFFF"/><rect x="6" y="12" width="2" height="1" fill="#000000"/><rect x="8" y="12" width="1" height="1" fill="#FFFFFF"/><rect x="9" y="12" width="1" height="1" fill="#0000D0"/><rect x="10" y="12" width="2" height="1" fill="#FFFFFF"/><rect x="12" y="12" width="2" height="1" fill="#000000"/><rect x="14" y="12" width="1" height="1" fill="#FFFFFF"/><rect x="15" y="12" width="1" height="1" fill="#0000D0"/><rect x="0" y="13" width="1" height="1" fill="#FFFFFF"/><rect x="1" y="13" width="1" height="1" fill="#000000"/><rect x="2" y="13" width="3" height="1" fill="#FFFFFF"/><rect x="5" y="13" width="1" height="1" fill="#000000"/><rect x="6" y="13" width="1" height="1" fill="#FFFFFF"/><rect x="7" y="13" width="1" height="1" fill="#000000"/><rect x="8" y="13" width="3" height="1" fill="#FFFFFF"/><rect x="11" y="13" width="1" height="1" fill="#000000"/><rect x="12" y="13" width="1" height="1" fill="#FFFFFF"/><rect x="13" y="13" width="1" height="1" fill="#000000"/><rect x="14" y="13" width="2" height="1" fill="#FFFFFF"/><rect x="0" y="14" width="2" height="1" fill="#FFFFFF"/><rect x="2" y="14" width="1" height="1" fill="#000000"/><rect x="3" y="14" width="1" height="1" fill="#FFFFFF"/><rect x="4" y="14" width="1" height="1" fill="#000000"/><rect x="5" y="14" width="3" height="1" fill="#FFFFFF"/><rect x="8" y="14" width="1" height="1" fill="#000000"/><rect x="9" y="14" width="1" height="1" fill="#FFFFFF"/><rect x="10" y="14" width="1" height="1" fill="#000000"/><rect x="11" y="14" width="3" height="1" fill="#FFFFFF"/><rect x="14" y="14" width="1" height="1" fill="#000000"/><rect x="15" y="14" width="1" height="1" fill="#FFFFFF"/><rect x="0" y="15" width="16" height="1" fill="#000000"/></svg>
<svg class="a" style="left:1170px;top:1004px" width="16" height="14" viewBox="0 0 16 14" shape-rendering="crispEdges"><rect x="1" y="0" width="14" height="1" fill="#FFFFFF"/><rect x="0" y="1" width="8" height="1" fill="#FFFFFF"/><rect x="8" y="1" width="6" height="1" fill="#008080"/><rect x="14" y="1" width="2" height="1" fill="#FFFFFF"/><rect x="0" y="2" width="8" height="1" fill="#FFFFFF"/><rect x="8" y="2" width="7" height="1" fill="#008080"/><rect x="15" y="2" width="1" height="1" fill="#FFFFFF"/><rect x="0" y="3" width="3" height="1" fill="#FFFFFF"/><rect x="3" y="3" width="3" height="1" fill="#008080"/><rect x="6" y="3" width="2" height="1" fill="#FFFFFF"/><rect x="8" y="3" width="1" height="1" fill="#008080"/><rect x="9" y="3" width="2" height="1" fill="#FFFFFF"/><rect x="11" y="3" width="4" height="1" fill="#008080"/><rect x="15" y="3" width="1" height="1" fill="#FFFFFF"/><rect x="0" y="4" width="2" height="1" fill="#FFFFFF"/><rect x="2" y="4" width="3" height="1" fill="#008080"/><rect x="5" y="4" width="3" height="1" fill="#FFFFFF"/><rect x="8" y="4" width="1" height="1" fill="#008080"/><rect x="9" y="4" width="3" height="1" fill="#FFFFFF"/><rect x="12" y="4" width="3" height="1" fill="#008080"/><rect x="15" y="4" width="1" height="1" fill="#FFFFFF"/><rect x="0" y="5" width="1" height="1" fill="#FFFFFF"/><rect x="1" y="5" width="3" height="1" fill="#008080"/><rect x="4" y="5" width="4" height="1" fill="#FFFFFF"/><rect x="8" y="5" width="2" height="1" fill="#008080"/><rect x="10" y="5" width="3" height="1" fill="#FFFFFF"/><rect x="13" y="5" width="2" height="1" fill="#008080"/><rect x="15" y="5" width="1" height="1" fill="#FFFFFF"/><rect x="0" y="6" width="1" height="1" fill="#FFFFFF"/><rect x="1" y="6" width="3" height="1" fill="#008080"/><rect x="4" y="6" width="4" height="1" fill="#FFFFFF"/><rect x="8" y="6" width="2" height="1" fill="#008080"/><rect x="10" y="6" width="3" height="1" fill="#FFFFFF"/><rect x="13" y="6" width="2" height="1" fill="#008080"/><rect x="15" y="6" width="1" height="1" fill="#FFFFFF"/><rect x="0" y="7" width="1" height="1" fill="#FFFFFF"/><rect x="1" y="7" width="3" height="1" fill="#008080"/><rect x="4" y="7" width="4" height="1" fill="#FFFFFF"/><rect x="8" y="7" width="2" height="1" fill="#008080"/><rect x="10" y="7" width="3" height="1" fill="#FFFFFF"/><rect x="13" y="7" width="2" height="1" fill="#008080"/><rect x="15" y="7" width="1" height="1" fill="#FFFFFF"/><rect x="0" y="8" width="1" height="1" fill="#FFFFFF"/><rect x="1" y="8" width="3" height="1" fill="#008080"/><rect x="4" y="8" width="4" height="1" fill="#FFFFFF"/><rect x="8" y="8" width="2" height="1" fill="#008080"/><rect x="10" y="8" width="3" height="1" fill="#FFFFFF"/><rect x="13" y="8" width="2" height="1" fill="#008080"/><rect x="15" y="8" width="1" height="1" fill="#FFFFFF"/><rect x="0" y="9" width="2" height="1" fill="#FFFFFF"/><rect x="2" y="9" width="3" height="1" fill="#008080"/><rect x="5" y="9" width="3" height="1" fill="#FFFFFF"/><rect x="8" y="9" width="1" height="1" fill="#008080"/><rect x="9" y="9" width="3" height="1" fill="#FFFFFF"/><rect x="12" y="9" width="3" height="1" fill="#008080"/><rect x="15" y="9" width="1" height="1" fill="#FFFFFF"/><rect x="0" y="10" width="3" height="1" fill="#FFFFFF"/><rect x="3" y="10" width="3" height="1" fill="#008080"/><rect x="6" y="10" width="2" height="1" fill="#FFFFFF"/><rect x="8" y="10" width="1" height="1" fill="#008080"/><rect x="9" y="10" width="2" height="1" fill="#FFFFFF"/><rect x="11" y="10" width="4" height="1" fill="#008080"/><rect x="15" y="10" width="1" height="1" fill="#FFFFFF"/><rect x="0" y="11" width="8" height="1" fill="#FFFFFF"/><rect x="8" y="11" width="7" height="1" fill="#008080"/><rect x="15" y="11" width="1" height="1" fill="#FFFFFF"/><rect x="0" y="12" width="8" height="1" fill="#FFFFFF"/><rect x="8" y="12" width="6" height="1" fill="#008080"/><rect x="14" y="12" width="2" height="1" fill="#FFFFFF"/><rect x="1" y="13" width="14" height="1" fill="#FFFFFF"/></svg>
<svg class="a" style="left:1188px;top:1003px" width="16" height="14" viewBox="0 0 16 14" shape-rendering="crispEdges"><rect x="5" y="0" width="3" height="1" fill="#000000"/><rect x="9" y="0" width="3" height="1" fill="#000000"/><rect x="4" y="1" width="1" height="1" fill="#000000"/><rect x="5" y="1" width="3" height="1" fill="#00D000"/><rect x="8" y="1" width="1" height="1" fill="#000000"/><rect x="9" y="1" width="3" height="1" fill="#00D000"/><rect x="12" y="1" width="1" height="1" fill="#000000"/><rect x="1" y="2" width="4" height="1" fill="#000000"/><rect x="5" y="2" width="3" height="1" fill="#00D000"/><rect x="8" y="2" width="1" height="1" fill="#000000"/><rect x="9" y="2" width="3" height="1" fill="#00D000"/><rect x="12" y="2" width="3" height="1" fill="#000000"/><rect x="0" y="3" width="1" height="1" fill="#000000"/><rect x="1" y="3" width="3" height="1" fill="#00D000"/><rect x="4" y="3" width="2" height="1" fill="#000000"/><rect x="6" y="3" width="2" height="1" fill="#00D000"/><rect x="8" y="3" width="1" height="1" fill="#000000"/><rect x="9" y="3" width="2" height="1" fill="#00D000"/><rect x="11" y="3" width="1" height="1" fill="#000000"/><rect x="12" y="3" width="3" height="1" fill="#00D000"/><rect x="15" y="3" width="1" height="1" fill="#000000"/><rect x="0" y="4" width="1" height="1" fill="#000000"/><rect x="1" y="4" width="4" height="1" fill="#00D000"/><rect x="5" y="4" width="2" height="1" fill="#000000"/><rect x="7" y="4" width="1" height="1" fill="#00D000"/><rect x="8" y="4" width="1" height="1" fill="#000000"/><rect x="9" y="4" width="1" height="1" fill="#00D000"/><rect x="10" y="4" width="1" height="1" fill="#000000"/><rect x="11" y="4" width="4" height="1" fill="#00D000"/><rect x="15" y="4" width="1" height="1" fill="#000000"/><rect x="1" y="5" width="2" height="1" fill="#000000"/><rect x="3" y="5" width="3" height="1" fill="#00D000"/><rect x="6" y="5" width="1" height="1" fill="#000000"/><rect x="7" y="5" width="3" height="1" fill="#FFFF00"/><rect x="10" y="5" width="1" height="1" fill="#000000"/><rect x="11" y="5" width="3" height="1" fill="#00D000"/><rect x="14" y="5" width="1" height="1" fill="#000000"/><rect x="0" y="6" width="6" height="1" fill="#000000"/><rect x="6" y="6" width="4" height="1" fill="#FFFF00"/><rect x="10" y="6" width="5" height="1" fill="#000000"/><rect x="0" y="7" width="1" height="1" fill="#000000"/><rect x="1" y="7" width="4" height="1" fill="#FF0000"/><rect x="5" y="7" width="1" height="1" fill="#000000"/><rect x="6" y="7" width="4" height="1" fill="#FFFF00"/><rect x="10" y="7" width="1" height="1" fill="#000000"/><rect x="11" y="7" width="4" height="1" fill="#00D000"/><rect x="15" y="7" width="1" height="1" fill="#000000"/><rect x="0" y="8" width="1" height="1" fill="#000000"/><rect x="1" y="8" width="1" height="1" fill="#C00000"/><rect x="2" y="8" width="2" height="1" fill="#FF0000"/><rect x="4" y="8" width="3" height="1" fill="#000000"/><rect x="7" y="8" width="2" height="1" fill="#FFFF00"/><rect x="9" y="8" width="2" height="1" fill="#000000"/><rect x="11" y="8" width="3" height="1" fill="#00D000"/><rect x="14" y="8" width="1" height="1" fill="#000000"/><rect x="1" y="9" width="3" height="1" fill="#000000"/><rect x="4" y="9" width="1" height="1" fill="#808080"/><rect x="5" y="9" width="1" height="1" fill="#00D000"/><rect x="6" y="9" width="1" height="1" fill="#000000"/><rect x="7" y="9" width="1" height="1" fill="#00D000"/><rect x="8" y="9" width="1" height="1" fill="#000000"/><rect x="9" y="9" width="1" height="1" fill="#00D000"/><rect x="10" y="9" width="4" height="1" fill="#000000"/><rect x="2" y="10" width="1" height="1" fill="#000000"/><rect x="3" y="10" width="2" height="1" fill="#808080"/><rect x="5" y="10" width="1" height="1" fill="#000000"/><rect x="6" y="10" width="2" height="1" fill="#00D000"/><rect x="8" y="10" width="1" height="1" fill="#000000"/><rect x="9" y="10" width="3" height="1" fill="#00D000"/><rect x="12" y="10" width="1" height="1" fill="#000000"/><rect x="2" y="11" width="1" height="1" fill="#000000"/><rect x="3" y="11" width="2" height="1" fill="#808080"/><rect x="5" y="11" width="1" height="1" fill="#000000"/><rect x="6" y="11" width="2" height="1" fill="#00D000"/><rect x="8" y="11" width="1" height="1" fill="#000000"/><rect x="9" y="11" width="3" height="1" fill="#00D000"/><rect x="12" y="11" width="1" height="1" fill="#000000"/><rect x="3" y="12" width="3" height="1" fill="#000000"/><rect x="6" y="12" width="2" height="1" fill="#00D000"/><rect x="8" y="12" width="2" height="1" fill="#000000"/><rect x="10" y="12" width="2" height="1" fill="#00D000"/><rect x="12" y="12" width="1" height="1" fill="#000000"/><rect x="5" y="13" width="3" height="1" fill="#000000"/><rect x="10" y="13" width="2" height="1" fill="#000000"/></svg>
<svg class="a" style="left:1207px;top:1003px" width="14" height="14" viewBox="0 0 14 14" shape-rendering="crispEdges"><rect x="2" y="0" width="1" height="1" fill="#FFFF00"/><rect x="3" y="0" width="1" height="1" fill="#FF0000"/><rect x="1" y="1" width="1" height="1" fill="#FF0000"/><rect x="2" y="1" width="2" height="1" fill="#FFFF00"/><rect x="4" y="1" width="1" height="1" fill="#FF0000"/><rect x="7" y="1" width="2" height="1" fill="#FFFF00"/><rect x="2" y="2" width="2" height="1" fill="#FF0000"/><rect x="4" y="2" width="3" height="1" fill="#808000"/><rect x="7" y="2" width="2" height="1" fill="#FFFF00"/><rect x="9" y="2" width="1" height="1" fill="#808000"/><rect x="10" y="2" width="1" height="1" fill="#808080"/><rect x="1" y="3" width="2" height="1" fill="#808080"/><rect x="3" y="3" width="2" height="1" fill="#808000"/><rect x="5" y="3" width="2" height="1" fill="#FFFF00"/><rect x="7" y="3" width="3" height="1" fill="#808000"/><rect x="10" y="3" width="2" height="1" fill="#00FFFF"/><rect x="1" y="4" width="1" height="1" fill="#808080"/><rect x="2" y="4" width="1" height="1" fill="#0000FF"/><rect x="3" y="4" width="2" height="1" fill="#808000"/><rect x="5" y="4" width="2" height="1" fill="#FFFF00"/><rect x="7" y="4" width="2" height="1" fill="#808000"/><rect x="9" y="4" width="2" height="1" fill="#00FFFF"/><rect x="11" y="4" width="2" height="1" fill="#00D000"/><rect x="2" y="5" width="1" height="1" fill="#0000FF"/><rect x="3" y="5" width="3" height="1" fill="#808000"/><rect x="6" y="5" width="1" height="1" fill="#FFFF00"/><rect x="7" y="5" width="1" height="1" fill="#808000"/><rect x="8" y="5" width="2" height="1" fill="#00FFFF"/><rect x="10" y="5" width="3" height="1" fill="#00D000"/><rect x="13" y="5" width="1" height="1" fill="#808080"/><rect x="1" y="6" width="2" height="1" fill="#0000FF"/><rect x="3" y="6" width="1" height="1" fill="#00FFFF"/><rect x="4" y="6" width="4" height="1" fill="#808000"/><rect x="8" y="6" width="1" height="1" fill="#00FFFF"/><rect x="9" y="6" width="3" height="1" fill="#00D000"/><rect x="12" y="6" width="1" height="1" fill="#808000"/><rect x="13" y="6" width="1" height="1" fill="#808080"/><rect x="1" y="7" width="1" height="1" fill="#0000FF"/><rect x="2" y="7" width="3" height="1" fill="#00FFFF"/><rect x="5" y="7" width="2" height="1" fill="#00D000"/><rect x="7" y="7" width="2" height="1" fill="#00FFFF"/><rect x="9" y="7" width="3" height="1" fill="#00D000"/><rect x="12" y="7" width="1" height="1" fill="#008080"/><rect x="13" y="7" width="1" height="1" fill="#808080"/><rect x="1" y="8" width="3" height="1" fill="#0000FF"/><rect x="4" y="8" width="2" height="1" fill="#00FFFF"/><rect x="6" y="8" width="1" height="1" fill="#00D000"/><rect x="7" y="8" width="2" height="1" fill="#0000FF"/><rect x="9" y="8" width="2" height="1" fill="#00D000"/><rect x="11" y="8" width="2" height="1" fill="#008080"/><rect x="1" y="9" width="5" height="1" fill="#0000FF"/><rect x="6" y="9" width="1" height="1" fill="#00FFFF"/><rect x="7" y="9" width="3" height="1" fill="#0000FF"/><rect x="10" y="9" width="1" height="1" fill="#00D000"/><rect x="11" y="9" width="2" height="1" fill="#008080"/><rect x="2" y="10" width="1" height="1" fill="#0000FF"/><rect x="3" y="10" width="1" height="1" fill="#00FFFF"/><rect x="4" y="10" width="6" height="1" fill="#0000FF"/><rect x="10" y="10" width="2" height="1" fill="#008080"/><rect x="2" y="11" width="7" height="1" fill="#0000FF"/><rect x="9" y="11" width="2" height="1" fill="#008080"/><rect x="3" y="12" width="1" height="1" fill="#00FFFF"/><rect x="4" y="12" width="3" height="1" fill="#0000FF"/><rect x="7" y="12" width="2" height="1" fill="#008080"/><rect x="9" y="12" width="1" height="1" fill="#808080"/><rect x="5" y="13" width="3" height="1" fill="#808080"/></svg>
<svg class="a" style="left:73px;top:1003px" width="16" height="16" viewBox="0 0 16 16"><path d="M2 4 L14 4 L14 13 L2 13Z" fill="#E8E8F8" stroke="#7080C0" stroke-width="1"/><path d="M2 4 L8 9 L14 4" fill="none" stroke="#8090D0" stroke-width="1"/><rect x="10" y="5" width="2" height="2" fill="#C06040"/><path d="M9 1 L4 4 L9 4 M4 4 L6 1.5" stroke="#2060E0" stroke-width="2" fill="none"/><path d="M6 15 L12 11 L7 11 M12 11 L10 14" stroke="#2080F0" stroke-width="2" fill="none"/></svg>
<svg class="a" style="left:96px;top:1003px" width="16" height="16" viewBox="0 0 16 16"><ellipse cx="8" cy="8" rx="8" ry="3.4" transform="rotate(-35 8 8)" fill="none" stroke="#60B0F0" stroke-width="1.2"/><path d="M13.2 9 A5.2 5.2 0 1 0 12.4 12 L9.8 11.4 A2.8 2.8 0 0 1 5.6 9 Z M5.6 7.2 A2.6 2.6 0 0 1 10.6 7.2 Z" fill="#2878E0" fill-rule="evenodd"/></svg>
<svg class="a" style="left:119px;top:1003px" width="17" height="16" viewBox="0 0 17 16"><rect x="0" y="2" width="15" height="13" fill="#3070B0"/><rect x="1" y="15" width="15" height="1" fill="#000"/><rect x="15" y="3" width="1" height="13" fill="#000"/><ellipse cx="7.5" cy="8.5" rx="7" ry="6" fill="#F0E8C0"/><rect x="4" y="7" width="6" height="6" fill="#fff" stroke="#000" stroke-width="1"/><path d="M6 9 L13 1.5" stroke="#E0A020" stroke-width="2.2"/><path d="M12.5 2 L14 0.5" stroke="#E03030" stroke-width="2.2"/><rect x="5" y="8" width="2" height="2" fill="#000"/></svg>
</div></body></html>
